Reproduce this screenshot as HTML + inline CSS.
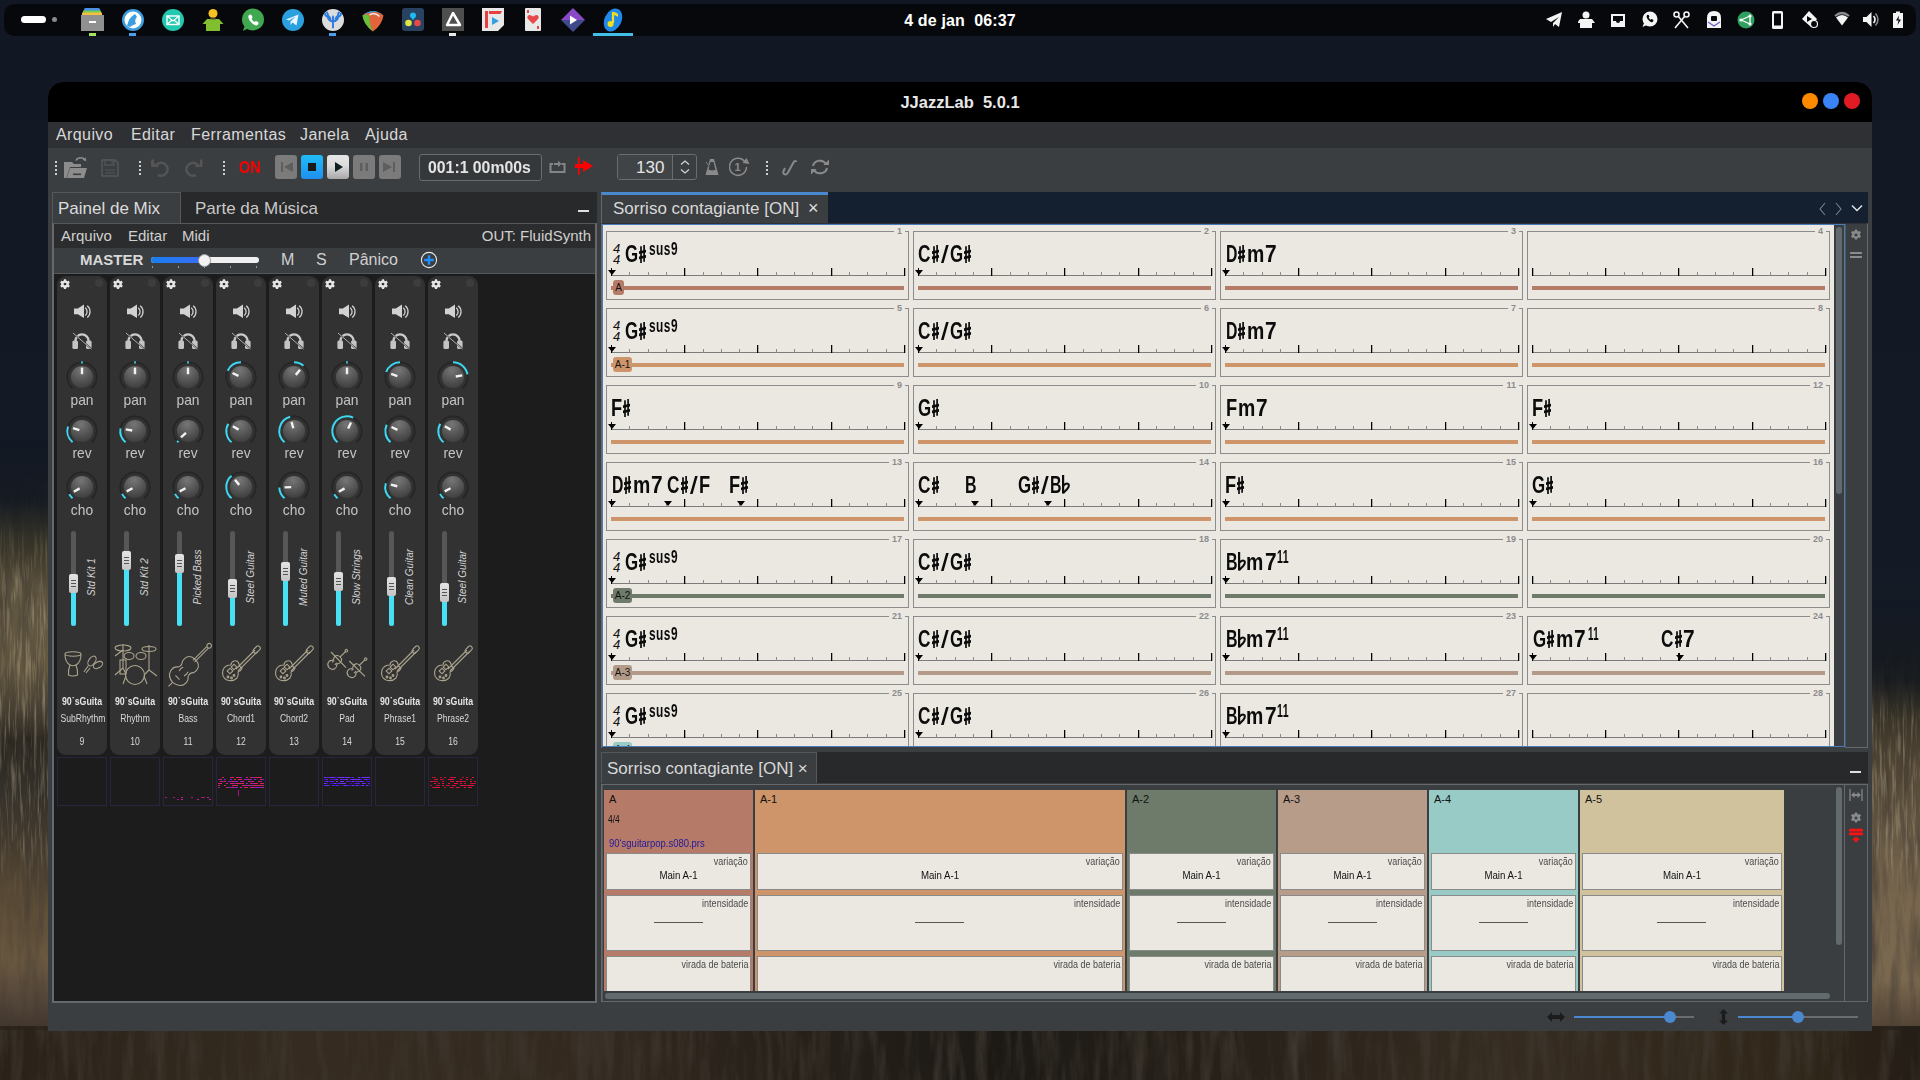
<!DOCTYPE html><html><head><meta charset="utf-8"><style>
*{box-sizing:border-box;margin:0;padding:0}
body{width:1920px;height:1080px;position:relative;overflow:hidden;font-family:"Liberation Sans",sans-serif;background:#131924;}
.a{position:absolute}
.t{white-space:nowrap;line-height:1}
#bg{position:absolute;left:0;top:0;width:1920px;height:1080px;background:linear-gradient(180deg,#121823 0%,#141a25 50%,#171b22 100%);}
#gl{position:absolute;left:0;top:440px;width:60px;height:640px;
background:
 linear-gradient(180deg, rgba(18,24,35,1) 0px, #151a22 60px, #3a3628 110px, #5e5440 150px, #665a42 230px, #4a4234 270px, #2a2620 300px, #34302a 350px, #4a3f30 420px, #5e4e38 470px, #6a5840 520px, #54463a 560px, #3a3028 600px, #2a221c 640px);}
#gr{position:absolute;left:1860px;top:600px;width:60px;height:480px;
background:
 linear-gradient(180deg, rgba(19,25,36,1) 0px, rgba(22,26,30,1) 80px, #3a3428 120px, #564a38 170px, #665844 230px, #78664e 300px, #7a684f 380px, #5a4a3a 420px, #3a3026 450px, #2a231c 480px);}
#gb{position:absolute;left:0;top:1026px;width:1920px;height:54px;
background:
 linear-gradient(90deg, #2a2219 0px, #352b20 300px, #33291f 600px, #262019 800px, #1c1915 1000px, #262019 1200px, #352b20 1500px, #302619 1800px, #241d16 1920px);}

.mn{color:#d4d4d4;font-size:16px}

.cell{border:1px solid #8c8c8c}
.bn{font-size:9px;font-weight:bold;color:#8c8c8c}
.bn span{background:#ebe8e1;padding:0 3px}
.ch{font-size:24px;font-weight:bold;color:#0c0c0c;transform-origin:0 0;letter-spacing:0}
.sh{-webkit-text-stroke:0.7px #0c0c0c}
.sup{font-size:15px;font-weight:bold;color:#0c0c0c;transform-origin:0 0;letter-spacing:0.6px}
.mk{width:0;height:0;border-left:4px solid transparent;border-right:4px solid transparent;border-top:5px solid #000}
.slb{height:15px;border-radius:3px;font-size:10px;color:#111;text-align:center;line-height:15px}
.ts{font-size:13px;font-style:italic;color:#111;line-height:11px}

.klab{font-size:15px;color:#c4c4c4;text-align:center;transform:scaleX(0.92)}
.vt{font-size:10px;font-style:italic;color:#d4d4d4;transform:translate(-50%,-50%) rotate(-90deg);}
.sl1{font-size:10px;font-weight:bold;color:#e4e4e4;text-align:center;transform:scaleX(0.88)}
.sl2{font-size:10px;color:#d8d8d8;text-align:center;transform:scaleX(0.86)}

.pbox{background:#ebe8e1;border:1px solid #8a8a8a}
.plab{font-size:10px;color:#4a4a4a;transform:scaleX(0.9);transform-origin:100% 0}
.pmain{font-size:11px;color:#111;text-align:center;transform:scaleX(0.88)}
</style></head><body><div id="bg"></div><div id="gl"></div><div id="gr"></div><div id="gb"></div>
<svg class="a" style="left:0;top:0" width="1920" height="1080"><defs>
<filter id="nz" x="0" y="0" width="100%" height="100%"><feTurbulence type="fractalNoise" baseFrequency="0.09 0.012" numOctaves="4" seed="7"/><feColorMatrix type="matrix" values="0 0 0 0 0.05  0 0 0 0 0.04  0 0 0 0 0.03  1.9 0 0 0 -0.78"/></filter>
<filter id="nz2" x="0" y="0" width="100%" height="100%"><feTurbulence type="fractalNoise" baseFrequency="0.35 0.025" numOctaves="3" seed="3"/><feColorMatrix type="matrix" values="0 0 0 0 0.78  0 0 0 0 0.68  0 0 0 0 0.45  1.5 0 0 0 -0.72"/></filter>
<linearGradient id="fv" x1="0" y1="0" x2="0" y2="1"><stop offset="0" stop-color="#fff" stop-opacity="0"/><stop offset="0.15" stop-color="#fff" stop-opacity="1"/><stop offset="0.8" stop-color="#fff" stop-opacity="1"/><stop offset="1" stop-color="#fff" stop-opacity="0"/></linearGradient>
<mask id="mv" maskContentUnits="objectBoundingBox"><rect width="1" height="1" fill="url(#fv)"/></mask>
</defs>
<rect x="0" y="470" width="49" height="610" filter="url(#nz)" opacity="0.8" mask="url(#mv)"/><rect x="0" y="520" width="49" height="380" filter="url(#nz2)" opacity="0.6" mask="url(#mv)"/>
<rect x="1872" y="640" width="48" height="440" filter="url(#nz)" opacity="0.8" mask="url(#mv)"/><rect x="1872" y="690" width="48" height="200" filter="url(#nz2)" opacity="0.6" mask="url(#mv)"/>
<rect x="0" y="1030" width="1920" height="50" filter="url(#nz)"/>
</svg>
<div class="a" style="left:4px;top:4px;width:1912px;height:32px;border-radius:10px;background:#07080b"></div>
<div class="a t" style="left:0px;top:13px;width:1920px;text-align:center;color:#fff;font-size:16px;font-weight:bold;letter-spacing:0.15px">4 de jan&nbsp; 06:37</div>
<div class="a" style="left:21px;top:16px;width:25px;height:7px;border-radius:4px;background:#fff"></div>
<div class="a" style="left:52px;top:17px;width:5px;height:5px;border-radius:50%;background:#8a8a8a"></div>
<svg class="a" style="left:81px;top:8px" width="24" height="24" viewBox="0 0 24 24"><rect x="3" y="0" width="16" height="4" rx="1.5" fill="#4a90e8"/><rect x="2" y="2.5" width="18" height="3" fill="#70d050"/><rect x="1" y="4.5" width="20" height="3" fill="#f8c040"/><rect x="0" y="7" width="23" height="16" fill="#909090"/><rect x="8" y="13" width="7" height="2" fill="#fff"/></svg>
<svg class="a" style="left:121px;top:8px" width="24" height="24" viewBox="0 0 24 24"><circle cx="12" cy="12" r="11" fill="#3a9ee0"/><circle cx="12" cy="12" r="8.5" fill="#fff"/><path d="M6 18 Q8 9 14 6 L16 9 Q13 12 15 16 Q11 17 9 19z" fill="#3a9ee0"/></svg>
<svg class="a" style="left:161px;top:8px" width="24" height="24" viewBox="0 0 24 24"><circle cx="12" cy="12" r="11" fill="#22c8b0"/><rect x="6" y="8" width="12" height="8.5" fill="none" stroke="#fff" stroke-width="1.4"/><path d="M6 8l6 5 6-5M6 16.5l4.5-4M18 16.5l-4.5-4" stroke="#fff" stroke-width="1.2" fill="none"/></svg>
<svg class="a" style="left:201px;top:8px" width="24" height="24" viewBox="0 0 24 24"><circle cx="12" cy="5.5" r="4.5" fill="#f8c020"/><path d="M6 11h12l4.5 5h-3.5v7h-14v-7h-3.5z" fill="#80c030"/><rect x="9.5" y="9.5" width="5" height="2" fill="#4a4a2a"/></svg>
<svg class="a" style="left:241px;top:8px" width="24" height="24" viewBox="0 0 24 24"><circle cx="12" cy="11.5" r="11" fill="#40a850"/><path d="M2 23l2-6 4 3z" fill="#40a850"/><path d="M8 7q1.5-1 2.5 0l1 2q0 1-1 1.5q1 2.5 3 3.5q.6-1 1.5-1l2 1q1 1 0 2.5q-2 2-5-0.5q-4-3-4.5-6q-.5-2 .5-3z" fill="#fff"/></svg>
<svg class="a" style="left:281px;top:8px" width="24" height="24" viewBox="0 0 24 24"><circle cx="12" cy="12" r="11" fill="#2aa0e0"/><path d="M5 11.5l12.5-5-2 11-4-3-2 2.5v-3.5l5-5-6.5 4z" fill="#e8f6ff"/></svg>
<svg class="a" style="left:321px;top:8px" width="24" height="24" viewBox="0 0 24 24"><circle cx="12" cy="12" r="11" fill="#dcdcdc"/><path d="M12 19.5v-6 M12 13.5q-4.5-.5-5.5-5 M12 13.5q4.5-.5 5.5-5 M6.5 8.5q-2.5-.5-2.5-3 M6.5 8.5q1-2.5-.5-4 M17.5 8.5q2.5-.5 2.5-3 M17.5 8.5q-1-2.5.5-4 M9.5 11q-.5-2.5-2.5-3.5 M14.5 11q.5-2.5 2.5-3.5 M12 13.5v-5" stroke="#2a7ae0" stroke-width="1.9" fill="none" stroke-linecap="round"/></svg>
<svg class="a" style="left:361px;top:8px" width="24" height="24" viewBox="0 0 24 24"><path d="M1.5 7.5Q12 -1.5 22.5 7.5Q21 17 12 23.5Q3 17 1.5 7.5z" fill="#e2643c"/><path d="M1.5 7.5Q5 6 8.5 8Q8 16 12 23.5Q3 17 1.5 7.5z" fill="#62c03a"/><path d="M1.5 7.5Q12 -1.5 22.5 7.5Q17 3.5 12 4.2Q6 4.5 1.5 7.5z" fill="#2f9be0"/><path d="M8.5 7Q14 3.8 18.5 8.5" stroke="#fff" stroke-width="1.3" fill="none"/></svg>
<svg class="a" style="left:402px;top:8px" width="24" height="24" viewBox="0 0 24 24"><rect x="0" y="0" width="22" height="23" rx="3" fill="#2a4262"/><circle cx="11" cy="7.5" r="3" fill="#20b8f0"/><path d="M11 7.5v4" stroke="#20b8f0" stroke-width="2"/><circle cx="6.5" cy="15" r="3.3" fill="#e0e840"/><circle cx="15.5" cy="15" r="3.3" fill="#e84848"/></svg>
<svg class="a" style="left:442px;top:8px" width="24" height="24" viewBox="0 0 24 24"><rect x="0" y="0" width="22" height="23" fill="#4e4e4e"/><path d="M11 5l7 12h-13z" fill="none" stroke="#fff" stroke-width="2.5" stroke-linejoin="round"/></svg>
<div class="a" style="left:449px;top:33px;width:7px;height:3px;background:#e8e8e8"></div>
<svg class="a" style="left:482px;top:8px" width="24" height="24" viewBox="0 0 24 24"><path d="M0 0h22v17l-6 6h-16z" fill="#e8e8e8"/><rect x="3" y="3" width="3" height="17" fill="#e84040"/><path d="M7 3h13l-1.5 3h-11.5z" fill="#e84040"/><path d="M10 9l7 4-7 4z" fill="#30a0e0"/></svg>
<svg class="a" style="left:525px;top:8px" width="16" height="24" viewBox="0 0 16 24"><rect x="0" y="0" width="16" height="23" rx="1" fill="#e8e8e8"/><path d="M8 16l-5-5q-1.5-2 0-3.5q2-1.5 5 1q3-2.5 5-1q1.5 1.5 0 3.5z" fill="#e84848"/><rect x="2" y="2" width="2" height="3" fill="#e84848"/><rect x="12" y="18" width="2" height="3" fill="#e84848"/></svg>
<svg class="a" style="left:561px;top:8px" width="24" height="24" viewBox="0 0 24 24"><path d="M12 0l12 12h-24z" fill="#8848c8"/><path d="M0 12h24l-12 12z" fill="#3e4a8a"/><path d="M9 7.5l7 4.5-7 4.5z" fill="#fff"/></svg>
<svg class="a" style="left:601px;top:8px" width="24" height="24" viewBox="0 0 24 24"><ellipse cx="12" cy="12" rx="8.5" ry="12" transform="rotate(25 12 12)" fill="#2088e8"/><path d="M12 4v11" stroke="#f0e020" stroke-width="2.2"/><circle cx="9.5" cy="16" r="3" fill="#f0e020"/><path d="M12 4q3 0 5 2v3q-2-2-5-2z" fill="#f0e020"/></svg>
<div class="a" style="left:89px;top:33px;width:7px;height:3px;background:#a8e060"></div>
<div class="a" style="left:129px;top:33px;width:7px;height:3px;background:#4aa0e8"></div>
<div class="a" style="left:329px;top:33px;width:7px;height:3px;background:#4aa0e8"></div>
<div class="a" style="left:593px;top:33px;width:40px;height:3px;background:#40c0e8"></div>
<svg class="a" style="left:1546px;top:11px" width="18" height="18" viewBox="0 0 18 18"><path d="M0 8l16-7-3 15-4-3-2 3v-4l6-6-8 5z" fill="#f4f4f4"/></svg>
<svg class="a" style="left:1578px;top:11px" width="18" height="18" viewBox="0 0 18 18"><circle cx="8" cy="4" r="3.5" fill="#f4f4f4"/><path d="M2 8h12l3 4h-3v5h-12v-5h-3z" fill="#f4f4f4"/></svg>
<svg class="a" style="left:1610px;top:11px" width="16" height="18" viewBox="0 0 16 18"><path d="M1 3h14v13h-14z" fill="#f4f4f4"/><path d="M3 5h10v5h-3q0 2-2 2t-2-2h-3z" fill="#07080b"/></svg>
<svg class="a" style="left:1642px;top:11px" width="16" height="18" viewBox="0 0 16 18"><circle cx="8" cy="8" r="7.5" fill="#f4f4f4"/><path d="M0.5 16l1.5-4 3 2z" fill="#f4f4f4"/><path d="M5 4q1-.7 1.7 0l.7 1.4q0 .7-.7 1q.7 1.7 2 2.4q.4-.7 1-.7l1.4.7q.7 .7 0 1.7q-1.4 1.4-3.4-.3q-2.7-2-3-4q-.3-1.4.3-2z" fill="#07080b"/></svg>
<svg class="a" style="left:1673px;top:11px" width="18" height="18" viewBox="0 0 18 18"><circle cx="3.5" cy="3.5" r="2.5" fill="none" stroke="#f4f4f4" stroke-width="1.6"/><circle cx="13.5" cy="3.5" r="2.5" fill="none" stroke="#f4f4f4" stroke-width="1.6"/><path d="M5 5l10 12M12 5l-10 12" stroke="#f4f4f4" stroke-width="1.6"/></svg>
<svg class="a" style="left:1707px;top:11px" width="14" height="18" viewBox="0 0 14 18"><path d="M0 7q0-7 7-7t7 7v10h-14z" fill="#f4f4f4"/><rect x="4" y="5" width="6" height="5" rx="1" fill="#07080b"/><path d="M1 11l6 4 6-4" stroke="#6a5acd" stroke-width="1.2" fill="none"/></svg>
<svg class="a" style="left:1737px;top:11px" width="18" height="18" viewBox="0 0 18 18"><circle cx="9" cy="9" r="8.5" fill="#30a060"/><path d="M4 9l9-4M4 9l9 4M13 5v8" stroke="#fff" stroke-width="1.3" fill="none"/><circle cx="4" cy="9" r="1.6" fill="#fff"/><circle cx="13" cy="5" r="1.6" fill="#fff"/><circle cx="13" cy="13" r="1.6" fill="#fff"/></svg>
<svg class="a" style="left:1772px;top:11px" width="11" height="18" viewBox="0 0 11 18"><rect x="0" y="0" width="11" height="18" rx="1.5" fill="#f4f4f4"/><rect x="2" y="2.5" width="7" height="12" fill="#07080b"/></svg>
<svg class="a" style="left:1802px;top:11px" width="17" height="18" viewBox="0 0 17 18"><path d="M7 0l8 8-6 8-9-8z" fill="#f4f4f4"/><path d="M5 5l5 3-5 3z" fill="#07080b"/><circle cx="12" cy="13" r="3.5" fill="#07080b" stroke="#f4f4f4" stroke-width="1.2"/></svg>
<svg class="a" style="left:1834px;top:11px" width="16" height="18" viewBox="0 0 16 18"><path d="M1 5q7-6 14 0" stroke="#8a8a8a" stroke-width="2.2" fill="none"/><path d="M2 6.5q6-5 12 0l-6 8z" fill="#f4f4f4"/></svg>
<svg class="a" style="left:1863px;top:11px" width="16" height="18" viewBox="0 0 16 18"><path d="M0 6h3.5l5-5v15l-5-5h-3.5z" fill="#f4f4f4"/><path d="M10.5 5q3 3.5 0 7" stroke="#f4f4f4" stroke-width="1.6" fill="none"/><path d="M12.5 2.5q5 6 0 12" stroke="#8a8a8a" stroke-width="1.5" fill="none"/></svg>
<svg class="a" style="left:1893px;top:11px" width="10" height="18" viewBox="0 0 10 18"><rect x="0" y="2" width="10" height="15" fill="#f4f4f4"/><rect x="3" y="0.5" width="4" height="2" fill="#f4f4f4"/><path d="M6 4.5l-3 5h2.5l-1 4.5 3.5-5.5h-2.5z" fill="#07080b"/></svg>
<div class="a" style="left:48px;top:82px;width:1824px;height:949px;background:#3b3e41;border-radius:15px 15px 0 0"></div>
<div class="a" style="left:48px;top:82px;width:1824px;height:40px;background:#000;border-radius:15px 15px 0 0"></div>
<div class="a t" style="left:48px;top:94px;width:1824px;text-align:center;color:#e8e8e8;font-size:16.5px;font-weight:bold">JJazzLab&nbsp; 5.0.1</div>
<div class="a" style="left:1802px;top:93px;width:16px;height:16px;border-radius:50%;background:#ff8a00"></div>
<div class="a" style="left:1823px;top:93px;width:16px;height:16px;border-radius:50%;background:#3b82f6"></div>
<div class="a" style="left:1844px;top:93px;width:16px;height:16px;border-radius:50%;background:#e01b24"></div>
<div class="a" style="left:48px;top:122px;width:1824px;height:26px;background:#2f3033"></div>
<div class="a t" style="left:56px;top:127px;color:#d8d8d8;font-size:16px;letter-spacing:0.4px">Arquivo</div>
<div class="a t" style="left:131px;top:127px;color:#d8d8d8;font-size:16px;letter-spacing:0.4px">Editar</div>
<div class="a t" style="left:191px;top:127px;color:#d8d8d8;font-size:16px;letter-spacing:0.4px">Ferramentas</div>
<div class="a t" style="left:300px;top:127px;color:#d8d8d8;font-size:16px;letter-spacing:0.4px">Janela</div>
<div class="a t" style="left:365px;top:127px;color:#d8d8d8;font-size:16px;letter-spacing:0.4px">Ajuda</div>
<div class="a" style="left:55px;top:161px;width:2px;height:2px;background:#d0d0d0"></div><div class="a" style="left:55px;top:165px;width:2px;height:2px;background:#d0d0d0"></div><div class="a" style="left:55px;top:169px;width:2px;height:2px;background:#d0d0d0"></div><div class="a" style="left:55px;top:173px;width:2px;height:2px;background:#d0d0d0"></div>
<div class="a" style="left:139px;top:161px;width:2px;height:2px;background:#d0d0d0"></div><div class="a" style="left:139px;top:165px;width:2px;height:2px;background:#d0d0d0"></div><div class="a" style="left:139px;top:169px;width:2px;height:2px;background:#d0d0d0"></div><div class="a" style="left:139px;top:173px;width:2px;height:2px;background:#d0d0d0"></div>
<div class="a" style="left:223px;top:161px;width:2px;height:2px;background:#d0d0d0"></div><div class="a" style="left:223px;top:165px;width:2px;height:2px;background:#d0d0d0"></div><div class="a" style="left:223px;top:169px;width:2px;height:2px;background:#d0d0d0"></div><div class="a" style="left:223px;top:173px;width:2px;height:2px;background:#d0d0d0"></div>
<div class="a" style="left:766px;top:161px;width:2px;height:2px;background:#d0d0d0"></div><div class="a" style="left:766px;top:165px;width:2px;height:2px;background:#d0d0d0"></div><div class="a" style="left:766px;top:169px;width:2px;height:2px;background:#d0d0d0"></div><div class="a" style="left:766px;top:173px;width:2px;height:2px;background:#d0d0d0"></div>
<svg class="a" style="left:64px;top:156px" width="24" height="23" viewBox="0 0 24 23">
      <path d="M0 6h8l2 2h7v3H6l-3.5 11H0z" fill="#8c8c8c"/><path d="M6 12h17l-3 10H3z" fill="#8c8c8c"/><rect x="9" y="17.5" width="8" height="1.6" fill="#3b3e41"/>
      <path d="M12 4.5a5 5 0 0 1 9 0" stroke="#8c8c8c" stroke-width="1.6" fill="none"/><path d="M19 4l3.5 1-1.2-3.8z" fill="#8c8c8c"/></svg>
<svg class="a" style="left:101px;top:159px" width="18" height="18" viewBox="0 0 18 18">
      <path d="M1 1h13l3 3v13H1z" fill="none" stroke="#555" stroke-width="1.6"/><rect x="4" y="1" width="9" height="5" fill="none" stroke="#555" stroke-width="1.4"/>
      <rect x="10.5" y="2" width="1.2" height="2.5" fill="#555"/><path d="M4 11h10M4 14h10" stroke="#555" stroke-width="1.2"/></svg>
<svg class="a" style="left:151px;top:159px" width="18" height="18" viewBox="0 0 18 18">
      <path d="M4 8a6.5 6.5 0 1 1 3 8" stroke="#555" stroke-width="2.4" fill="none"/><path d="M0 1v7h7" fill="#555"/><path d="M0.5 0.5h2.5v5h4.5v2.5H0.5z" fill="#555"/></svg>
<svg class="a" style="left:185px;top:159px" width="18" height="18" viewBox="0 0 18 18">
      <path d="M14 8a6.5 6.5 0 1 0 -3 8" stroke="#555" stroke-width="2.4" fill="none"/><path d="M17.5 0.5h-2.5v5h-4.5v2.5h7z" fill="#555"/></svg>
<div class="a t" style="left:239px;top:159px;font-size:17px;font-weight:bold;color:#ff0000;transform:scaleX(0.85);transform-origin:0 0">ON</div>
<div class="a" style="left:275px;top:155px;width:22px;height:24px;border-radius:3px;background:#7b7b7b"></div>
<svg class="a" style="left:275px;top:155px" width="22" height="24" viewBox="0 0 22 24"><path d="M6 7h2v10H6z M18 7v10l-9-5z" fill="#5e5e5e"/></svg>
<div class="a" style="left:301px;top:155px;width:22px;height:24px;border-radius:3px;background:linear-gradient(#20bdf8,#1f8ff0)"></div>
<svg class="a" style="left:301px;top:155px" width="22" height="24" viewBox="0 0 22 24"><rect x="7" y="8" width="8" height="8" fill="#1a1a1a"/></svg>
<div class="a" style="left:327px;top:155px;width:22px;height:24px;border-radius:3px;background:linear-gradient(#e6e6e6 0%,#dcdcdc 45%,#a8a8a8 100%)"></div>
<svg class="a" style="left:327px;top:155px" width="22" height="24" viewBox="0 0 22 24"><path d="M8 7v10l8-5z" fill="#0f2020"/></svg>
<div class="a" style="left:353px;top:155px;width:22px;height:24px;border-radius:3px;background:#7b7b7b"></div>
<svg class="a" style="left:353px;top:155px" width="22" height="24" viewBox="0 0 22 24"><path d="M7 8h2.5v8H7z M12.5 8H15v8h-2.5z" fill="#5e5e5e"/></svg>
<div class="a" style="left:379px;top:155px;width:22px;height:24px;border-radius:3px;background:#7b7b7b"></div>
<svg class="a" style="left:379px;top:155px" width="22" height="24" viewBox="0 0 22 24"><path d="M4 7v10l9-5z M14 7h2v10h-2z" fill="#5e5e5e"/></svg>
<div class="a" style="left:419px;top:154px;width:123px;height:27px;border:1px solid #6a6d70;border-radius:3px;background:#35383b"></div>
<div class="a t" style="left:428px;top:159px;font-size:17px;font-weight:bold;color:#e4e4e4;transform:scaleX(0.93);transform-origin:0 0">001:1 00m00s</div>
<svg class="a" style="left:549px;top:159px" width="18" height="16" viewBox="0 0 18 16">
      <path d="M4 5h-2.5v8h14v-8h-3" stroke="#858585" stroke-width="2" fill="none"/><path d="M5 5h6" stroke="#858585" stroke-width="2"/><path d="M9 1.5l3.5 3.5-3.5 3z" fill="#858585"/></svg>
<svg class="a" style="left:575px;top:157px" width="20" height="20" viewBox="0 0 20 20">
      <rect x="3" y="0" width="1.6" height="18" fill="#ff0000"/><path d="M0 7h8v-4l10 6-10 6v-4h-8z" fill="#ff0000"/></svg>
<div class="a" style="left:617px;top:154px;width:80px;height:26px;border:1px solid #6a6d70;border-radius:3px;background:#3b3e41"></div>
<div class="a" style="left:618px;top:155px;width:54px;height:24px;background:#414447"></div>
<div class="a" style="left:672px;top:155px;width:1px;height:24px;background:#6a6d70"></div>
<div class="a t" style="left:636px;top:159px;font-size:17px;color:#e4e4e4">130</div>
<svg class="a" style="left:678px;top:159px" width="14" height="16" viewBox="0 0 14 16">
      <path d="M3 5.5l4-3.5 4 3.5 M3 10.5l4 3.5 4-3.5" stroke="#d8d8d8" stroke-width="1.1" fill="none"/></svg>
<svg class="a" style="left:705px;top:158px" width="16" height="18" viewBox="0 0 16 18">
      <path d="M5 1h4l4.5 16h-13z" fill="#8a8a8a"/><path d="M1 4l7 9" stroke="#3b3e41" stroke-width="1.6"/><path d="M1 4l7 9" stroke="#8a8a8a" stroke-width="0.9"/>
      <path d="M5.5 4h3l2 8h-7z" fill="#3b3e41"/></svg>
<svg class="a" style="left:729px;top:157px" width="22" height="20" viewBox="0 0 22 20">
      <path d="M16 5a8.5 8.5 0 1 0 1.5 5" stroke="#8a8a8a" stroke-width="1.5" fill="none"/><path d="M13.5 6l4-5 3 6z" fill="#8a8a8a"/>
      <text x="5.5" y="14" font-size="11" font-weight="bold" fill="#8a8a8a" font-family="Liberation Sans">1</text></svg>
<svg class="a" style="left:781px;top:160px" width="16" height="16" viewBox="0 0 16 16">
      <path d="M13 1.5q2 -1 2.5 .5 M13 1.5l-6 11q-2 3 -4 1.5q-1.5 -1 0 -4l1-2" stroke="#8a8a8a" stroke-width="2" fill="none"/></svg>
<svg class="a" style="left:810px;top:158px" width="20" height="18" viewBox="0 0 20 18">
      <path d="M3 8a7 6.5 0 0 1 13-2 M17 10a7 6.5 0 0 1 -13 2" stroke="#8a8a8a" stroke-width="2" fill="none"/>
      <path d="M13.5 7h5.5v-5.5z M6.5 11h-5.5v5.5z" fill="#8a8a8a"/></svg>
<div class="a" style="left:52px;top:192px;width:545px;height:811px;background:#28292b"></div>
<div class="a" style="left:52px;top:192px;width:129px;height:32px;background:#3b3e41;border:1px solid #55585b;border-bottom:none"></div>
<div class="a t" style="left:58px;top:200px;color:#dcdcdc;font-size:17px">Painel de Mix</div>
<div class="a t" style="left:195px;top:200px;color:#c8c8c8;font-size:17px">Parte da M&uacute;sica</div>
<div class="a" style="left:578px;top:210px;width:11px;height:1.5px;background:#e0e0e0"></div>
<div class="a" style="left:52px;top:223px;width:545px;height:25px;background:#2b2c2e;border-top:1px solid #55585b"></div>
<div class="a t" style="left:61px;top:228px;color:#d0d0d0;font-size:15px">Arquivo</div>
<div class="a t" style="left:128px;top:228px;color:#d0d0d0;font-size:15px">Editar</div>
<div class="a t" style="left:182px;top:228px;color:#d0d0d0;font-size:15px">Midi</div>
<div class="a t" style="left:0px;top:228px;width:591px;text-align:right;color:#d0d0d0;font-size:15px">OUT: FluidSynth</div>
<div class="a" style="left:52px;top:248px;width:545px;height:25px;background:#3b3e41"></div>
<div class="a t" style="left:80px;top:252px;color:#d8d8d8;font-size:15px;font-weight:bold">MASTER</div>
<div class="a t" style="left:281px;top:252px;color:#d0d0d0;font-size:16px">M</div>
<div class="a t" style="left:316px;top:252px;color:#d0d0d0;font-size:16px">S</div>
<div class="a t" style="left:349px;top:252px;color:#d0d0d0;font-size:16px">P&acirc;nico</div>
<div class="a" style="left:52px;top:273px;width:545px;height:730px;background:#1c1c1c;border-top:1px solid #55585b"></div>
<svg width="0" height="0" style="position:absolute"><defs><radialGradient id="kg" cx="0.45" cy="0.2" r="0.9"><stop offset="0" stop-color="#767676"/><stop offset="0.6" stop-color="#505050"/><stop offset="1" stop-color="#383838"/></radialGradient></defs></svg>
<div class="a" style="left:57px;top:276px;width:50px;height:479px;background:#323232;border-radius:9px"></div>
<svg class="a" style="left:58.5px;top:277.5px" width="12" height="12" viewBox="-7 -7 14 14"><path fill="#e6e6e6" d="M-1.2 -5.5h2.4l.4 1.6a4 4 0 0 1 1.2 .7l1.6-.5 1.2 2.1-1.2 1.1a4 4 0 0 1 0 1.4l1.2 1.1-1.2 2.1-1.6-.5a4 4 0 0 1-1.2 .7l-.4 1.6h-2.4l-.4-1.6a4 4 0 0 1-1.2-.7l-1.6 .5-1.2-2.1 1.2-1.1a4 4 0 0 1 0-1.4l-1.2-1.1 1.2-2.1 1.6 .5a4 4 0 0 1 1.2-.7z M0 -1.6a1.6 1.6 0 1 0 .01 0z"/></svg>
<div class="a" style="left:95px;top:279px;width:8px;height:8px;border-radius:50%;background:#3d3d3d"></div>
<svg class="a" style="left:72px;top:302px" width="20" height="20" viewBox="-10 -9 20 20"><path fill="#d2d2d2" d="M-8 -2.6h3.8l6.2-3.8v13.4l-6.2-3.8h-3.8z"/><path d="M3.2 -3.2a5 5 0 0 1 0 7.8 M5.2 -5.2a7.6 7.6 0 0 1 0 11.8" stroke="#d2d2d2" stroke-width="1.3" fill="none"/></svg>
<svg class="a" style="left:72px;top:332px" width="20" height="20" viewBox="-10 -9 20 20"><path d="M-6.6 2v-2a6.6 6.6 0 0 1 13.2 0v2" stroke="#cacaca" stroke-width="2.3" fill="none"/><rect x="-9.6" y="-0.5" width="5.6" height="8.5" rx="1.5" fill="#c4c4c4"/><rect x="4" y="-0.5" width="5.6" height="8.5" rx="1.5" fill="#c4c4c4"/><line x1="-9" y1="-8" x2="9.5" y2="8" stroke="#2c2c2c" stroke-width="1.6"/><line x1="-9" y1="-8" x2="9.5" y2="8" stroke="#d8d8d8" stroke-width="0.8"/></svg>
<svg class="a" style="left:64px;top:359px" width="36" height="36" viewBox="-18 -18 36 36"><path d="M-9.45 11.26 A14.7 14.7 0 1 1 9.45 11.26" fill="none" stroke="#262626" stroke-width="1.8"/><path d="M-0.8 -14.7 L0.8 -14.7" stroke="#3ed8f2" stroke-width="2.2" fill="none"/><circle r="11.1" fill="url(#kg)"/><line x1="0.00" y1="-2.80" x2="0.00" y2="-9.40" stroke="#f2f2f2" stroke-width="2.4"/></svg>
<svg class="a" style="left:64px;top:413px" width="36" height="36" viewBox="-18 -18 36 36"><path d="M-9.45 11.26 A14.7 14.7 0 1 1 9.45 11.26" fill="none" stroke="#262626" stroke-width="1.8"/><path d="M-9.45 11.26 A14.7 14.7 0 0 1 -13.98 -4.54" fill="none" stroke="#3ed8f2" stroke-width="2"/><circle r="11.1" fill="url(#kg)"/><line x1="-2.66" y1="-0.87" x2="-8.94" y2="-2.90" stroke="#f2f2f2" stroke-width="2.4"/></svg>
<svg class="a" style="left:64px;top:469px" width="36" height="36" viewBox="-18 -18 36 36"><path d="M-9.45 11.26 A14.7 14.7 0 1 1 9.45 11.26" fill="none" stroke="#262626" stroke-width="1.8"/><path d="M-9.45 11.26 A14.7 14.7 0 0 1 -12.73 7.35" fill="none" stroke="#3ed8f2" stroke-width="2"/><circle r="11.1" fill="url(#kg)"/><line x1="-2.42" y1="1.40" x2="-8.14" y2="4.70" stroke="#f2f2f2" stroke-width="2.4"/></svg>
<div class="a t klab" style="left:57px;top:392px;width:50px">pan</div>
<div class="a t klab" style="left:57px;top:445px;width:50px">rev</div>
<div class="a t klab" style="left:57px;top:502px;width:50px">cho</div>
<div class="a" style="left:71px;top:531px;width:5px;height:95px;border-radius:2.5px;background:#575757"></div>
<div class="a" style="left:71px;top:582px;width:5px;height:44px;border-radius:0 0 2.5px 2.5px;background:#48e0f5"></div>
<div class="a" style="left:69px;top:574px;width:9px;height:19px;border-radius:2px;background:linear-gradient(#e4e4e4,#c4c4c4)"></div>
<div class="a" style="left:71px;top:580px;width:5px;height:1px;background:#555"></div>
<div class="a" style="left:71px;top:583px;width:5px;height:1px;background:#555"></div>
<div class="a" style="left:71px;top:586px;width:5px;height:1px;background:#555"></div>
<div class="a t vt" style="left:92px;top:577px">Std Kit 1</div>
<svg class="a" style="left:64px;top:651px" width="46" height="44" viewBox="0 0 46 44" overflow="visible"><g fill="none" stroke="#aca48e" stroke-width="1.1">
   <ellipse cx="9" cy="3" rx="8" ry="2.2"/><path d="M1 3.5 Q1 11 6 14 L6 14 Q4 19 4.5 24 Q9 26 13.5 24 Q14 19 12 14 Q17 11 17 3.5"/>
   <path d="M6 14 Q9 15.5 12 14"/>
   <ellipse cx="28" cy="10" rx="3.2" ry="5.5" transform="rotate(35 28 10)"/><ellipse cx="34" cy="14" rx="3" ry="5" transform="rotate(60 34 14)"/>
   <path d="M24 15 L20 21 M26 17 L22 22"/></g></svg>
<div class="a t sl1" style="left:57px;top:697px;width:50px">90&#729;sGuita</div>
<div class="a t sl2" style="left:57px;top:714px;width:50px">SubRhythm</div>
<div class="a t sl2" style="left:57px;top:736.5px;width:50px">9</div>
<div class="a" style="left:57px;top:757px;width:50px;height:49px;border:1px solid #26263e"></div>
<div class="a" style="left:110px;top:276px;width:50px;height:479px;background:#323232;border-radius:9px"></div>
<svg class="a" style="left:111.5px;top:277.5px" width="12" height="12" viewBox="-7 -7 14 14"><path fill="#e6e6e6" d="M-1.2 -5.5h2.4l.4 1.6a4 4 0 0 1 1.2 .7l1.6-.5 1.2 2.1-1.2 1.1a4 4 0 0 1 0 1.4l1.2 1.1-1.2 2.1-1.6-.5a4 4 0 0 1-1.2 .7l-.4 1.6h-2.4l-.4-1.6a4 4 0 0 1-1.2-.7l-1.6 .5-1.2-2.1 1.2-1.1a4 4 0 0 1 0-1.4l-1.2-1.1 1.2-2.1 1.6 .5a4 4 0 0 1 1.2-.7z M0 -1.6a1.6 1.6 0 1 0 .01 0z"/></svg>
<div class="a" style="left:148px;top:279px;width:8px;height:8px;border-radius:50%;background:#3d3d3d"></div>
<svg class="a" style="left:125px;top:302px" width="20" height="20" viewBox="-10 -9 20 20"><path fill="#d2d2d2" d="M-8 -2.6h3.8l6.2-3.8v13.4l-6.2-3.8h-3.8z"/><path d="M3.2 -3.2a5 5 0 0 1 0 7.8 M5.2 -5.2a7.6 7.6 0 0 1 0 11.8" stroke="#d2d2d2" stroke-width="1.3" fill="none"/></svg>
<svg class="a" style="left:125px;top:332px" width="20" height="20" viewBox="-10 -9 20 20"><path d="M-6.6 2v-2a6.6 6.6 0 0 1 13.2 0v2" stroke="#cacaca" stroke-width="2.3" fill="none"/><rect x="-9.6" y="-0.5" width="5.6" height="8.5" rx="1.5" fill="#c4c4c4"/><rect x="4" y="-0.5" width="5.6" height="8.5" rx="1.5" fill="#c4c4c4"/><line x1="-9" y1="-8" x2="9.5" y2="8" stroke="#2c2c2c" stroke-width="1.6"/><line x1="-9" y1="-8" x2="9.5" y2="8" stroke="#d8d8d8" stroke-width="0.8"/></svg>
<svg class="a" style="left:117px;top:359px" width="36" height="36" viewBox="-18 -18 36 36"><path d="M-9.45 11.26 A14.7 14.7 0 1 1 9.45 11.26" fill="none" stroke="#262626" stroke-width="1.8"/><path d="M-0.8 -14.7 L0.8 -14.7" stroke="#3ed8f2" stroke-width="2.2" fill="none"/><circle r="11.1" fill="url(#kg)"/><line x1="0.00" y1="-2.80" x2="0.00" y2="-9.40" stroke="#f2f2f2" stroke-width="2.4"/></svg>
<svg class="a" style="left:117px;top:413px" width="36" height="36" viewBox="-18 -18 36 36"><path d="M-9.45 11.26 A14.7 14.7 0 1 1 9.45 11.26" fill="none" stroke="#262626" stroke-width="1.8"/><path d="M-9.45 11.26 A14.7 14.7 0 0 1 -14.48 -2.55" fill="none" stroke="#3ed8f2" stroke-width="2"/><circle r="11.1" fill="url(#kg)"/><line x1="-2.76" y1="-0.49" x2="-9.26" y2="-1.63" stroke="#f2f2f2" stroke-width="2.4"/></svg>
<svg class="a" style="left:117px;top:469px" width="36" height="36" viewBox="-18 -18 36 36"><path d="M-9.45 11.26 A14.7 14.7 0 1 1 9.45 11.26" fill="none" stroke="#262626" stroke-width="1.8"/><path d="M-9.45 11.26 A14.7 14.7 0 0 1 -12.98 6.90" fill="none" stroke="#3ed8f2" stroke-width="2"/><circle r="11.1" fill="url(#kg)"/><line x1="-2.47" y1="1.31" x2="-8.30" y2="4.41" stroke="#f2f2f2" stroke-width="2.4"/></svg>
<div class="a t klab" style="left:110px;top:392px;width:50px">pan</div>
<div class="a t klab" style="left:110px;top:445px;width:50px">rev</div>
<div class="a t klab" style="left:110px;top:502px;width:50px">cho</div>
<div class="a" style="left:124px;top:531px;width:5px;height:95px;border-radius:2.5px;background:#575757"></div>
<div class="a" style="left:124px;top:559px;width:5px;height:67px;border-radius:0 0 2.5px 2.5px;background:#48e0f5"></div>
<div class="a" style="left:122px;top:551px;width:9px;height:19px;border-radius:2px;background:linear-gradient(#e4e4e4,#c4c4c4)"></div>
<div class="a" style="left:124px;top:557px;width:5px;height:1px;background:#555"></div>
<div class="a" style="left:124px;top:560px;width:5px;height:1px;background:#555"></div>
<div class="a" style="left:124px;top:563px;width:5px;height:1px;background:#555"></div>
<div class="a t vt" style="left:145px;top:577px">Std Kit 2</div>
<svg class="a" style="left:112px;top:643px" width="46" height="44" viewBox="0 0 46 44" overflow="visible"><g fill="none" stroke="#aca48e" stroke-width="1.1">
   <ellipse cx="11" cy="5" rx="8" ry="3"/><ellipse cx="37" cy="6" rx="7" ry="2.5"/>
   <path d="M11 1v24 M37 2v25 M3 13l8-6"/>
   <ellipse cx="17" cy="13" rx="5" ry="3.5"/><ellipse cx="29" cy="13" rx="5" ry="3.5"/>
   <circle cx="23" cy="32" r="9.5"/><rect x="8" y="17" width="6" height="14"/>
   <path d="M11 25 L3 32 M11 25 L14 31 M37 27 L45 33 M37 27 L32 32 M14 33 L11 41 M32 33 L35 41"/></g></svg>
<div class="a t sl1" style="left:110px;top:697px;width:50px">90&#729;sGuita</div>
<div class="a t sl2" style="left:110px;top:714px;width:50px">Rhythm</div>
<div class="a t sl2" style="left:110px;top:736.5px;width:50px">10</div>
<div class="a" style="left:110px;top:757px;width:50px;height:49px;border:1px solid #26263e"></div>
<div class="a" style="left:163px;top:276px;width:50px;height:479px;background:#323232;border-radius:9px"></div>
<svg class="a" style="left:164.5px;top:277.5px" width="12" height="12" viewBox="-7 -7 14 14"><path fill="#e6e6e6" d="M-1.2 -5.5h2.4l.4 1.6a4 4 0 0 1 1.2 .7l1.6-.5 1.2 2.1-1.2 1.1a4 4 0 0 1 0 1.4l1.2 1.1-1.2 2.1-1.6-.5a4 4 0 0 1-1.2 .7l-.4 1.6h-2.4l-.4-1.6a4 4 0 0 1-1.2-.7l-1.6 .5-1.2-2.1 1.2-1.1a4 4 0 0 1 0-1.4l-1.2-1.1 1.2-2.1 1.6 .5a4 4 0 0 1 1.2-.7z M0 -1.6a1.6 1.6 0 1 0 .01 0z"/></svg>
<div class="a" style="left:201px;top:279px;width:8px;height:8px;border-radius:50%;background:#3d3d3d"></div>
<svg class="a" style="left:178px;top:302px" width="20" height="20" viewBox="-10 -9 20 20"><path fill="#d2d2d2" d="M-8 -2.6h3.8l6.2-3.8v13.4l-6.2-3.8h-3.8z"/><path d="M3.2 -3.2a5 5 0 0 1 0 7.8 M5.2 -5.2a7.6 7.6 0 0 1 0 11.8" stroke="#d2d2d2" stroke-width="1.3" fill="none"/></svg>
<svg class="a" style="left:178px;top:332px" width="20" height="20" viewBox="-10 -9 20 20"><path d="M-6.6 2v-2a6.6 6.6 0 0 1 13.2 0v2" stroke="#cacaca" stroke-width="2.3" fill="none"/><rect x="-9.6" y="-0.5" width="5.6" height="8.5" rx="1.5" fill="#c4c4c4"/><rect x="4" y="-0.5" width="5.6" height="8.5" rx="1.5" fill="#c4c4c4"/><line x1="-9" y1="-8" x2="9.5" y2="8" stroke="#2c2c2c" stroke-width="1.6"/><line x1="-9" y1="-8" x2="9.5" y2="8" stroke="#d8d8d8" stroke-width="0.8"/></svg>
<svg class="a" style="left:170px;top:359px" width="36" height="36" viewBox="-18 -18 36 36"><path d="M-9.45 11.26 A14.7 14.7 0 1 1 9.45 11.26" fill="none" stroke="#262626" stroke-width="1.8"/><path d="M-0.8 -14.7 L0.8 -14.7" stroke="#3ed8f2" stroke-width="2.2" fill="none"/><circle r="11.1" fill="url(#kg)"/><line x1="0.00" y1="-2.80" x2="0.00" y2="-9.40" stroke="#f2f2f2" stroke-width="2.4"/></svg>
<svg class="a" style="left:170px;top:413px" width="36" height="36" viewBox="-18 -18 36 36"><path d="M-9.45 11.26 A14.7 14.7 0 1 1 9.45 11.26" fill="none" stroke="#262626" stroke-width="1.8"/><path d="M-9.45 11.26 A14.7 14.7 0 0 1 -10.92 9.84" fill="none" stroke="#3ed8f2" stroke-width="2"/><circle r="11.1" fill="url(#kg)"/><line x1="-2.08" y1="1.87" x2="-6.99" y2="6.29" stroke="#f2f2f2" stroke-width="2.4"/></svg>
<svg class="a" style="left:170px;top:469px" width="36" height="36" viewBox="-18 -18 36 36"><path d="M-9.45 11.26 A14.7 14.7 0 1 1 9.45 11.26" fill="none" stroke="#262626" stroke-width="1.8"/><path d="M-9.45 11.26 A14.7 14.7 0 0 1 -12.98 6.90" fill="none" stroke="#3ed8f2" stroke-width="2"/><circle r="11.1" fill="url(#kg)"/><line x1="-2.47" y1="1.31" x2="-8.30" y2="4.41" stroke="#f2f2f2" stroke-width="2.4"/></svg>
<div class="a t klab" style="left:163px;top:392px;width:50px">pan</div>
<div class="a t klab" style="left:163px;top:445px;width:50px">rev</div>
<div class="a t klab" style="left:163px;top:502px;width:50px">cho</div>
<div class="a" style="left:177px;top:531px;width:5px;height:95px;border-radius:2.5px;background:#575757"></div>
<div class="a" style="left:177px;top:562px;width:5px;height:64px;border-radius:0 0 2.5px 2.5px;background:#48e0f5"></div>
<div class="a" style="left:175px;top:554px;width:9px;height:19px;border-radius:2px;background:linear-gradient(#e4e4e4,#c4c4c4)"></div>
<div class="a" style="left:177px;top:560px;width:5px;height:1px;background:#555"></div>
<div class="a" style="left:177px;top:563px;width:5px;height:1px;background:#555"></div>
<div class="a" style="left:177px;top:566px;width:5px;height:1px;background:#555"></div>
<div class="a t vt" style="left:198px;top:577px">Picked Bass</div>
<svg class="a" style="left:168px;top:645px" width="46" height="44" viewBox="0 0 46 44" overflow="visible"><g fill="none" stroke="#aca48e" stroke-width="1.1"><g transform="translate(16 26) rotate(45) scale(1.15)" stroke-width="0.95">
   <path d="M0 -14 C7 -14 8 -9 7 -5 C5 -3 5 -1 6 1 C10 4 10 13 0 14 C-10 13 -10 4 -6 1 C-5 -1 -5 -3 -7 -5 C-8 -9 -7 -14 0 -14 z"/>
   <path d="M-1 -12 L-1 -29 M1 -12 L1 -29 M0 14 L0 19 M-3 -2 q-1 3 0 5 M3 -2 q1 3 0 5 M-2.5 8 h5"/><circle cx="0" cy="-31" r="2"/></g></g></svg>
<div class="a t sl1" style="left:163px;top:697px;width:50px">90&#729;sGuita</div>
<div class="a t sl2" style="left:163px;top:714px;width:50px">Bass</div>
<div class="a t sl2" style="left:163px;top:736.5px;width:50px">11</div>
<div class="a" style="left:163px;top:757px;width:50px;height:49px;border:1px solid #26263e"></div>
<div class="a" style="left:216px;top:276px;width:50px;height:479px;background:#323232;border-radius:9px"></div>
<svg class="a" style="left:217.5px;top:277.5px" width="12" height="12" viewBox="-7 -7 14 14"><path fill="#e6e6e6" d="M-1.2 -5.5h2.4l.4 1.6a4 4 0 0 1 1.2 .7l1.6-.5 1.2 2.1-1.2 1.1a4 4 0 0 1 0 1.4l1.2 1.1-1.2 2.1-1.6-.5a4 4 0 0 1-1.2 .7l-.4 1.6h-2.4l-.4-1.6a4 4 0 0 1-1.2-.7l-1.6 .5-1.2-2.1 1.2-1.1a4 4 0 0 1 0-1.4l-1.2-1.1 1.2-2.1 1.6 .5a4 4 0 0 1 1.2-.7z M0 -1.6a1.6 1.6 0 1 0 .01 0z"/></svg>
<div class="a" style="left:254px;top:279px;width:8px;height:8px;border-radius:50%;background:#3d3d3d"></div>
<svg class="a" style="left:231px;top:302px" width="20" height="20" viewBox="-10 -9 20 20"><path fill="#d2d2d2" d="M-8 -2.6h3.8l6.2-3.8v13.4l-6.2-3.8h-3.8z"/><path d="M3.2 -3.2a5 5 0 0 1 0 7.8 M5.2 -5.2a7.6 7.6 0 0 1 0 11.8" stroke="#d2d2d2" stroke-width="1.3" fill="none"/></svg>
<svg class="a" style="left:231px;top:332px" width="20" height="20" viewBox="-10 -9 20 20"><path d="M-6.6 2v-2a6.6 6.6 0 0 1 13.2 0v2" stroke="#cacaca" stroke-width="2.3" fill="none"/><rect x="-9.6" y="-0.5" width="5.6" height="8.5" rx="1.5" fill="#c4c4c4"/><rect x="4" y="-0.5" width="5.6" height="8.5" rx="1.5" fill="#c4c4c4"/><line x1="-9" y1="-8" x2="9.5" y2="8" stroke="#2c2c2c" stroke-width="1.6"/><line x1="-9" y1="-8" x2="9.5" y2="8" stroke="#d8d8d8" stroke-width="0.8"/></svg>
<svg class="a" style="left:223px;top:359px" width="36" height="36" viewBox="-18 -18 36 36"><path d="M-9.45 11.26 A14.7 14.7 0 1 1 9.45 11.26" fill="none" stroke="#262626" stroke-width="1.8"/><path d="M-13.32 -6.21 A14.7 14.7 0 0 1 0.00 -14.70" fill="none" stroke="#3ed8f2" stroke-width="2"/><circle r="11.1" fill="url(#kg)"/><line x1="-2.54" y1="-1.18" x2="-8.52" y2="-3.97" stroke="#f2f2f2" stroke-width="2.4"/></svg>
<svg class="a" style="left:223px;top:413px" width="36" height="36" viewBox="-18 -18 36 36"><path d="M-9.45 11.26 A14.7 14.7 0 1 1 9.45 11.26" fill="none" stroke="#262626" stroke-width="1.8"/><path d="M-9.45 11.26 A14.7 14.7 0 0 1 -12.73 -7.35" fill="none" stroke="#3ed8f2" stroke-width="2"/><circle r="11.1" fill="url(#kg)"/><line x1="-2.42" y1="-1.40" x2="-8.14" y2="-4.70" stroke="#f2f2f2" stroke-width="2.4"/></svg>
<svg class="a" style="left:223px;top:469px" width="36" height="36" viewBox="-18 -18 36 36"><path d="M-9.45 11.26 A14.7 14.7 0 1 1 9.45 11.26" fill="none" stroke="#262626" stroke-width="1.8"/><path d="M-9.45 11.26 A14.7 14.7 0 0 1 -9.45 -11.26" fill="none" stroke="#3ed8f2" stroke-width="2"/><circle r="11.1" fill="url(#kg)"/><line x1="-1.80" y1="-2.14" x2="-6.04" y2="-7.20" stroke="#f2f2f2" stroke-width="2.4"/></svg>
<div class="a t klab" style="left:216px;top:392px;width:50px">pan</div>
<div class="a t klab" style="left:216px;top:445px;width:50px">rev</div>
<div class="a t klab" style="left:216px;top:502px;width:50px">cho</div>
<div class="a" style="left:230px;top:531px;width:5px;height:95px;border-radius:2.5px;background:#575757"></div>
<div class="a" style="left:230px;top:587px;width:5px;height:39px;border-radius:0 0 2.5px 2.5px;background:#48e0f5"></div>
<div class="a" style="left:228px;top:579px;width:9px;height:19px;border-radius:2px;background:linear-gradient(#e4e4e4,#c4c4c4)"></div>
<div class="a" style="left:230px;top:585px;width:5px;height:1px;background:#555"></div>
<div class="a" style="left:230px;top:588px;width:5px;height:1px;background:#555"></div>
<div class="a" style="left:230px;top:591px;width:5px;height:1px;background:#555"></div>
<div class="a t vt" style="left:251px;top:577px">Steel Guitar</div>
<svg class="a" style="left:222px;top:646px" width="46" height="44" viewBox="0 0 46 44" overflow="visible"><g fill="none" stroke="#aca48e" stroke-width="1.1">
   <path d="M20 22 Q17 21 17 18 Q16 14 12 15 Q9 16 9 19 Q3 19 1 24 Q-1 31 5 34 Q11 36 15 32 Q17 29 16 26 Q19 25 20 22 z"/>
   <path d="M14 23 L33 4 M16 25 L35 6"/><rect x="32.5" y="-0.5" width="4.5" height="8" rx="2" transform="rotate(45 34.75 3.5)"/>
   <rect x="6" y="23" width="4" height="4" transform="rotate(45 8 25)"/><rect x="10" y="19" width="4" height="4" transform="rotate(45 12 21)"/>
   <circle cx="6" cy="31" r="0.9"/><circle cx="9.5" cy="32" r="0.9"/><circle cx="12" cy="29.5" r="0.9"/></g></svg>
<div class="a t sl1" style="left:216px;top:697px;width:50px">90&#729;sGuita</div>
<div class="a t sl2" style="left:216px;top:714px;width:50px">Chord1</div>
<div class="a t sl2" style="left:216px;top:736.5px;width:50px">12</div>
<div class="a" style="left:216px;top:757px;width:50px;height:49px;border:1px solid #26263e"></div>
<div class="a" style="left:269px;top:276px;width:50px;height:479px;background:#323232;border-radius:9px"></div>
<svg class="a" style="left:270.5px;top:277.5px" width="12" height="12" viewBox="-7 -7 14 14"><path fill="#e6e6e6" d="M-1.2 -5.5h2.4l.4 1.6a4 4 0 0 1 1.2 .7l1.6-.5 1.2 2.1-1.2 1.1a4 4 0 0 1 0 1.4l1.2 1.1-1.2 2.1-1.6-.5a4 4 0 0 1-1.2 .7l-.4 1.6h-2.4l-.4-1.6a4 4 0 0 1-1.2-.7l-1.6 .5-1.2-2.1 1.2-1.1a4 4 0 0 1 0-1.4l-1.2-1.1 1.2-2.1 1.6 .5a4 4 0 0 1 1.2-.7z M0 -1.6a1.6 1.6 0 1 0 .01 0z"/></svg>
<div class="a" style="left:307px;top:279px;width:8px;height:8px;border-radius:50%;background:#3d3d3d"></div>
<svg class="a" style="left:284px;top:302px" width="20" height="20" viewBox="-10 -9 20 20"><path fill="#d2d2d2" d="M-8 -2.6h3.8l6.2-3.8v13.4l-6.2-3.8h-3.8z"/><path d="M3.2 -3.2a5 5 0 0 1 0 7.8 M5.2 -5.2a7.6 7.6 0 0 1 0 11.8" stroke="#d2d2d2" stroke-width="1.3" fill="none"/></svg>
<svg class="a" style="left:284px;top:332px" width="20" height="20" viewBox="-10 -9 20 20"><path d="M-6.6 2v-2a6.6 6.6 0 0 1 13.2 0v2" stroke="#cacaca" stroke-width="2.3" fill="none"/><rect x="-9.6" y="-0.5" width="5.6" height="8.5" rx="1.5" fill="#c4c4c4"/><rect x="4" y="-0.5" width="5.6" height="8.5" rx="1.5" fill="#c4c4c4"/><line x1="-9" y1="-8" x2="9.5" y2="8" stroke="#2c2c2c" stroke-width="1.6"/><line x1="-9" y1="-8" x2="9.5" y2="8" stroke="#d8d8d8" stroke-width="0.8"/></svg>
<svg class="a" style="left:276px;top:359px" width="36" height="36" viewBox="-18 -18 36 36"><path d="M-9.45 11.26 A14.7 14.7 0 1 1 9.45 11.26" fill="none" stroke="#262626" stroke-width="1.8"/><path d="M0.00 -14.70 A14.7 14.7 0 0 1 9.45 -11.26" fill="none" stroke="#3ed8f2" stroke-width="2"/><circle r="11.1" fill="url(#kg)"/><line x1="1.80" y1="-2.14" x2="6.04" y2="-7.20" stroke="#f2f2f2" stroke-width="2.4"/></svg>
<svg class="a" style="left:276px;top:413px" width="36" height="36" viewBox="-18 -18 36 36"><path d="M-9.45 11.26 A14.7 14.7 0 1 1 9.45 11.26" fill="none" stroke="#262626" stroke-width="1.8"/><path d="M-9.45 11.26 A14.7 14.7 0 0 1 -3.80 -14.20" fill="none" stroke="#3ed8f2" stroke-width="2"/><circle r="11.1" fill="url(#kg)"/><line x1="-0.72" y1="-2.70" x2="-2.43" y2="-9.08" stroke="#f2f2f2" stroke-width="2.4"/></svg>
<svg class="a" style="left:276px;top:469px" width="36" height="36" viewBox="-18 -18 36 36"><path d="M-9.45 11.26 A14.7 14.7 0 1 1 9.45 11.26" fill="none" stroke="#262626" stroke-width="1.8"/><path d="M-9.45 11.26 A14.7 14.7 0 0 1 -14.69 0.51" fill="none" stroke="#3ed8f2" stroke-width="2"/><circle r="11.1" fill="url(#kg)"/><line x1="-2.80" y1="0.10" x2="-9.39" y2="0.33" stroke="#f2f2f2" stroke-width="2.4"/></svg>
<div class="a t klab" style="left:269px;top:392px;width:50px">pan</div>
<div class="a t klab" style="left:269px;top:445px;width:50px">rev</div>
<div class="a t klab" style="left:269px;top:502px;width:50px">cho</div>
<div class="a" style="left:283px;top:531px;width:5px;height:95px;border-radius:2.5px;background:#575757"></div>
<div class="a" style="left:283px;top:570px;width:5px;height:56px;border-radius:0 0 2.5px 2.5px;background:#48e0f5"></div>
<div class="a" style="left:281px;top:562px;width:9px;height:19px;border-radius:2px;background:linear-gradient(#e4e4e4,#c4c4c4)"></div>
<div class="a" style="left:283px;top:568px;width:5px;height:1px;background:#555"></div>
<div class="a" style="left:283px;top:571px;width:5px;height:1px;background:#555"></div>
<div class="a" style="left:283px;top:574px;width:5px;height:1px;background:#555"></div>
<div class="a t vt" style="left:304px;top:577px">Muted Guitar</div>
<svg class="a" style="left:275px;top:646px" width="46" height="44" viewBox="0 0 46 44" overflow="visible"><g fill="none" stroke="#aca48e" stroke-width="1.1">
   <path d="M20 22 Q17 21 17 18 Q16 14 12 15 Q9 16 9 19 Q3 19 1 24 Q-1 31 5 34 Q11 36 15 32 Q17 29 16 26 Q19 25 20 22 z"/>
   <path d="M14 23 L33 4 M16 25 L35 6"/><rect x="32.5" y="-0.5" width="4.5" height="8" rx="2" transform="rotate(45 34.75 3.5)"/>
   <rect x="6" y="23" width="4" height="4" transform="rotate(45 8 25)"/><rect x="10" y="19" width="4" height="4" transform="rotate(45 12 21)"/>
   <circle cx="6" cy="31" r="0.9"/><circle cx="9.5" cy="32" r="0.9"/><circle cx="12" cy="29.5" r="0.9"/></g></svg>
<div class="a t sl1" style="left:269px;top:697px;width:50px">90&#729;sGuita</div>
<div class="a t sl2" style="left:269px;top:714px;width:50px">Chord2</div>
<div class="a t sl2" style="left:269px;top:736.5px;width:50px">13</div>
<div class="a" style="left:269px;top:757px;width:50px;height:49px;border:1px solid #26263e"></div>
<div class="a" style="left:322px;top:276px;width:50px;height:479px;background:#323232;border-radius:9px"></div>
<svg class="a" style="left:323.5px;top:277.5px" width="12" height="12" viewBox="-7 -7 14 14"><path fill="#e6e6e6" d="M-1.2 -5.5h2.4l.4 1.6a4 4 0 0 1 1.2 .7l1.6-.5 1.2 2.1-1.2 1.1a4 4 0 0 1 0 1.4l1.2 1.1-1.2 2.1-1.6-.5a4 4 0 0 1-1.2 .7l-.4 1.6h-2.4l-.4-1.6a4 4 0 0 1-1.2-.7l-1.6 .5-1.2-2.1 1.2-1.1a4 4 0 0 1 0-1.4l-1.2-1.1 1.2-2.1 1.6 .5a4 4 0 0 1 1.2-.7z M0 -1.6a1.6 1.6 0 1 0 .01 0z"/></svg>
<div class="a" style="left:360px;top:279px;width:8px;height:8px;border-radius:50%;background:#3d3d3d"></div>
<svg class="a" style="left:337px;top:302px" width="20" height="20" viewBox="-10 -9 20 20"><path fill="#d2d2d2" d="M-8 -2.6h3.8l6.2-3.8v13.4l-6.2-3.8h-3.8z"/><path d="M3.2 -3.2a5 5 0 0 1 0 7.8 M5.2 -5.2a7.6 7.6 0 0 1 0 11.8" stroke="#d2d2d2" stroke-width="1.3" fill="none"/></svg>
<svg class="a" style="left:337px;top:332px" width="20" height="20" viewBox="-10 -9 20 20"><path d="M-6.6 2v-2a6.6 6.6 0 0 1 13.2 0v2" stroke="#cacaca" stroke-width="2.3" fill="none"/><rect x="-9.6" y="-0.5" width="5.6" height="8.5" rx="1.5" fill="#c4c4c4"/><rect x="4" y="-0.5" width="5.6" height="8.5" rx="1.5" fill="#c4c4c4"/><line x1="-9" y1="-8" x2="9.5" y2="8" stroke="#2c2c2c" stroke-width="1.6"/><line x1="-9" y1="-8" x2="9.5" y2="8" stroke="#d8d8d8" stroke-width="0.8"/></svg>
<svg class="a" style="left:329px;top:359px" width="36" height="36" viewBox="-18 -18 36 36"><path d="M-9.45 11.26 A14.7 14.7 0 1 1 9.45 11.26" fill="none" stroke="#262626" stroke-width="1.8"/><path d="M-0.8 -14.7 L0.8 -14.7" stroke="#3ed8f2" stroke-width="2.2" fill="none"/><circle r="11.1" fill="url(#kg)"/><line x1="0.00" y1="-2.80" x2="0.00" y2="-9.40" stroke="#f2f2f2" stroke-width="2.4"/></svg>
<svg class="a" style="left:329px;top:413px" width="36" height="36" viewBox="-18 -18 36 36"><path d="M-9.45 11.26 A14.7 14.7 0 1 1 9.45 11.26" fill="none" stroke="#262626" stroke-width="1.8"/><path d="M-9.45 11.26 A14.7 14.7 0 0 1 6.21 -13.32" fill="none" stroke="#3ed8f2" stroke-width="2"/><circle r="11.1" fill="url(#kg)"/><line x1="1.18" y1="-2.54" x2="3.97" y2="-8.52" stroke="#f2f2f2" stroke-width="2.4"/></svg>
<svg class="a" style="left:329px;top:469px" width="36" height="36" viewBox="-18 -18 36 36"><path d="M-9.45 11.26 A14.7 14.7 0 1 1 9.45 11.26" fill="none" stroke="#262626" stroke-width="1.8"/><path d="M-9.45 11.26 A14.7 14.7 0 0 1 -12.73 7.35" fill="none" stroke="#3ed8f2" stroke-width="2"/><circle r="11.1" fill="url(#kg)"/><line x1="-2.42" y1="1.40" x2="-8.14" y2="4.70" stroke="#f2f2f2" stroke-width="2.4"/></svg>
<div class="a t klab" style="left:322px;top:392px;width:50px">pan</div>
<div class="a t klab" style="left:322px;top:445px;width:50px">rev</div>
<div class="a t klab" style="left:322px;top:502px;width:50px">cho</div>
<div class="a" style="left:336px;top:531px;width:5px;height:95px;border-radius:2.5px;background:#575757"></div>
<div class="a" style="left:336px;top:580px;width:5px;height:46px;border-radius:0 0 2.5px 2.5px;background:#48e0f5"></div>
<div class="a" style="left:334px;top:572px;width:9px;height:19px;border-radius:2px;background:linear-gradient(#e4e4e4,#c4c4c4)"></div>
<div class="a" style="left:336px;top:578px;width:5px;height:1px;background:#555"></div>
<div class="a" style="left:336px;top:581px;width:5px;height:1px;background:#555"></div>
<div class="a" style="left:336px;top:584px;width:5px;height:1px;background:#555"></div>
<div class="a t vt" style="left:357px;top:577px">Slow Strings</div>
<svg class="a" style="left:328px;top:650px" width="46" height="44" viewBox="0 0 46 44" overflow="visible"><g fill="none" stroke="#aca48e">
   <g transform="translate(6.7 12.4) rotate(45) scale(0.55)" stroke-width="2"><path d="M0 -14 C7 -14 8 -9 7 -5 C5 -3 5 -1 6 1 C10 4 10 13 0 14 C-10 13 -10 4 -6 1 C-5 -1 -5 -3 -7 -5 C-8 -9 -7 -14 0 -14 z M0 -14 L0 -28 M-3 -2 q-1 3 0 5 M3 -2 q1 3 0 5"/><circle cx="0" cy="-30" r="2.2"/></g>
   <g transform="translate(26 20.7) rotate(45) scale(0.55)" stroke-width="2"><path d="M0 -14 C7 -14 8 -9 7 -5 C5 -3 5 -1 6 1 C10 4 10 13 0 14 C-10 13 -10 4 -6 1 C-5 -1 -5 -3 -7 -5 C-8 -9 -7 -14 0 -14 z M0 -14 L0 -28 M-3 -2 q-1 3 0 5 M3 -2 q1 3 0 5"/><circle cx="0" cy="-30" r="2.2"/></g>
   <path d="M3 2 L18 17.7 M21.3 11 L37 26.4" stroke-width="1.1"/></g></svg>
<div class="a t sl1" style="left:322px;top:697px;width:50px">90&#729;sGuita</div>
<div class="a t sl2" style="left:322px;top:714px;width:50px">Pad</div>
<div class="a t sl2" style="left:322px;top:736.5px;width:50px">14</div>
<div class="a" style="left:322px;top:757px;width:50px;height:49px;border:1px solid #26263e"></div>
<div class="a" style="left:375px;top:276px;width:50px;height:479px;background:#323232;border-radius:9px"></div>
<svg class="a" style="left:376.5px;top:277.5px" width="12" height="12" viewBox="-7 -7 14 14"><path fill="#e6e6e6" d="M-1.2 -5.5h2.4l.4 1.6a4 4 0 0 1 1.2 .7l1.6-.5 1.2 2.1-1.2 1.1a4 4 0 0 1 0 1.4l1.2 1.1-1.2 2.1-1.6-.5a4 4 0 0 1-1.2 .7l-.4 1.6h-2.4l-.4-1.6a4 4 0 0 1-1.2-.7l-1.6 .5-1.2-2.1 1.2-1.1a4 4 0 0 1 0-1.4l-1.2-1.1 1.2-2.1 1.6 .5a4 4 0 0 1 1.2-.7z M0 -1.6a1.6 1.6 0 1 0 .01 0z"/></svg>
<div class="a" style="left:413px;top:279px;width:8px;height:8px;border-radius:50%;background:#3d3d3d"></div>
<svg class="a" style="left:390px;top:302px" width="20" height="20" viewBox="-10 -9 20 20"><path fill="#d2d2d2" d="M-8 -2.6h3.8l6.2-3.8v13.4l-6.2-3.8h-3.8z"/><path d="M3.2 -3.2a5 5 0 0 1 0 7.8 M5.2 -5.2a7.6 7.6 0 0 1 0 11.8" stroke="#d2d2d2" stroke-width="1.3" fill="none"/></svg>
<svg class="a" style="left:390px;top:332px" width="20" height="20" viewBox="-10 -9 20 20"><path d="M-6.6 2v-2a6.6 6.6 0 0 1 13.2 0v2" stroke="#cacaca" stroke-width="2.3" fill="none"/><rect x="-9.6" y="-0.5" width="5.6" height="8.5" rx="1.5" fill="#c4c4c4"/><rect x="4" y="-0.5" width="5.6" height="8.5" rx="1.5" fill="#c4c4c4"/><line x1="-9" y1="-8" x2="9.5" y2="8" stroke="#2c2c2c" stroke-width="1.6"/><line x1="-9" y1="-8" x2="9.5" y2="8" stroke="#d8d8d8" stroke-width="0.8"/></svg>
<svg class="a" style="left:382px;top:359px" width="36" height="36" viewBox="-18 -18 36 36"><path d="M-9.45 11.26 A14.7 14.7 0 1 1 9.45 11.26" fill="none" stroke="#262626" stroke-width="1.8"/><path d="M-13.81 -5.03 A14.7 14.7 0 0 1 0.00 -14.70" fill="none" stroke="#3ed8f2" stroke-width="2"/><circle r="11.1" fill="url(#kg)"/><line x1="-2.63" y1="-0.96" x2="-8.83" y2="-3.21" stroke="#f2f2f2" stroke-width="2.4"/></svg>
<svg class="a" style="left:382px;top:413px" width="36" height="36" viewBox="-18 -18 36 36"><path d="M-9.45 11.26 A14.7 14.7 0 1 1 9.45 11.26" fill="none" stroke="#262626" stroke-width="1.8"/><path d="M-9.45 11.26 A14.7 14.7 0 0 1 -13.32 -6.21" fill="none" stroke="#3ed8f2" stroke-width="2"/><circle r="11.1" fill="url(#kg)"/><line x1="-2.54" y1="-1.18" x2="-8.52" y2="-3.97" stroke="#f2f2f2" stroke-width="2.4"/></svg>
<svg class="a" style="left:382px;top:469px" width="36" height="36" viewBox="-18 -18 36 36"><path d="M-9.45 11.26 A14.7 14.7 0 1 1 9.45 11.26" fill="none" stroke="#262626" stroke-width="1.8"/><path d="M-9.45 11.26 A14.7 14.7 0 0 1 -14.20 -3.80" fill="none" stroke="#3ed8f2" stroke-width="2"/><circle r="11.1" fill="url(#kg)"/><line x1="-2.70" y1="-0.72" x2="-9.08" y2="-2.43" stroke="#f2f2f2" stroke-width="2.4"/></svg>
<div class="a t klab" style="left:375px;top:392px;width:50px">pan</div>
<div class="a t klab" style="left:375px;top:445px;width:50px">rev</div>
<div class="a t klab" style="left:375px;top:502px;width:50px">cho</div>
<div class="a" style="left:389px;top:531px;width:5px;height:95px;border-radius:2.5px;background:#575757"></div>
<div class="a" style="left:389px;top:585px;width:5px;height:41px;border-radius:0 0 2.5px 2.5px;background:#48e0f5"></div>
<div class="a" style="left:387px;top:577px;width:9px;height:19px;border-radius:2px;background:linear-gradient(#e4e4e4,#c4c4c4)"></div>
<div class="a" style="left:389px;top:583px;width:5px;height:1px;background:#555"></div>
<div class="a" style="left:389px;top:586px;width:5px;height:1px;background:#555"></div>
<div class="a" style="left:389px;top:589px;width:5px;height:1px;background:#555"></div>
<div class="a t vt" style="left:410px;top:577px">Clean Guitar</div>
<svg class="a" style="left:381px;top:646px" width="46" height="44" viewBox="0 0 46 44" overflow="visible"><g fill="none" stroke="#aca48e" stroke-width="1.1">
   <path d="M20 22 Q17 21 17 18 Q16 14 12 15 Q9 16 9 19 Q3 19 1 24 Q-1 31 5 34 Q11 36 15 32 Q17 29 16 26 Q19 25 20 22 z"/>
   <path d="M14 23 L33 4 M16 25 L35 6"/><rect x="32.5" y="-0.5" width="4.5" height="8" rx="2" transform="rotate(45 34.75 3.5)"/>
   <rect x="6" y="23" width="4" height="4" transform="rotate(45 8 25)"/><rect x="10" y="19" width="4" height="4" transform="rotate(45 12 21)"/>
   <circle cx="6" cy="31" r="0.9"/><circle cx="9.5" cy="32" r="0.9"/><circle cx="12" cy="29.5" r="0.9"/></g></svg>
<div class="a t sl1" style="left:375px;top:697px;width:50px">90&#729;sGuita</div>
<div class="a t sl2" style="left:375px;top:714px;width:50px">Phrase1</div>
<div class="a t sl2" style="left:375px;top:736.5px;width:50px">15</div>
<div class="a" style="left:375px;top:757px;width:50px;height:49px;border:1px solid #26263e"></div>
<div class="a" style="left:428px;top:276px;width:50px;height:479px;background:#323232;border-radius:9px"></div>
<svg class="a" style="left:429.5px;top:277.5px" width="12" height="12" viewBox="-7 -7 14 14"><path fill="#e6e6e6" d="M-1.2 -5.5h2.4l.4 1.6a4 4 0 0 1 1.2 .7l1.6-.5 1.2 2.1-1.2 1.1a4 4 0 0 1 0 1.4l1.2 1.1-1.2 2.1-1.6-.5a4 4 0 0 1-1.2 .7l-.4 1.6h-2.4l-.4-1.6a4 4 0 0 1-1.2-.7l-1.6 .5-1.2-2.1 1.2-1.1a4 4 0 0 1 0-1.4l-1.2-1.1 1.2-2.1 1.6 .5a4 4 0 0 1 1.2-.7z M0 -1.6a1.6 1.6 0 1 0 .01 0z"/></svg>
<div class="a" style="left:466px;top:279px;width:8px;height:8px;border-radius:50%;background:#3d3d3d"></div>
<svg class="a" style="left:443px;top:302px" width="20" height="20" viewBox="-10 -9 20 20"><path fill="#d2d2d2" d="M-8 -2.6h3.8l6.2-3.8v13.4l-6.2-3.8h-3.8z"/><path d="M3.2 -3.2a5 5 0 0 1 0 7.8 M5.2 -5.2a7.6 7.6 0 0 1 0 11.8" stroke="#d2d2d2" stroke-width="1.3" fill="none"/></svg>
<svg class="a" style="left:443px;top:332px" width="20" height="20" viewBox="-10 -9 20 20"><path d="M-6.6 2v-2a6.6 6.6 0 0 1 13.2 0v2" stroke="#cacaca" stroke-width="2.3" fill="none"/><rect x="-9.6" y="-0.5" width="5.6" height="8.5" rx="1.5" fill="#c4c4c4"/><rect x="4" y="-0.5" width="5.6" height="8.5" rx="1.5" fill="#c4c4c4"/><line x1="-9" y1="-8" x2="9.5" y2="8" stroke="#2c2c2c" stroke-width="1.6"/><line x1="-9" y1="-8" x2="9.5" y2="8" stroke="#d8d8d8" stroke-width="0.8"/></svg>
<svg class="a" style="left:435px;top:359px" width="36" height="36" viewBox="-18 -18 36 36"><path d="M-9.45 11.26 A14.7 14.7 0 1 1 9.45 11.26" fill="none" stroke="#262626" stroke-width="1.8"/><path d="M0.00 -14.70 A14.7 14.7 0 0 1 14.48 -2.55" fill="none" stroke="#3ed8f2" stroke-width="2"/><circle r="11.1" fill="url(#kg)"/><line x1="2.76" y1="-0.49" x2="9.26" y2="-1.63" stroke="#f2f2f2" stroke-width="2.4"/></svg>
<svg class="a" style="left:435px;top:413px" width="36" height="36" viewBox="-18 -18 36 36"><path d="M-9.45 11.26 A14.7 14.7 0 1 1 9.45 11.26" fill="none" stroke="#262626" stroke-width="1.8"/><path d="M-9.45 11.26 A14.7 14.7 0 0 1 -12.73 -7.35" fill="none" stroke="#3ed8f2" stroke-width="2"/><circle r="11.1" fill="url(#kg)"/><line x1="-2.42" y1="-1.40" x2="-8.14" y2="-4.70" stroke="#f2f2f2" stroke-width="2.4"/></svg>
<svg class="a" style="left:435px;top:469px" width="36" height="36" viewBox="-18 -18 36 36"><path d="M-9.45 11.26 A14.7 14.7 0 1 1 9.45 11.26" fill="none" stroke="#262626" stroke-width="1.8"/><path d="M-9.45 11.26 A14.7 14.7 0 0 1 -12.98 6.90" fill="none" stroke="#3ed8f2" stroke-width="2"/><circle r="11.1" fill="url(#kg)"/><line x1="-2.47" y1="1.31" x2="-8.30" y2="4.41" stroke="#f2f2f2" stroke-width="2.4"/></svg>
<div class="a t klab" style="left:428px;top:392px;width:50px">pan</div>
<div class="a t klab" style="left:428px;top:445px;width:50px">rev</div>
<div class="a t klab" style="left:428px;top:502px;width:50px">cho</div>
<div class="a" style="left:442px;top:531px;width:5px;height:95px;border-radius:2.5px;background:#575757"></div>
<div class="a" style="left:442px;top:591px;width:5px;height:35px;border-radius:0 0 2.5px 2.5px;background:#48e0f5"></div>
<div class="a" style="left:440px;top:583px;width:9px;height:19px;border-radius:2px;background:linear-gradient(#e4e4e4,#c4c4c4)"></div>
<div class="a" style="left:442px;top:589px;width:5px;height:1px;background:#555"></div>
<div class="a" style="left:442px;top:592px;width:5px;height:1px;background:#555"></div>
<div class="a" style="left:442px;top:595px;width:5px;height:1px;background:#555"></div>
<div class="a t vt" style="left:463px;top:577px">Steel Guitar</div>
<svg class="a" style="left:434px;top:646px" width="46" height="44" viewBox="0 0 46 44" overflow="visible"><g fill="none" stroke="#aca48e" stroke-width="1.1">
   <path d="M20 22 Q17 21 17 18 Q16 14 12 15 Q9 16 9 19 Q3 19 1 24 Q-1 31 5 34 Q11 36 15 32 Q17 29 16 26 Q19 25 20 22 z"/>
   <path d="M14 23 L33 4 M16 25 L35 6"/><rect x="32.5" y="-0.5" width="4.5" height="8" rx="2" transform="rotate(45 34.75 3.5)"/>
   <rect x="6" y="23" width="4" height="4" transform="rotate(45 8 25)"/><rect x="10" y="19" width="4" height="4" transform="rotate(45 12 21)"/>
   <circle cx="6" cy="31" r="0.9"/><circle cx="9.5" cy="32" r="0.9"/><circle cx="12" cy="29.5" r="0.9"/></g></svg>
<div class="a t sl1" style="left:428px;top:697px;width:50px">90&#729;sGuita</div>
<div class="a t sl2" style="left:428px;top:714px;width:50px">Phrase2</div>
<div class="a t sl2" style="left:428px;top:736.5px;width:50px">16</div>
<div class="a" style="left:428px;top:757px;width:50px;height:49px;border:1px solid #26263e"></div>
<div class="a" style="left:52px;top:223px;width:545px;height:780px;border:2px solid #66696c;border-top:1px solid #55585b"></div>
<div class="a" style="left:601px;top:192px;width:1267px;height:32px;background:#142030"></div>
<div class="a" style="left:601px;top:192px;width:227px;height:32px;background:#3b3e41;border-top:3px solid #4a88d0;border-left:1px solid #66696c"></div>
<div class="a t" style="left:613px;top:200px;color:#d8d8d8;font-size:17px">Sorriso contagiante [ON]</div>
<div class="a t" style="left:808px;top:199px;color:#e0e0e0;font-size:18px">&times;</div>
<div class="a" style="left:601px;top:223px;width:1267px;height:525px;background:#3b3e41;border-top:1px solid #2e3033;border-left:1px solid #66696c;border-right:1px solid #66696c"></div>
<div class="a" style="left:602px;top:224px;width:1243px;height:523px;background:#ebe8e1;border:1px solid #4a7ab8"></div>
<div class="a" style="left:603px;top:225px;width:1231px;height:521px;overflow:hidden"><div class="a" style="left:-603px;top:-225px;width:1920px;height:1080px"><div class="a cell" style="left:606px;top:231px;width:303px;height:69px"></div>
<div class="a t bn" style="left:809px;top:227px;width:96px;text-align:right"><span>1</span></div>
<div class="a" style="left:611px;top:275px;width:294px;height:1px;background:#7c7c7c"></div>
<div class="a" style="left:629px;top:272px;width:1px;height:4px;background:#8a8a8a"></div>
<div class="a" style="left:648px;top:272px;width:1px;height:4px;background:#8a8a8a"></div>
<div class="a" style="left:666px;top:272px;width:1px;height:4px;background:#8a8a8a"></div>
<div class="a" style="left:684px;top:268px;width:1px;height:8px;background:#000;box-shadow:0.6px 0 0 rgba(0,0,0,0.45)"></div>
<div class="a" style="left:703px;top:272px;width:1px;height:4px;background:#8a8a8a"></div>
<div class="a" style="left:721px;top:272px;width:1px;height:4px;background:#8a8a8a"></div>
<div class="a" style="left:739px;top:272px;width:1px;height:4px;background:#8a8a8a"></div>
<div class="a" style="left:757px;top:268px;width:1px;height:8px;background:#000;box-shadow:0.6px 0 0 rgba(0,0,0,0.45)"></div>
<div class="a" style="left:776px;top:272px;width:1px;height:4px;background:#8a8a8a"></div>
<div class="a" style="left:794px;top:272px;width:1px;height:4px;background:#8a8a8a"></div>
<div class="a" style="left:812px;top:272px;width:1px;height:4px;background:#8a8a8a"></div>
<div class="a" style="left:831px;top:268px;width:1px;height:8px;background:#000;box-shadow:0.6px 0 0 rgba(0,0,0,0.45)"></div>
<div class="a" style="left:849px;top:272px;width:1px;height:4px;background:#8a8a8a"></div>
<div class="a" style="left:867px;top:272px;width:1px;height:4px;background:#8a8a8a"></div>
<div class="a" style="left:886px;top:272px;width:1px;height:4px;background:#8a8a8a"></div>
<div class="a" style="left:904px;top:268px;width:1px;height:8px;background:#000;box-shadow:0.6px 0 0 rgba(0,0,0,0.45)"></div>
<div class="a mk" style="left:607.5px;top:270px"></div>
<div class="a" style="left:611px;top:268px;width:1px;height:8px;background:#000"></div>
<div class="a" style="left:611px;top:286px;width:293px;height:4px;background:#b57b68"></div>
<div class="a t slb" style="left:613px;top:280px;width:11px;background:#b57b68">A</div>
<div class="a t ts" style="left:613px;top:243px">4<br>4</div>
<div class="a t ch" style="left:625.30px;top:242.25px;transform:scaleX(0.702)">G</div>
<svg class="a" style="left:639.00px;top:245px" width="7" height="18" viewBox="0 0 7 18"><path d="M2 1.2v16.8 M5.1 0v16.8" stroke="#0c0c0c" stroke-width="1.7"/><path d="M0 6.2l7-1.5v2.7l-7 1.5z M0 11.6l7-1.5v2.7l-7 1.5z" fill="#0c0c0c"/></svg>
<div class="a t sup" style="left:649px;top:240.3px;transform:scale(0.793,1.17)">sus9</div>
<div class="a cell" style="left:913px;top:231px;width:303px;height:69px"></div>
<div class="a t bn" style="left:1116px;top:227px;width:96px;text-align:right"><span>2</span></div>
<div class="a" style="left:918px;top:275px;width:294px;height:1px;background:#7c7c7c"></div>
<div class="a" style="left:936px;top:272px;width:1px;height:4px;background:#8a8a8a"></div>
<div class="a" style="left:955px;top:272px;width:1px;height:4px;background:#8a8a8a"></div>
<div class="a" style="left:973px;top:272px;width:1px;height:4px;background:#8a8a8a"></div>
<div class="a" style="left:991px;top:268px;width:1px;height:8px;background:#000;box-shadow:0.6px 0 0 rgba(0,0,0,0.45)"></div>
<div class="a" style="left:1010px;top:272px;width:1px;height:4px;background:#8a8a8a"></div>
<div class="a" style="left:1028px;top:272px;width:1px;height:4px;background:#8a8a8a"></div>
<div class="a" style="left:1046px;top:272px;width:1px;height:4px;background:#8a8a8a"></div>
<div class="a" style="left:1064px;top:268px;width:1px;height:8px;background:#000;box-shadow:0.6px 0 0 rgba(0,0,0,0.45)"></div>
<div class="a" style="left:1083px;top:272px;width:1px;height:4px;background:#8a8a8a"></div>
<div class="a" style="left:1101px;top:272px;width:1px;height:4px;background:#8a8a8a"></div>
<div class="a" style="left:1119px;top:272px;width:1px;height:4px;background:#8a8a8a"></div>
<div class="a" style="left:1138px;top:268px;width:1px;height:8px;background:#000;box-shadow:0.6px 0 0 rgba(0,0,0,0.45)"></div>
<div class="a" style="left:1156px;top:272px;width:1px;height:4px;background:#8a8a8a"></div>
<div class="a" style="left:1174px;top:272px;width:1px;height:4px;background:#8a8a8a"></div>
<div class="a" style="left:1193px;top:272px;width:1px;height:4px;background:#8a8a8a"></div>
<div class="a" style="left:1211px;top:268px;width:1px;height:8px;background:#000;box-shadow:0.6px 0 0 rgba(0,0,0,0.45)"></div>
<div class="a mk" style="left:914.5px;top:270px"></div>
<div class="a" style="left:918px;top:268px;width:1px;height:8px;background:#000"></div>
<div class="a" style="left:918px;top:286px;width:293px;height:4px;background:#b57b68"></div>
<div class="a t ch" style="left:918.28px;top:242.25px;transform:scaleX(0.717)">C</div>
<svg class="a" style="left:931.90px;top:245px" width="7" height="18" viewBox="0 0 7 18"><path d="M2 1.2v16.8 M5.1 0v16.8" stroke="#0c0c0c" stroke-width="1.7"/><path d="M0 6.2l7-1.5v2.7l-7 1.5z M0 11.6l7-1.5v2.7l-7 1.5z" fill="#0c0c0c"/></svg>
<svg class="a" style="left:941.00px;top:245px" width="8" height="18" viewBox="0 0 8 18"><polygon points="0,18 2.6,18 7.7,0 5.1,0" fill="#0c0c0c"/></svg>
<div class="a t ch" style="left:950.10px;top:242.25px;transform:scaleX(0.702)">G</div>
<svg class="a" style="left:963.80px;top:245px" width="7" height="18" viewBox="0 0 7 18"><path d="M2 1.2v16.8 M5.1 0v16.8" stroke="#0c0c0c" stroke-width="1.7"/><path d="M0 6.2l7-1.5v2.7l-7 1.5z M0 11.6l7-1.5v2.7l-7 1.5z" fill="#0c0c0c"/></svg>
<div class="a cell" style="left:1220px;top:231px;width:303px;height:69px"></div>
<div class="a t bn" style="left:1423px;top:227px;width:96px;text-align:right"><span>3</span></div>
<div class="a" style="left:1225px;top:275px;width:294px;height:1px;background:#7c7c7c"></div>
<div class="a" style="left:1243px;top:272px;width:1px;height:4px;background:#8a8a8a"></div>
<div class="a" style="left:1262px;top:272px;width:1px;height:4px;background:#8a8a8a"></div>
<div class="a" style="left:1280px;top:272px;width:1px;height:4px;background:#8a8a8a"></div>
<div class="a" style="left:1298px;top:268px;width:1px;height:8px;background:#000;box-shadow:0.6px 0 0 rgba(0,0,0,0.45)"></div>
<div class="a" style="left:1317px;top:272px;width:1px;height:4px;background:#8a8a8a"></div>
<div class="a" style="left:1335px;top:272px;width:1px;height:4px;background:#8a8a8a"></div>
<div class="a" style="left:1353px;top:272px;width:1px;height:4px;background:#8a8a8a"></div>
<div class="a" style="left:1371px;top:268px;width:1px;height:8px;background:#000;box-shadow:0.6px 0 0 rgba(0,0,0,0.45)"></div>
<div class="a" style="left:1390px;top:272px;width:1px;height:4px;background:#8a8a8a"></div>
<div class="a" style="left:1408px;top:272px;width:1px;height:4px;background:#8a8a8a"></div>
<div class="a" style="left:1426px;top:272px;width:1px;height:4px;background:#8a8a8a"></div>
<div class="a" style="left:1445px;top:268px;width:1px;height:8px;background:#000;box-shadow:0.6px 0 0 rgba(0,0,0,0.45)"></div>
<div class="a" style="left:1463px;top:272px;width:1px;height:4px;background:#8a8a8a"></div>
<div class="a" style="left:1481px;top:272px;width:1px;height:4px;background:#8a8a8a"></div>
<div class="a" style="left:1500px;top:272px;width:1px;height:4px;background:#8a8a8a"></div>
<div class="a" style="left:1518px;top:268px;width:1px;height:8px;background:#000;box-shadow:0.6px 0 0 rgba(0,0,0,0.45)"></div>
<div class="a mk" style="left:1221.5px;top:270px"></div>
<div class="a" style="left:1225px;top:268px;width:1px;height:8px;background:#000"></div>
<div class="a" style="left:1225px;top:286px;width:293px;height:4px;background:#b57b68"></div>
<div class="a t ch" style="left:1226.01px;top:242.25px;transform:scaleX(0.658)">D</div>
<svg class="a" style="left:1238.30px;top:245px" width="7" height="18" viewBox="0 0 7 18"><path d="M2 1.2v16.8 M5.1 0v16.8" stroke="#0c0c0c" stroke-width="1.7"/><path d="M0 6.2l7-1.5v2.7l-7 1.5z M0 11.6l7-1.5v2.7l-7 1.5z" fill="#0c0c0c"/></svg>
<div class="a t ch" style="left:1247.28px;top:242.25px;transform:scaleX(0.811)">m</div>
<div class="a t ch" style="left:1265.33px;top:242.25px;transform:scaleX(0.871)">7</div>
<div class="a cell" style="left:1527px;top:231px;width:303px;height:69px"></div>
<div class="a t bn" style="left:1730px;top:227px;width:96px;text-align:right"><span>4</span></div>
<div class="a" style="left:1532px;top:275px;width:294px;height:1px;background:#7c7c7c"></div>
<div class="a" style="left:1532px;top:268px;width:1px;height:8px;background:#000;box-shadow:0.6px 0 0 rgba(0,0,0,0.45)"></div>
<div class="a" style="left:1550px;top:272px;width:1px;height:4px;background:#8a8a8a"></div>
<div class="a" style="left:1569px;top:272px;width:1px;height:4px;background:#8a8a8a"></div>
<div class="a" style="left:1587px;top:272px;width:1px;height:4px;background:#8a8a8a"></div>
<div class="a" style="left:1605px;top:268px;width:1px;height:8px;background:#000;box-shadow:0.6px 0 0 rgba(0,0,0,0.45)"></div>
<div class="a" style="left:1624px;top:272px;width:1px;height:4px;background:#8a8a8a"></div>
<div class="a" style="left:1642px;top:272px;width:1px;height:4px;background:#8a8a8a"></div>
<div class="a" style="left:1660px;top:272px;width:1px;height:4px;background:#8a8a8a"></div>
<div class="a" style="left:1678px;top:268px;width:1px;height:8px;background:#000;box-shadow:0.6px 0 0 rgba(0,0,0,0.45)"></div>
<div class="a" style="left:1697px;top:272px;width:1px;height:4px;background:#8a8a8a"></div>
<div class="a" style="left:1715px;top:272px;width:1px;height:4px;background:#8a8a8a"></div>
<div class="a" style="left:1733px;top:272px;width:1px;height:4px;background:#8a8a8a"></div>
<div class="a" style="left:1752px;top:268px;width:1px;height:8px;background:#000;box-shadow:0.6px 0 0 rgba(0,0,0,0.45)"></div>
<div class="a" style="left:1770px;top:272px;width:1px;height:4px;background:#8a8a8a"></div>
<div class="a" style="left:1788px;top:272px;width:1px;height:4px;background:#8a8a8a"></div>
<div class="a" style="left:1807px;top:272px;width:1px;height:4px;background:#8a8a8a"></div>
<div class="a" style="left:1825px;top:268px;width:1px;height:8px;background:#000;box-shadow:0.6px 0 0 rgba(0,0,0,0.45)"></div>
<div class="a" style="left:1532px;top:286px;width:293px;height:4px;background:#b57b68"></div>
<div class="a cell" style="left:606px;top:308px;width:303px;height:69px"></div>
<div class="a t bn" style="left:809px;top:304px;width:96px;text-align:right"><span>5</span></div>
<div class="a" style="left:611px;top:352px;width:294px;height:1px;background:#7c7c7c"></div>
<div class="a" style="left:629px;top:349px;width:1px;height:4px;background:#8a8a8a"></div>
<div class="a" style="left:648px;top:349px;width:1px;height:4px;background:#8a8a8a"></div>
<div class="a" style="left:666px;top:349px;width:1px;height:4px;background:#8a8a8a"></div>
<div class="a" style="left:684px;top:345px;width:1px;height:8px;background:#000;box-shadow:0.6px 0 0 rgba(0,0,0,0.45)"></div>
<div class="a" style="left:703px;top:349px;width:1px;height:4px;background:#8a8a8a"></div>
<div class="a" style="left:721px;top:349px;width:1px;height:4px;background:#8a8a8a"></div>
<div class="a" style="left:739px;top:349px;width:1px;height:4px;background:#8a8a8a"></div>
<div class="a" style="left:757px;top:345px;width:1px;height:8px;background:#000;box-shadow:0.6px 0 0 rgba(0,0,0,0.45)"></div>
<div class="a" style="left:776px;top:349px;width:1px;height:4px;background:#8a8a8a"></div>
<div class="a" style="left:794px;top:349px;width:1px;height:4px;background:#8a8a8a"></div>
<div class="a" style="left:812px;top:349px;width:1px;height:4px;background:#8a8a8a"></div>
<div class="a" style="left:831px;top:345px;width:1px;height:8px;background:#000;box-shadow:0.6px 0 0 rgba(0,0,0,0.45)"></div>
<div class="a" style="left:849px;top:349px;width:1px;height:4px;background:#8a8a8a"></div>
<div class="a" style="left:867px;top:349px;width:1px;height:4px;background:#8a8a8a"></div>
<div class="a" style="left:886px;top:349px;width:1px;height:4px;background:#8a8a8a"></div>
<div class="a" style="left:904px;top:345px;width:1px;height:8px;background:#000;box-shadow:0.6px 0 0 rgba(0,0,0,0.45)"></div>
<div class="a mk" style="left:607.5px;top:347px"></div>
<div class="a" style="left:611px;top:345px;width:1px;height:8px;background:#000"></div>
<div class="a" style="left:611px;top:363px;width:293px;height:4px;background:#cd9569"></div>
<div class="a t slb" style="left:613px;top:357px;width:19px;background:#cd9569">A-1</div>
<div class="a t ts" style="left:613px;top:320px">4<br>4</div>
<div class="a t ch" style="left:625.30px;top:319.25px;transform:scaleX(0.702)">G</div>
<svg class="a" style="left:639.00px;top:322px" width="7" height="18" viewBox="0 0 7 18"><path d="M2 1.2v16.8 M5.1 0v16.8" stroke="#0c0c0c" stroke-width="1.7"/><path d="M0 6.2l7-1.5v2.7l-7 1.5z M0 11.6l7-1.5v2.7l-7 1.5z" fill="#0c0c0c"/></svg>
<div class="a t sup" style="left:649px;top:317.3px;transform:scale(0.793,1.17)">sus9</div>
<div class="a cell" style="left:913px;top:308px;width:303px;height:69px"></div>
<div class="a t bn" style="left:1116px;top:304px;width:96px;text-align:right"><span>6</span></div>
<div class="a" style="left:918px;top:352px;width:294px;height:1px;background:#7c7c7c"></div>
<div class="a" style="left:936px;top:349px;width:1px;height:4px;background:#8a8a8a"></div>
<div class="a" style="left:955px;top:349px;width:1px;height:4px;background:#8a8a8a"></div>
<div class="a" style="left:973px;top:349px;width:1px;height:4px;background:#8a8a8a"></div>
<div class="a" style="left:991px;top:345px;width:1px;height:8px;background:#000;box-shadow:0.6px 0 0 rgba(0,0,0,0.45)"></div>
<div class="a" style="left:1010px;top:349px;width:1px;height:4px;background:#8a8a8a"></div>
<div class="a" style="left:1028px;top:349px;width:1px;height:4px;background:#8a8a8a"></div>
<div class="a" style="left:1046px;top:349px;width:1px;height:4px;background:#8a8a8a"></div>
<div class="a" style="left:1064px;top:345px;width:1px;height:8px;background:#000;box-shadow:0.6px 0 0 rgba(0,0,0,0.45)"></div>
<div class="a" style="left:1083px;top:349px;width:1px;height:4px;background:#8a8a8a"></div>
<div class="a" style="left:1101px;top:349px;width:1px;height:4px;background:#8a8a8a"></div>
<div class="a" style="left:1119px;top:349px;width:1px;height:4px;background:#8a8a8a"></div>
<div class="a" style="left:1138px;top:345px;width:1px;height:8px;background:#000;box-shadow:0.6px 0 0 rgba(0,0,0,0.45)"></div>
<div class="a" style="left:1156px;top:349px;width:1px;height:4px;background:#8a8a8a"></div>
<div class="a" style="left:1174px;top:349px;width:1px;height:4px;background:#8a8a8a"></div>
<div class="a" style="left:1193px;top:349px;width:1px;height:4px;background:#8a8a8a"></div>
<div class="a" style="left:1211px;top:345px;width:1px;height:8px;background:#000;box-shadow:0.6px 0 0 rgba(0,0,0,0.45)"></div>
<div class="a mk" style="left:914.5px;top:347px"></div>
<div class="a" style="left:918px;top:345px;width:1px;height:8px;background:#000"></div>
<div class="a" style="left:918px;top:363px;width:293px;height:4px;background:#cd9569"></div>
<div class="a t ch" style="left:918.28px;top:319.25px;transform:scaleX(0.717)">C</div>
<svg class="a" style="left:931.90px;top:322px" width="7" height="18" viewBox="0 0 7 18"><path d="M2 1.2v16.8 M5.1 0v16.8" stroke="#0c0c0c" stroke-width="1.7"/><path d="M0 6.2l7-1.5v2.7l-7 1.5z M0 11.6l7-1.5v2.7l-7 1.5z" fill="#0c0c0c"/></svg>
<svg class="a" style="left:941.00px;top:322px" width="8" height="18" viewBox="0 0 8 18"><polygon points="0,18 2.6,18 7.7,0 5.1,0" fill="#0c0c0c"/></svg>
<div class="a t ch" style="left:950.10px;top:319.25px;transform:scaleX(0.702)">G</div>
<svg class="a" style="left:963.80px;top:322px" width="7" height="18" viewBox="0 0 7 18"><path d="M2 1.2v16.8 M5.1 0v16.8" stroke="#0c0c0c" stroke-width="1.7"/><path d="M0 6.2l7-1.5v2.7l-7 1.5z M0 11.6l7-1.5v2.7l-7 1.5z" fill="#0c0c0c"/></svg>
<div class="a cell" style="left:1220px;top:308px;width:303px;height:69px"></div>
<div class="a t bn" style="left:1423px;top:304px;width:96px;text-align:right"><span>7</span></div>
<div class="a" style="left:1225px;top:352px;width:294px;height:1px;background:#7c7c7c"></div>
<div class="a" style="left:1243px;top:349px;width:1px;height:4px;background:#8a8a8a"></div>
<div class="a" style="left:1262px;top:349px;width:1px;height:4px;background:#8a8a8a"></div>
<div class="a" style="left:1280px;top:349px;width:1px;height:4px;background:#8a8a8a"></div>
<div class="a" style="left:1298px;top:345px;width:1px;height:8px;background:#000;box-shadow:0.6px 0 0 rgba(0,0,0,0.45)"></div>
<div class="a" style="left:1317px;top:349px;width:1px;height:4px;background:#8a8a8a"></div>
<div class="a" style="left:1335px;top:349px;width:1px;height:4px;background:#8a8a8a"></div>
<div class="a" style="left:1353px;top:349px;width:1px;height:4px;background:#8a8a8a"></div>
<div class="a" style="left:1371px;top:345px;width:1px;height:8px;background:#000;box-shadow:0.6px 0 0 rgba(0,0,0,0.45)"></div>
<div class="a" style="left:1390px;top:349px;width:1px;height:4px;background:#8a8a8a"></div>
<div class="a" style="left:1408px;top:349px;width:1px;height:4px;background:#8a8a8a"></div>
<div class="a" style="left:1426px;top:349px;width:1px;height:4px;background:#8a8a8a"></div>
<div class="a" style="left:1445px;top:345px;width:1px;height:8px;background:#000;box-shadow:0.6px 0 0 rgba(0,0,0,0.45)"></div>
<div class="a" style="left:1463px;top:349px;width:1px;height:4px;background:#8a8a8a"></div>
<div class="a" style="left:1481px;top:349px;width:1px;height:4px;background:#8a8a8a"></div>
<div class="a" style="left:1500px;top:349px;width:1px;height:4px;background:#8a8a8a"></div>
<div class="a" style="left:1518px;top:345px;width:1px;height:8px;background:#000;box-shadow:0.6px 0 0 rgba(0,0,0,0.45)"></div>
<div class="a mk" style="left:1221.5px;top:347px"></div>
<div class="a" style="left:1225px;top:345px;width:1px;height:8px;background:#000"></div>
<div class="a" style="left:1225px;top:363px;width:293px;height:4px;background:#cd9569"></div>
<div class="a t ch" style="left:1226.01px;top:319.25px;transform:scaleX(0.658)">D</div>
<svg class="a" style="left:1238.30px;top:322px" width="7" height="18" viewBox="0 0 7 18"><path d="M2 1.2v16.8 M5.1 0v16.8" stroke="#0c0c0c" stroke-width="1.7"/><path d="M0 6.2l7-1.5v2.7l-7 1.5z M0 11.6l7-1.5v2.7l-7 1.5z" fill="#0c0c0c"/></svg>
<div class="a t ch" style="left:1247.28px;top:319.25px;transform:scaleX(0.811)">m</div>
<div class="a t ch" style="left:1265.33px;top:319.25px;transform:scaleX(0.871)">7</div>
<div class="a cell" style="left:1527px;top:308px;width:303px;height:69px"></div>
<div class="a t bn" style="left:1730px;top:304px;width:96px;text-align:right"><span>8</span></div>
<div class="a" style="left:1532px;top:352px;width:294px;height:1px;background:#7c7c7c"></div>
<div class="a" style="left:1532px;top:345px;width:1px;height:8px;background:#000;box-shadow:0.6px 0 0 rgba(0,0,0,0.45)"></div>
<div class="a" style="left:1550px;top:349px;width:1px;height:4px;background:#8a8a8a"></div>
<div class="a" style="left:1569px;top:349px;width:1px;height:4px;background:#8a8a8a"></div>
<div class="a" style="left:1587px;top:349px;width:1px;height:4px;background:#8a8a8a"></div>
<div class="a" style="left:1605px;top:345px;width:1px;height:8px;background:#000;box-shadow:0.6px 0 0 rgba(0,0,0,0.45)"></div>
<div class="a" style="left:1624px;top:349px;width:1px;height:4px;background:#8a8a8a"></div>
<div class="a" style="left:1642px;top:349px;width:1px;height:4px;background:#8a8a8a"></div>
<div class="a" style="left:1660px;top:349px;width:1px;height:4px;background:#8a8a8a"></div>
<div class="a" style="left:1678px;top:345px;width:1px;height:8px;background:#000;box-shadow:0.6px 0 0 rgba(0,0,0,0.45)"></div>
<div class="a" style="left:1697px;top:349px;width:1px;height:4px;background:#8a8a8a"></div>
<div class="a" style="left:1715px;top:349px;width:1px;height:4px;background:#8a8a8a"></div>
<div class="a" style="left:1733px;top:349px;width:1px;height:4px;background:#8a8a8a"></div>
<div class="a" style="left:1752px;top:345px;width:1px;height:8px;background:#000;box-shadow:0.6px 0 0 rgba(0,0,0,0.45)"></div>
<div class="a" style="left:1770px;top:349px;width:1px;height:4px;background:#8a8a8a"></div>
<div class="a" style="left:1788px;top:349px;width:1px;height:4px;background:#8a8a8a"></div>
<div class="a" style="left:1807px;top:349px;width:1px;height:4px;background:#8a8a8a"></div>
<div class="a" style="left:1825px;top:345px;width:1px;height:8px;background:#000;box-shadow:0.6px 0 0 rgba(0,0,0,0.45)"></div>
<div class="a" style="left:1532px;top:363px;width:293px;height:4px;background:#cd9569"></div>
<div class="a cell" style="left:606px;top:385px;width:303px;height:69px"></div>
<div class="a t bn" style="left:809px;top:381px;width:96px;text-align:right"><span>9</span></div>
<div class="a" style="left:611px;top:429px;width:294px;height:1px;background:#7c7c7c"></div>
<div class="a" style="left:629px;top:426px;width:1px;height:4px;background:#8a8a8a"></div>
<div class="a" style="left:648px;top:426px;width:1px;height:4px;background:#8a8a8a"></div>
<div class="a" style="left:666px;top:426px;width:1px;height:4px;background:#8a8a8a"></div>
<div class="a" style="left:684px;top:422px;width:1px;height:8px;background:#000;box-shadow:0.6px 0 0 rgba(0,0,0,0.45)"></div>
<div class="a" style="left:703px;top:426px;width:1px;height:4px;background:#8a8a8a"></div>
<div class="a" style="left:721px;top:426px;width:1px;height:4px;background:#8a8a8a"></div>
<div class="a" style="left:739px;top:426px;width:1px;height:4px;background:#8a8a8a"></div>
<div class="a" style="left:757px;top:422px;width:1px;height:8px;background:#000;box-shadow:0.6px 0 0 rgba(0,0,0,0.45)"></div>
<div class="a" style="left:776px;top:426px;width:1px;height:4px;background:#8a8a8a"></div>
<div class="a" style="left:794px;top:426px;width:1px;height:4px;background:#8a8a8a"></div>
<div class="a" style="left:812px;top:426px;width:1px;height:4px;background:#8a8a8a"></div>
<div class="a" style="left:831px;top:422px;width:1px;height:8px;background:#000;box-shadow:0.6px 0 0 rgba(0,0,0,0.45)"></div>
<div class="a" style="left:849px;top:426px;width:1px;height:4px;background:#8a8a8a"></div>
<div class="a" style="left:867px;top:426px;width:1px;height:4px;background:#8a8a8a"></div>
<div class="a" style="left:886px;top:426px;width:1px;height:4px;background:#8a8a8a"></div>
<div class="a" style="left:904px;top:422px;width:1px;height:8px;background:#000;box-shadow:0.6px 0 0 rgba(0,0,0,0.45)"></div>
<div class="a mk" style="left:607.5px;top:424px"></div>
<div class="a" style="left:611px;top:422px;width:1px;height:8px;background:#000"></div>
<div class="a" style="left:611px;top:440px;width:293px;height:4px;background:#cd9569"></div>
<div class="a t ch" style="left:610.86px;top:396.25px;transform:scaleX(0.759)">F</div>
<svg class="a" style="left:622.90px;top:399px" width="7" height="18" viewBox="0 0 7 18"><path d="M2 1.2v16.8 M5.1 0v16.8" stroke="#0c0c0c" stroke-width="1.7"/><path d="M0 6.2l7-1.5v2.7l-7 1.5z M0 11.6l7-1.5v2.7l-7 1.5z" fill="#0c0c0c"/></svg>
<div class="a cell" style="left:913px;top:385px;width:303px;height:69px"></div>
<div class="a t bn" style="left:1116px;top:381px;width:96px;text-align:right"><span>10</span></div>
<div class="a" style="left:918px;top:429px;width:294px;height:1px;background:#7c7c7c"></div>
<div class="a" style="left:936px;top:426px;width:1px;height:4px;background:#8a8a8a"></div>
<div class="a" style="left:955px;top:426px;width:1px;height:4px;background:#8a8a8a"></div>
<div class="a" style="left:973px;top:426px;width:1px;height:4px;background:#8a8a8a"></div>
<div class="a" style="left:991px;top:422px;width:1px;height:8px;background:#000;box-shadow:0.6px 0 0 rgba(0,0,0,0.45)"></div>
<div class="a" style="left:1010px;top:426px;width:1px;height:4px;background:#8a8a8a"></div>
<div class="a" style="left:1028px;top:426px;width:1px;height:4px;background:#8a8a8a"></div>
<div class="a" style="left:1046px;top:426px;width:1px;height:4px;background:#8a8a8a"></div>
<div class="a" style="left:1064px;top:422px;width:1px;height:8px;background:#000;box-shadow:0.6px 0 0 rgba(0,0,0,0.45)"></div>
<div class="a" style="left:1083px;top:426px;width:1px;height:4px;background:#8a8a8a"></div>
<div class="a" style="left:1101px;top:426px;width:1px;height:4px;background:#8a8a8a"></div>
<div class="a" style="left:1119px;top:426px;width:1px;height:4px;background:#8a8a8a"></div>
<div class="a" style="left:1138px;top:422px;width:1px;height:8px;background:#000;box-shadow:0.6px 0 0 rgba(0,0,0,0.45)"></div>
<div class="a" style="left:1156px;top:426px;width:1px;height:4px;background:#8a8a8a"></div>
<div class="a" style="left:1174px;top:426px;width:1px;height:4px;background:#8a8a8a"></div>
<div class="a" style="left:1193px;top:426px;width:1px;height:4px;background:#8a8a8a"></div>
<div class="a" style="left:1211px;top:422px;width:1px;height:8px;background:#000;box-shadow:0.6px 0 0 rgba(0,0,0,0.45)"></div>
<div class="a mk" style="left:914.5px;top:424px"></div>
<div class="a" style="left:918px;top:422px;width:1px;height:8px;background:#000"></div>
<div class="a" style="left:918px;top:440px;width:293px;height:4px;background:#cd9569"></div>
<div class="a t ch" style="left:918.30px;top:396.25px;transform:scaleX(0.702)">G</div>
<svg class="a" style="left:932.00px;top:399px" width="7" height="18" viewBox="0 0 7 18"><path d="M2 1.2v16.8 M5.1 0v16.8" stroke="#0c0c0c" stroke-width="1.7"/><path d="M0 6.2l7-1.5v2.7l-7 1.5z M0 11.6l7-1.5v2.7l-7 1.5z" fill="#0c0c0c"/></svg>
<div class="a cell" style="left:1220px;top:385px;width:303px;height:69px"></div>
<div class="a t bn" style="left:1423px;top:381px;width:96px;text-align:right"><span>11</span></div>
<div class="a" style="left:1225px;top:429px;width:294px;height:1px;background:#7c7c7c"></div>
<div class="a" style="left:1243px;top:426px;width:1px;height:4px;background:#8a8a8a"></div>
<div class="a" style="left:1262px;top:426px;width:1px;height:4px;background:#8a8a8a"></div>
<div class="a" style="left:1280px;top:426px;width:1px;height:4px;background:#8a8a8a"></div>
<div class="a" style="left:1298px;top:422px;width:1px;height:8px;background:#000;box-shadow:0.6px 0 0 rgba(0,0,0,0.45)"></div>
<div class="a" style="left:1317px;top:426px;width:1px;height:4px;background:#8a8a8a"></div>
<div class="a" style="left:1335px;top:426px;width:1px;height:4px;background:#8a8a8a"></div>
<div class="a" style="left:1353px;top:426px;width:1px;height:4px;background:#8a8a8a"></div>
<div class="a" style="left:1371px;top:422px;width:1px;height:8px;background:#000;box-shadow:0.6px 0 0 rgba(0,0,0,0.45)"></div>
<div class="a" style="left:1390px;top:426px;width:1px;height:4px;background:#8a8a8a"></div>
<div class="a" style="left:1408px;top:426px;width:1px;height:4px;background:#8a8a8a"></div>
<div class="a" style="left:1426px;top:426px;width:1px;height:4px;background:#8a8a8a"></div>
<div class="a" style="left:1445px;top:422px;width:1px;height:8px;background:#000;box-shadow:0.6px 0 0 rgba(0,0,0,0.45)"></div>
<div class="a" style="left:1463px;top:426px;width:1px;height:4px;background:#8a8a8a"></div>
<div class="a" style="left:1481px;top:426px;width:1px;height:4px;background:#8a8a8a"></div>
<div class="a" style="left:1500px;top:426px;width:1px;height:4px;background:#8a8a8a"></div>
<div class="a" style="left:1518px;top:422px;width:1px;height:8px;background:#000;box-shadow:0.6px 0 0 rgba(0,0,0,0.45)"></div>
<div class="a mk" style="left:1221.5px;top:424px"></div>
<div class="a" style="left:1225px;top:422px;width:1px;height:8px;background:#000"></div>
<div class="a" style="left:1225px;top:440px;width:293px;height:4px;background:#cd9569"></div>
<div class="a t ch" style="left:1225.86px;top:396.25px;transform:scaleX(0.759)">F</div>
<div class="a t ch" style="left:1237.58px;top:396.25px;transform:scaleX(0.811)">m</div>
<div class="a t ch" style="left:1255.63px;top:396.25px;transform:scaleX(0.871)">7</div>
<div class="a cell" style="left:1527px;top:385px;width:303px;height:69px"></div>
<div class="a t bn" style="left:1730px;top:381px;width:96px;text-align:right"><span>12</span></div>
<div class="a" style="left:1532px;top:429px;width:294px;height:1px;background:#7c7c7c"></div>
<div class="a" style="left:1550px;top:426px;width:1px;height:4px;background:#8a8a8a"></div>
<div class="a" style="left:1569px;top:426px;width:1px;height:4px;background:#8a8a8a"></div>
<div class="a" style="left:1587px;top:426px;width:1px;height:4px;background:#8a8a8a"></div>
<div class="a" style="left:1605px;top:422px;width:1px;height:8px;background:#000;box-shadow:0.6px 0 0 rgba(0,0,0,0.45)"></div>
<div class="a" style="left:1624px;top:426px;width:1px;height:4px;background:#8a8a8a"></div>
<div class="a" style="left:1642px;top:426px;width:1px;height:4px;background:#8a8a8a"></div>
<div class="a" style="left:1660px;top:426px;width:1px;height:4px;background:#8a8a8a"></div>
<div class="a" style="left:1678px;top:422px;width:1px;height:8px;background:#000;box-shadow:0.6px 0 0 rgba(0,0,0,0.45)"></div>
<div class="a" style="left:1697px;top:426px;width:1px;height:4px;background:#8a8a8a"></div>
<div class="a" style="left:1715px;top:426px;width:1px;height:4px;background:#8a8a8a"></div>
<div class="a" style="left:1733px;top:426px;width:1px;height:4px;background:#8a8a8a"></div>
<div class="a" style="left:1752px;top:422px;width:1px;height:8px;background:#000;box-shadow:0.6px 0 0 rgba(0,0,0,0.45)"></div>
<div class="a" style="left:1770px;top:426px;width:1px;height:4px;background:#8a8a8a"></div>
<div class="a" style="left:1788px;top:426px;width:1px;height:4px;background:#8a8a8a"></div>
<div class="a" style="left:1807px;top:426px;width:1px;height:4px;background:#8a8a8a"></div>
<div class="a" style="left:1825px;top:422px;width:1px;height:8px;background:#000;box-shadow:0.6px 0 0 rgba(0,0,0,0.45)"></div>
<div class="a mk" style="left:1528.5px;top:424px"></div>
<div class="a" style="left:1532px;top:422px;width:1px;height:8px;background:#000"></div>
<div class="a" style="left:1532px;top:440px;width:293px;height:4px;background:#cd9569"></div>
<div class="a t ch" style="left:1531.86px;top:396.25px;transform:scaleX(0.759)">F</div>
<svg class="a" style="left:1543.90px;top:399px" width="7" height="18" viewBox="0 0 7 18"><path d="M2 1.2v16.8 M5.1 0v16.8" stroke="#0c0c0c" stroke-width="1.7"/><path d="M0 6.2l7-1.5v2.7l-7 1.5z M0 11.6l7-1.5v2.7l-7 1.5z" fill="#0c0c0c"/></svg>
<div class="a cell" style="left:606px;top:462px;width:303px;height:69px"></div>
<div class="a t bn" style="left:809px;top:458px;width:96px;text-align:right"><span>13</span></div>
<div class="a" style="left:611px;top:506px;width:294px;height:1px;background:#7c7c7c"></div>
<div class="a" style="left:629px;top:503px;width:1px;height:4px;background:#8a8a8a"></div>
<div class="a" style="left:648px;top:503px;width:1px;height:4px;background:#8a8a8a"></div>
<div class="a" style="left:666px;top:503px;width:1px;height:4px;background:#8a8a8a"></div>
<div class="a" style="left:684px;top:499px;width:1px;height:8px;background:#000;box-shadow:0.6px 0 0 rgba(0,0,0,0.45)"></div>
<div class="a" style="left:703px;top:503px;width:1px;height:4px;background:#8a8a8a"></div>
<div class="a" style="left:721px;top:503px;width:1px;height:4px;background:#8a8a8a"></div>
<div class="a" style="left:739px;top:503px;width:1px;height:4px;background:#8a8a8a"></div>
<div class="a" style="left:757px;top:499px;width:1px;height:8px;background:#000;box-shadow:0.6px 0 0 rgba(0,0,0,0.45)"></div>
<div class="a" style="left:776px;top:503px;width:1px;height:4px;background:#8a8a8a"></div>
<div class="a" style="left:794px;top:503px;width:1px;height:4px;background:#8a8a8a"></div>
<div class="a" style="left:812px;top:503px;width:1px;height:4px;background:#8a8a8a"></div>
<div class="a" style="left:831px;top:499px;width:1px;height:8px;background:#000;box-shadow:0.6px 0 0 rgba(0,0,0,0.45)"></div>
<div class="a" style="left:849px;top:503px;width:1px;height:4px;background:#8a8a8a"></div>
<div class="a" style="left:867px;top:503px;width:1px;height:4px;background:#8a8a8a"></div>
<div class="a" style="left:886px;top:503px;width:1px;height:4px;background:#8a8a8a"></div>
<div class="a" style="left:904px;top:499px;width:1px;height:8px;background:#000;box-shadow:0.6px 0 0 rgba(0,0,0,0.45)"></div>
<div class="a mk" style="left:607.5px;top:501px"></div>
<div class="a" style="left:611px;top:499px;width:1px;height:8px;background:#000"></div>
<div class="a mk" style="left:663.5px;top:501px"></div>
<div class="a mk" style="left:736.5px;top:501px"></div>
<div class="a" style="left:611px;top:517px;width:293px;height:4px;background:#cd9569"></div>
<div class="a t ch" style="left:612.01px;top:473.25px;transform:scaleX(0.658)">D</div>
<svg class="a" style="left:624.30px;top:476px" width="7" height="18" viewBox="0 0 7 18"><path d="M2 1.2v16.8 M5.1 0v16.8" stroke="#0c0c0c" stroke-width="1.7"/><path d="M0 6.2l7-1.5v2.7l-7 1.5z M0 11.6l7-1.5v2.7l-7 1.5z" fill="#0c0c0c"/></svg>
<div class="a t ch" style="left:633.28px;top:473.25px;transform:scaleX(0.811)">m</div>
<div class="a t ch" style="left:651.33px;top:473.25px;transform:scaleX(0.871)">7</div>
<div class="a t ch" style="left:667.28px;top:473.25px;transform:scaleX(0.717)">C</div>
<svg class="a" style="left:680.90px;top:476px" width="7" height="18" viewBox="0 0 7 18"><path d="M2 1.2v16.8 M5.1 0v16.8" stroke="#0c0c0c" stroke-width="1.7"/><path d="M0 6.2l7-1.5v2.7l-7 1.5z M0 11.6l7-1.5v2.7l-7 1.5z" fill="#0c0c0c"/></svg>
<svg class="a" style="left:690.00px;top:476px" width="8" height="18" viewBox="0 0 8 18"><polygon points="0,18 2.6,18 7.7,0 5.1,0" fill="#0c0c0c"/></svg>
<div class="a t ch" style="left:698.66px;top:473.25px;transform:scaleX(0.759)">F</div>
<div class="a t ch" style="left:728.86px;top:473.25px;transform:scaleX(0.759)">F</div>
<svg class="a" style="left:740.90px;top:476px" width="7" height="18" viewBox="0 0 7 18"><path d="M2 1.2v16.8 M5.1 0v16.8" stroke="#0c0c0c" stroke-width="1.7"/><path d="M0 6.2l7-1.5v2.7l-7 1.5z M0 11.6l7-1.5v2.7l-7 1.5z" fill="#0c0c0c"/></svg>
<div class="a cell" style="left:913px;top:462px;width:303px;height:69px"></div>
<div class="a t bn" style="left:1116px;top:458px;width:96px;text-align:right"><span>14</span></div>
<div class="a" style="left:918px;top:506px;width:294px;height:1px;background:#7c7c7c"></div>
<div class="a" style="left:936px;top:503px;width:1px;height:4px;background:#8a8a8a"></div>
<div class="a" style="left:955px;top:503px;width:1px;height:4px;background:#8a8a8a"></div>
<div class="a" style="left:973px;top:503px;width:1px;height:4px;background:#8a8a8a"></div>
<div class="a" style="left:991px;top:499px;width:1px;height:8px;background:#000;box-shadow:0.6px 0 0 rgba(0,0,0,0.45)"></div>
<div class="a" style="left:1010px;top:503px;width:1px;height:4px;background:#8a8a8a"></div>
<div class="a" style="left:1028px;top:503px;width:1px;height:4px;background:#8a8a8a"></div>
<div class="a" style="left:1046px;top:503px;width:1px;height:4px;background:#8a8a8a"></div>
<div class="a" style="left:1064px;top:499px;width:1px;height:8px;background:#000;box-shadow:0.6px 0 0 rgba(0,0,0,0.45)"></div>
<div class="a" style="left:1083px;top:503px;width:1px;height:4px;background:#8a8a8a"></div>
<div class="a" style="left:1101px;top:503px;width:1px;height:4px;background:#8a8a8a"></div>
<div class="a" style="left:1119px;top:503px;width:1px;height:4px;background:#8a8a8a"></div>
<div class="a" style="left:1138px;top:499px;width:1px;height:8px;background:#000;box-shadow:0.6px 0 0 rgba(0,0,0,0.45)"></div>
<div class="a" style="left:1156px;top:503px;width:1px;height:4px;background:#8a8a8a"></div>
<div class="a" style="left:1174px;top:503px;width:1px;height:4px;background:#8a8a8a"></div>
<div class="a" style="left:1193px;top:503px;width:1px;height:4px;background:#8a8a8a"></div>
<div class="a" style="left:1211px;top:499px;width:1px;height:8px;background:#000;box-shadow:0.6px 0 0 rgba(0,0,0,0.45)"></div>
<div class="a mk" style="left:914.5px;top:501px"></div>
<div class="a" style="left:918px;top:499px;width:1px;height:8px;background:#000"></div>
<div class="a mk" style="left:970.5px;top:501px"></div>
<div class="a mk" style="left:1043.5px;top:501px"></div>
<div class="a" style="left:918px;top:517px;width:293px;height:4px;background:#cd9569"></div>
<div class="a t ch" style="left:918.28px;top:473.25px;transform:scaleX(0.717)">C</div>
<svg class="a" style="left:931.90px;top:476px" width="7" height="18" viewBox="0 0 7 18"><path d="M2 1.2v16.8 M5.1 0v16.8" stroke="#0c0c0c" stroke-width="1.7"/><path d="M0 6.2l7-1.5v2.7l-7 1.5z M0 11.6l7-1.5v2.7l-7 1.5z" fill="#0c0c0c"/></svg>
<div class="a t ch" style="left:965.00px;top:473.25px;transform:scaleX(0.664)">B</div>
<div class="a t ch" style="left:1018.30px;top:473.25px;transform:scaleX(0.702)">G</div>
<svg class="a" style="left:1032.00px;top:476px" width="7" height="18" viewBox="0 0 7 18"><path d="M2 1.2v16.8 M5.1 0v16.8" stroke="#0c0c0c" stroke-width="1.7"/><path d="M0 6.2l7-1.5v2.7l-7 1.5z M0 11.6l7-1.5v2.7l-7 1.5z" fill="#0c0c0c"/></svg>
<svg class="a" style="left:1041.10px;top:476px" width="8" height="18" viewBox="0 0 8 18"><polygon points="0,18 2.6,18 7.7,0 5.1,0" fill="#0c0c0c"/></svg>
<div class="a t ch" style="left:1049.90px;top:473.25px;transform:scaleX(0.664)">B</div>
<svg class="a" style="left:1062.20px;top:475px" width="8" height="19" viewBox="0 0 8 19"><path d="M1.1 0v18.5" stroke="#0c0c0c" stroke-width="2.2"/><path d="M1.5 10.5Q4.5 7.5 6.3 9Q7.8 10.8 5.2 14L1.2 18" stroke="#0c0c0c" stroke-width="2" fill="none"/></svg>
<div class="a cell" style="left:1220px;top:462px;width:303px;height:69px"></div>
<div class="a t bn" style="left:1423px;top:458px;width:96px;text-align:right"><span>15</span></div>
<div class="a" style="left:1225px;top:506px;width:294px;height:1px;background:#7c7c7c"></div>
<div class="a" style="left:1243px;top:503px;width:1px;height:4px;background:#8a8a8a"></div>
<div class="a" style="left:1262px;top:503px;width:1px;height:4px;background:#8a8a8a"></div>
<div class="a" style="left:1280px;top:503px;width:1px;height:4px;background:#8a8a8a"></div>
<div class="a" style="left:1298px;top:499px;width:1px;height:8px;background:#000;box-shadow:0.6px 0 0 rgba(0,0,0,0.45)"></div>
<div class="a" style="left:1317px;top:503px;width:1px;height:4px;background:#8a8a8a"></div>
<div class="a" style="left:1335px;top:503px;width:1px;height:4px;background:#8a8a8a"></div>
<div class="a" style="left:1353px;top:503px;width:1px;height:4px;background:#8a8a8a"></div>
<div class="a" style="left:1371px;top:499px;width:1px;height:8px;background:#000;box-shadow:0.6px 0 0 rgba(0,0,0,0.45)"></div>
<div class="a" style="left:1390px;top:503px;width:1px;height:4px;background:#8a8a8a"></div>
<div class="a" style="left:1408px;top:503px;width:1px;height:4px;background:#8a8a8a"></div>
<div class="a" style="left:1426px;top:503px;width:1px;height:4px;background:#8a8a8a"></div>
<div class="a" style="left:1445px;top:499px;width:1px;height:8px;background:#000;box-shadow:0.6px 0 0 rgba(0,0,0,0.45)"></div>
<div class="a" style="left:1463px;top:503px;width:1px;height:4px;background:#8a8a8a"></div>
<div class="a" style="left:1481px;top:503px;width:1px;height:4px;background:#8a8a8a"></div>
<div class="a" style="left:1500px;top:503px;width:1px;height:4px;background:#8a8a8a"></div>
<div class="a" style="left:1518px;top:499px;width:1px;height:8px;background:#000;box-shadow:0.6px 0 0 rgba(0,0,0,0.45)"></div>
<div class="a mk" style="left:1221.5px;top:501px"></div>
<div class="a" style="left:1225px;top:499px;width:1px;height:8px;background:#000"></div>
<div class="a" style="left:1225px;top:517px;width:293px;height:4px;background:#cd9569"></div>
<div class="a t ch" style="left:1224.86px;top:473.25px;transform:scaleX(0.759)">F</div>
<svg class="a" style="left:1236.90px;top:476px" width="7" height="18" viewBox="0 0 7 18"><path d="M2 1.2v16.8 M5.1 0v16.8" stroke="#0c0c0c" stroke-width="1.7"/><path d="M0 6.2l7-1.5v2.7l-7 1.5z M0 11.6l7-1.5v2.7l-7 1.5z" fill="#0c0c0c"/></svg>
<div class="a cell" style="left:1527px;top:462px;width:303px;height:69px"></div>
<div class="a t bn" style="left:1730px;top:458px;width:96px;text-align:right"><span>16</span></div>
<div class="a" style="left:1532px;top:506px;width:294px;height:1px;background:#7c7c7c"></div>
<div class="a" style="left:1550px;top:503px;width:1px;height:4px;background:#8a8a8a"></div>
<div class="a" style="left:1569px;top:503px;width:1px;height:4px;background:#8a8a8a"></div>
<div class="a" style="left:1587px;top:503px;width:1px;height:4px;background:#8a8a8a"></div>
<div class="a" style="left:1605px;top:499px;width:1px;height:8px;background:#000;box-shadow:0.6px 0 0 rgba(0,0,0,0.45)"></div>
<div class="a" style="left:1624px;top:503px;width:1px;height:4px;background:#8a8a8a"></div>
<div class="a" style="left:1642px;top:503px;width:1px;height:4px;background:#8a8a8a"></div>
<div class="a" style="left:1660px;top:503px;width:1px;height:4px;background:#8a8a8a"></div>
<div class="a" style="left:1678px;top:499px;width:1px;height:8px;background:#000;box-shadow:0.6px 0 0 rgba(0,0,0,0.45)"></div>
<div class="a" style="left:1697px;top:503px;width:1px;height:4px;background:#8a8a8a"></div>
<div class="a" style="left:1715px;top:503px;width:1px;height:4px;background:#8a8a8a"></div>
<div class="a" style="left:1733px;top:503px;width:1px;height:4px;background:#8a8a8a"></div>
<div class="a" style="left:1752px;top:499px;width:1px;height:8px;background:#000;box-shadow:0.6px 0 0 rgba(0,0,0,0.45)"></div>
<div class="a" style="left:1770px;top:503px;width:1px;height:4px;background:#8a8a8a"></div>
<div class="a" style="left:1788px;top:503px;width:1px;height:4px;background:#8a8a8a"></div>
<div class="a" style="left:1807px;top:503px;width:1px;height:4px;background:#8a8a8a"></div>
<div class="a" style="left:1825px;top:499px;width:1px;height:8px;background:#000;box-shadow:0.6px 0 0 rgba(0,0,0,0.45)"></div>
<div class="a mk" style="left:1528.5px;top:501px"></div>
<div class="a" style="left:1532px;top:499px;width:1px;height:8px;background:#000"></div>
<div class="a" style="left:1532px;top:517px;width:293px;height:4px;background:#cd9569"></div>
<div class="a t ch" style="left:1532.30px;top:473.25px;transform:scaleX(0.702)">G</div>
<svg class="a" style="left:1546.00px;top:476px" width="7" height="18" viewBox="0 0 7 18"><path d="M2 1.2v16.8 M5.1 0v16.8" stroke="#0c0c0c" stroke-width="1.7"/><path d="M0 6.2l7-1.5v2.7l-7 1.5z M0 11.6l7-1.5v2.7l-7 1.5z" fill="#0c0c0c"/></svg>
<div class="a cell" style="left:606px;top:539px;width:303px;height:69px"></div>
<div class="a t bn" style="left:809px;top:535px;width:96px;text-align:right"><span>17</span></div>
<div class="a" style="left:611px;top:583px;width:294px;height:1px;background:#7c7c7c"></div>
<div class="a" style="left:629px;top:580px;width:1px;height:4px;background:#8a8a8a"></div>
<div class="a" style="left:648px;top:580px;width:1px;height:4px;background:#8a8a8a"></div>
<div class="a" style="left:666px;top:580px;width:1px;height:4px;background:#8a8a8a"></div>
<div class="a" style="left:684px;top:576px;width:1px;height:8px;background:#000;box-shadow:0.6px 0 0 rgba(0,0,0,0.45)"></div>
<div class="a" style="left:703px;top:580px;width:1px;height:4px;background:#8a8a8a"></div>
<div class="a" style="left:721px;top:580px;width:1px;height:4px;background:#8a8a8a"></div>
<div class="a" style="left:739px;top:580px;width:1px;height:4px;background:#8a8a8a"></div>
<div class="a" style="left:757px;top:576px;width:1px;height:8px;background:#000;box-shadow:0.6px 0 0 rgba(0,0,0,0.45)"></div>
<div class="a" style="left:776px;top:580px;width:1px;height:4px;background:#8a8a8a"></div>
<div class="a" style="left:794px;top:580px;width:1px;height:4px;background:#8a8a8a"></div>
<div class="a" style="left:812px;top:580px;width:1px;height:4px;background:#8a8a8a"></div>
<div class="a" style="left:831px;top:576px;width:1px;height:8px;background:#000;box-shadow:0.6px 0 0 rgba(0,0,0,0.45)"></div>
<div class="a" style="left:849px;top:580px;width:1px;height:4px;background:#8a8a8a"></div>
<div class="a" style="left:867px;top:580px;width:1px;height:4px;background:#8a8a8a"></div>
<div class="a" style="left:886px;top:580px;width:1px;height:4px;background:#8a8a8a"></div>
<div class="a" style="left:904px;top:576px;width:1px;height:8px;background:#000;box-shadow:0.6px 0 0 rgba(0,0,0,0.45)"></div>
<div class="a mk" style="left:607.5px;top:578px"></div>
<div class="a" style="left:611px;top:576px;width:1px;height:8px;background:#000"></div>
<div class="a" style="left:611px;top:594px;width:293px;height:4px;background:#6e7b6a"></div>
<div class="a t slb" style="left:613px;top:588px;width:19px;background:#6e7b6a">A-2</div>
<div class="a t ts" style="left:613px;top:551px">4<br>4</div>
<div class="a t ch" style="left:625.30px;top:550.25px;transform:scaleX(0.702)">G</div>
<svg class="a" style="left:639.00px;top:553px" width="7" height="18" viewBox="0 0 7 18"><path d="M2 1.2v16.8 M5.1 0v16.8" stroke="#0c0c0c" stroke-width="1.7"/><path d="M0 6.2l7-1.5v2.7l-7 1.5z M0 11.6l7-1.5v2.7l-7 1.5z" fill="#0c0c0c"/></svg>
<div class="a t sup" style="left:649px;top:548.3px;transform:scale(0.793,1.17)">sus9</div>
<div class="a cell" style="left:913px;top:539px;width:303px;height:69px"></div>
<div class="a t bn" style="left:1116px;top:535px;width:96px;text-align:right"><span>18</span></div>
<div class="a" style="left:918px;top:583px;width:294px;height:1px;background:#7c7c7c"></div>
<div class="a" style="left:936px;top:580px;width:1px;height:4px;background:#8a8a8a"></div>
<div class="a" style="left:955px;top:580px;width:1px;height:4px;background:#8a8a8a"></div>
<div class="a" style="left:973px;top:580px;width:1px;height:4px;background:#8a8a8a"></div>
<div class="a" style="left:991px;top:576px;width:1px;height:8px;background:#000;box-shadow:0.6px 0 0 rgba(0,0,0,0.45)"></div>
<div class="a" style="left:1010px;top:580px;width:1px;height:4px;background:#8a8a8a"></div>
<div class="a" style="left:1028px;top:580px;width:1px;height:4px;background:#8a8a8a"></div>
<div class="a" style="left:1046px;top:580px;width:1px;height:4px;background:#8a8a8a"></div>
<div class="a" style="left:1064px;top:576px;width:1px;height:8px;background:#000;box-shadow:0.6px 0 0 rgba(0,0,0,0.45)"></div>
<div class="a" style="left:1083px;top:580px;width:1px;height:4px;background:#8a8a8a"></div>
<div class="a" style="left:1101px;top:580px;width:1px;height:4px;background:#8a8a8a"></div>
<div class="a" style="left:1119px;top:580px;width:1px;height:4px;background:#8a8a8a"></div>
<div class="a" style="left:1138px;top:576px;width:1px;height:8px;background:#000;box-shadow:0.6px 0 0 rgba(0,0,0,0.45)"></div>
<div class="a" style="left:1156px;top:580px;width:1px;height:4px;background:#8a8a8a"></div>
<div class="a" style="left:1174px;top:580px;width:1px;height:4px;background:#8a8a8a"></div>
<div class="a" style="left:1193px;top:580px;width:1px;height:4px;background:#8a8a8a"></div>
<div class="a" style="left:1211px;top:576px;width:1px;height:8px;background:#000;box-shadow:0.6px 0 0 rgba(0,0,0,0.45)"></div>
<div class="a mk" style="left:914.5px;top:578px"></div>
<div class="a" style="left:918px;top:576px;width:1px;height:8px;background:#000"></div>
<div class="a" style="left:918px;top:594px;width:293px;height:4px;background:#6e7b6a"></div>
<div class="a t ch" style="left:918.28px;top:550.25px;transform:scaleX(0.717)">C</div>
<svg class="a" style="left:931.90px;top:553px" width="7" height="18" viewBox="0 0 7 18"><path d="M2 1.2v16.8 M5.1 0v16.8" stroke="#0c0c0c" stroke-width="1.7"/><path d="M0 6.2l7-1.5v2.7l-7 1.5z M0 11.6l7-1.5v2.7l-7 1.5z" fill="#0c0c0c"/></svg>
<svg class="a" style="left:941.00px;top:553px" width="8" height="18" viewBox="0 0 8 18"><polygon points="0,18 2.6,18 7.7,0 5.1,0" fill="#0c0c0c"/></svg>
<div class="a t ch" style="left:950.10px;top:550.25px;transform:scaleX(0.702)">G</div>
<svg class="a" style="left:963.80px;top:553px" width="7" height="18" viewBox="0 0 7 18"><path d="M2 1.2v16.8 M5.1 0v16.8" stroke="#0c0c0c" stroke-width="1.7"/><path d="M0 6.2l7-1.5v2.7l-7 1.5z M0 11.6l7-1.5v2.7l-7 1.5z" fill="#0c0c0c"/></svg>
<div class="a cell" style="left:1220px;top:539px;width:303px;height:69px"></div>
<div class="a t bn" style="left:1423px;top:535px;width:96px;text-align:right"><span>19</span></div>
<div class="a" style="left:1225px;top:583px;width:294px;height:1px;background:#7c7c7c"></div>
<div class="a" style="left:1243px;top:580px;width:1px;height:4px;background:#8a8a8a"></div>
<div class="a" style="left:1262px;top:580px;width:1px;height:4px;background:#8a8a8a"></div>
<div class="a" style="left:1280px;top:580px;width:1px;height:4px;background:#8a8a8a"></div>
<div class="a" style="left:1298px;top:576px;width:1px;height:8px;background:#000;box-shadow:0.6px 0 0 rgba(0,0,0,0.45)"></div>
<div class="a" style="left:1317px;top:580px;width:1px;height:4px;background:#8a8a8a"></div>
<div class="a" style="left:1335px;top:580px;width:1px;height:4px;background:#8a8a8a"></div>
<div class="a" style="left:1353px;top:580px;width:1px;height:4px;background:#8a8a8a"></div>
<div class="a" style="left:1371px;top:576px;width:1px;height:8px;background:#000;box-shadow:0.6px 0 0 rgba(0,0,0,0.45)"></div>
<div class="a" style="left:1390px;top:580px;width:1px;height:4px;background:#8a8a8a"></div>
<div class="a" style="left:1408px;top:580px;width:1px;height:4px;background:#8a8a8a"></div>
<div class="a" style="left:1426px;top:580px;width:1px;height:4px;background:#8a8a8a"></div>
<div class="a" style="left:1445px;top:576px;width:1px;height:8px;background:#000;box-shadow:0.6px 0 0 rgba(0,0,0,0.45)"></div>
<div class="a" style="left:1463px;top:580px;width:1px;height:4px;background:#8a8a8a"></div>
<div class="a" style="left:1481px;top:580px;width:1px;height:4px;background:#8a8a8a"></div>
<div class="a" style="left:1500px;top:580px;width:1px;height:4px;background:#8a8a8a"></div>
<div class="a" style="left:1518px;top:576px;width:1px;height:8px;background:#000;box-shadow:0.6px 0 0 rgba(0,0,0,0.45)"></div>
<div class="a mk" style="left:1221.5px;top:578px"></div>
<div class="a" style="left:1225px;top:576px;width:1px;height:8px;background:#000"></div>
<div class="a" style="left:1225px;top:594px;width:293px;height:4px;background:#6e7b6a"></div>
<div class="a t ch" style="left:1226.00px;top:550.25px;transform:scaleX(0.664)">B</div>
<svg class="a" style="left:1238.30px;top:552px" width="8" height="19" viewBox="0 0 8 19"><path d="M1.1 0v18.5" stroke="#0c0c0c" stroke-width="2.2"/><path d="M1.5 10.5Q4.5 7.5 6.3 9Q7.8 10.8 5.2 14L1.2 18" stroke="#0c0c0c" stroke-width="2" fill="none"/></svg>
<div class="a t ch" style="left:1246.48px;top:550.25px;transform:scaleX(0.811)">m</div>
<div class="a t ch" style="left:1264.53px;top:550.25px;transform:scaleX(0.871)">7</div>
<div class="a t sup" style="left:1277px;top:548.3px;transform:scale(0.704,1.17)">11</div>
<div class="a cell" style="left:1527px;top:539px;width:303px;height:69px"></div>
<div class="a t bn" style="left:1730px;top:535px;width:96px;text-align:right"><span>20</span></div>
<div class="a" style="left:1532px;top:583px;width:294px;height:1px;background:#7c7c7c"></div>
<div class="a" style="left:1532px;top:576px;width:1px;height:8px;background:#000;box-shadow:0.6px 0 0 rgba(0,0,0,0.45)"></div>
<div class="a" style="left:1550px;top:580px;width:1px;height:4px;background:#8a8a8a"></div>
<div class="a" style="left:1569px;top:580px;width:1px;height:4px;background:#8a8a8a"></div>
<div class="a" style="left:1587px;top:580px;width:1px;height:4px;background:#8a8a8a"></div>
<div class="a" style="left:1605px;top:576px;width:1px;height:8px;background:#000;box-shadow:0.6px 0 0 rgba(0,0,0,0.45)"></div>
<div class="a" style="left:1624px;top:580px;width:1px;height:4px;background:#8a8a8a"></div>
<div class="a" style="left:1642px;top:580px;width:1px;height:4px;background:#8a8a8a"></div>
<div class="a" style="left:1660px;top:580px;width:1px;height:4px;background:#8a8a8a"></div>
<div class="a" style="left:1678px;top:576px;width:1px;height:8px;background:#000;box-shadow:0.6px 0 0 rgba(0,0,0,0.45)"></div>
<div class="a" style="left:1697px;top:580px;width:1px;height:4px;background:#8a8a8a"></div>
<div class="a" style="left:1715px;top:580px;width:1px;height:4px;background:#8a8a8a"></div>
<div class="a" style="left:1733px;top:580px;width:1px;height:4px;background:#8a8a8a"></div>
<div class="a" style="left:1752px;top:576px;width:1px;height:8px;background:#000;box-shadow:0.6px 0 0 rgba(0,0,0,0.45)"></div>
<div class="a" style="left:1770px;top:580px;width:1px;height:4px;background:#8a8a8a"></div>
<div class="a" style="left:1788px;top:580px;width:1px;height:4px;background:#8a8a8a"></div>
<div class="a" style="left:1807px;top:580px;width:1px;height:4px;background:#8a8a8a"></div>
<div class="a" style="left:1825px;top:576px;width:1px;height:8px;background:#000;box-shadow:0.6px 0 0 rgba(0,0,0,0.45)"></div>
<div class="a" style="left:1532px;top:594px;width:293px;height:4px;background:#6e7b6a"></div>
<div class="a cell" style="left:606px;top:616px;width:303px;height:69px"></div>
<div class="a t bn" style="left:809px;top:612px;width:96px;text-align:right"><span>21</span></div>
<div class="a" style="left:611px;top:660px;width:294px;height:1px;background:#7c7c7c"></div>
<div class="a" style="left:629px;top:657px;width:1px;height:4px;background:#8a8a8a"></div>
<div class="a" style="left:648px;top:657px;width:1px;height:4px;background:#8a8a8a"></div>
<div class="a" style="left:666px;top:657px;width:1px;height:4px;background:#8a8a8a"></div>
<div class="a" style="left:684px;top:653px;width:1px;height:8px;background:#000;box-shadow:0.6px 0 0 rgba(0,0,0,0.45)"></div>
<div class="a" style="left:703px;top:657px;width:1px;height:4px;background:#8a8a8a"></div>
<div class="a" style="left:721px;top:657px;width:1px;height:4px;background:#8a8a8a"></div>
<div class="a" style="left:739px;top:657px;width:1px;height:4px;background:#8a8a8a"></div>
<div class="a" style="left:757px;top:653px;width:1px;height:8px;background:#000;box-shadow:0.6px 0 0 rgba(0,0,0,0.45)"></div>
<div class="a" style="left:776px;top:657px;width:1px;height:4px;background:#8a8a8a"></div>
<div class="a" style="left:794px;top:657px;width:1px;height:4px;background:#8a8a8a"></div>
<div class="a" style="left:812px;top:657px;width:1px;height:4px;background:#8a8a8a"></div>
<div class="a" style="left:831px;top:653px;width:1px;height:8px;background:#000;box-shadow:0.6px 0 0 rgba(0,0,0,0.45)"></div>
<div class="a" style="left:849px;top:657px;width:1px;height:4px;background:#8a8a8a"></div>
<div class="a" style="left:867px;top:657px;width:1px;height:4px;background:#8a8a8a"></div>
<div class="a" style="left:886px;top:657px;width:1px;height:4px;background:#8a8a8a"></div>
<div class="a" style="left:904px;top:653px;width:1px;height:8px;background:#000;box-shadow:0.6px 0 0 rgba(0,0,0,0.45)"></div>
<div class="a mk" style="left:607.5px;top:655px"></div>
<div class="a" style="left:611px;top:653px;width:1px;height:8px;background:#000"></div>
<div class="a" style="left:611px;top:671px;width:293px;height:4px;background:#b39a88"></div>
<div class="a t slb" style="left:613px;top:665px;width:19px;background:#b39a88">A-3</div>
<div class="a t ts" style="left:613px;top:628px">4<br>4</div>
<div class="a t ch" style="left:625.30px;top:627.25px;transform:scaleX(0.702)">G</div>
<svg class="a" style="left:639.00px;top:630px" width="7" height="18" viewBox="0 0 7 18"><path d="M2 1.2v16.8 M5.1 0v16.8" stroke="#0c0c0c" stroke-width="1.7"/><path d="M0 6.2l7-1.5v2.7l-7 1.5z M0 11.6l7-1.5v2.7l-7 1.5z" fill="#0c0c0c"/></svg>
<div class="a t sup" style="left:649px;top:625.3px;transform:scale(0.793,1.17)">sus9</div>
<div class="a cell" style="left:913px;top:616px;width:303px;height:69px"></div>
<div class="a t bn" style="left:1116px;top:612px;width:96px;text-align:right"><span>22</span></div>
<div class="a" style="left:918px;top:660px;width:294px;height:1px;background:#7c7c7c"></div>
<div class="a" style="left:936px;top:657px;width:1px;height:4px;background:#8a8a8a"></div>
<div class="a" style="left:955px;top:657px;width:1px;height:4px;background:#8a8a8a"></div>
<div class="a" style="left:973px;top:657px;width:1px;height:4px;background:#8a8a8a"></div>
<div class="a" style="left:991px;top:653px;width:1px;height:8px;background:#000;box-shadow:0.6px 0 0 rgba(0,0,0,0.45)"></div>
<div class="a" style="left:1010px;top:657px;width:1px;height:4px;background:#8a8a8a"></div>
<div class="a" style="left:1028px;top:657px;width:1px;height:4px;background:#8a8a8a"></div>
<div class="a" style="left:1046px;top:657px;width:1px;height:4px;background:#8a8a8a"></div>
<div class="a" style="left:1064px;top:653px;width:1px;height:8px;background:#000;box-shadow:0.6px 0 0 rgba(0,0,0,0.45)"></div>
<div class="a" style="left:1083px;top:657px;width:1px;height:4px;background:#8a8a8a"></div>
<div class="a" style="left:1101px;top:657px;width:1px;height:4px;background:#8a8a8a"></div>
<div class="a" style="left:1119px;top:657px;width:1px;height:4px;background:#8a8a8a"></div>
<div class="a" style="left:1138px;top:653px;width:1px;height:8px;background:#000;box-shadow:0.6px 0 0 rgba(0,0,0,0.45)"></div>
<div class="a" style="left:1156px;top:657px;width:1px;height:4px;background:#8a8a8a"></div>
<div class="a" style="left:1174px;top:657px;width:1px;height:4px;background:#8a8a8a"></div>
<div class="a" style="left:1193px;top:657px;width:1px;height:4px;background:#8a8a8a"></div>
<div class="a" style="left:1211px;top:653px;width:1px;height:8px;background:#000;box-shadow:0.6px 0 0 rgba(0,0,0,0.45)"></div>
<div class="a mk" style="left:914.5px;top:655px"></div>
<div class="a" style="left:918px;top:653px;width:1px;height:8px;background:#000"></div>
<div class="a" style="left:918px;top:671px;width:293px;height:4px;background:#b39a88"></div>
<div class="a t ch" style="left:918.28px;top:627.25px;transform:scaleX(0.717)">C</div>
<svg class="a" style="left:931.90px;top:630px" width="7" height="18" viewBox="0 0 7 18"><path d="M2 1.2v16.8 M5.1 0v16.8" stroke="#0c0c0c" stroke-width="1.7"/><path d="M0 6.2l7-1.5v2.7l-7 1.5z M0 11.6l7-1.5v2.7l-7 1.5z" fill="#0c0c0c"/></svg>
<svg class="a" style="left:941.00px;top:630px" width="8" height="18" viewBox="0 0 8 18"><polygon points="0,18 2.6,18 7.7,0 5.1,0" fill="#0c0c0c"/></svg>
<div class="a t ch" style="left:950.10px;top:627.25px;transform:scaleX(0.702)">G</div>
<svg class="a" style="left:963.80px;top:630px" width="7" height="18" viewBox="0 0 7 18"><path d="M2 1.2v16.8 M5.1 0v16.8" stroke="#0c0c0c" stroke-width="1.7"/><path d="M0 6.2l7-1.5v2.7l-7 1.5z M0 11.6l7-1.5v2.7l-7 1.5z" fill="#0c0c0c"/></svg>
<div class="a cell" style="left:1220px;top:616px;width:303px;height:69px"></div>
<div class="a t bn" style="left:1423px;top:612px;width:96px;text-align:right"><span>23</span></div>
<div class="a" style="left:1225px;top:660px;width:294px;height:1px;background:#7c7c7c"></div>
<div class="a" style="left:1243px;top:657px;width:1px;height:4px;background:#8a8a8a"></div>
<div class="a" style="left:1262px;top:657px;width:1px;height:4px;background:#8a8a8a"></div>
<div class="a" style="left:1280px;top:657px;width:1px;height:4px;background:#8a8a8a"></div>
<div class="a" style="left:1298px;top:653px;width:1px;height:8px;background:#000;box-shadow:0.6px 0 0 rgba(0,0,0,0.45)"></div>
<div class="a" style="left:1317px;top:657px;width:1px;height:4px;background:#8a8a8a"></div>
<div class="a" style="left:1335px;top:657px;width:1px;height:4px;background:#8a8a8a"></div>
<div class="a" style="left:1353px;top:657px;width:1px;height:4px;background:#8a8a8a"></div>
<div class="a" style="left:1371px;top:653px;width:1px;height:8px;background:#000;box-shadow:0.6px 0 0 rgba(0,0,0,0.45)"></div>
<div class="a" style="left:1390px;top:657px;width:1px;height:4px;background:#8a8a8a"></div>
<div class="a" style="left:1408px;top:657px;width:1px;height:4px;background:#8a8a8a"></div>
<div class="a" style="left:1426px;top:657px;width:1px;height:4px;background:#8a8a8a"></div>
<div class="a" style="left:1445px;top:653px;width:1px;height:8px;background:#000;box-shadow:0.6px 0 0 rgba(0,0,0,0.45)"></div>
<div class="a" style="left:1463px;top:657px;width:1px;height:4px;background:#8a8a8a"></div>
<div class="a" style="left:1481px;top:657px;width:1px;height:4px;background:#8a8a8a"></div>
<div class="a" style="left:1500px;top:657px;width:1px;height:4px;background:#8a8a8a"></div>
<div class="a" style="left:1518px;top:653px;width:1px;height:8px;background:#000;box-shadow:0.6px 0 0 rgba(0,0,0,0.45)"></div>
<div class="a mk" style="left:1221.5px;top:655px"></div>
<div class="a" style="left:1225px;top:653px;width:1px;height:8px;background:#000"></div>
<div class="a" style="left:1225px;top:671px;width:293px;height:4px;background:#b39a88"></div>
<div class="a t ch" style="left:1226.00px;top:627.25px;transform:scaleX(0.664)">B</div>
<svg class="a" style="left:1238.30px;top:629px" width="8" height="19" viewBox="0 0 8 19"><path d="M1.1 0v18.5" stroke="#0c0c0c" stroke-width="2.2"/><path d="M1.5 10.5Q4.5 7.5 6.3 9Q7.8 10.8 5.2 14L1.2 18" stroke="#0c0c0c" stroke-width="2" fill="none"/></svg>
<div class="a t ch" style="left:1246.48px;top:627.25px;transform:scaleX(0.811)">m</div>
<div class="a t ch" style="left:1264.53px;top:627.25px;transform:scaleX(0.871)">7</div>
<div class="a t sup" style="left:1277px;top:625.3px;transform:scale(0.704,1.17)">11</div>
<div class="a cell" style="left:1527px;top:616px;width:303px;height:69px"></div>
<div class="a t bn" style="left:1730px;top:612px;width:96px;text-align:right"><span>24</span></div>
<div class="a" style="left:1532px;top:660px;width:294px;height:1px;background:#7c7c7c"></div>
<div class="a" style="left:1550px;top:657px;width:1px;height:4px;background:#8a8a8a"></div>
<div class="a" style="left:1569px;top:657px;width:1px;height:4px;background:#8a8a8a"></div>
<div class="a" style="left:1587px;top:657px;width:1px;height:4px;background:#8a8a8a"></div>
<div class="a" style="left:1605px;top:653px;width:1px;height:8px;background:#000;box-shadow:0.6px 0 0 rgba(0,0,0,0.45)"></div>
<div class="a" style="left:1624px;top:657px;width:1px;height:4px;background:#8a8a8a"></div>
<div class="a" style="left:1642px;top:657px;width:1px;height:4px;background:#8a8a8a"></div>
<div class="a" style="left:1660px;top:657px;width:1px;height:4px;background:#8a8a8a"></div>
<div class="a" style="left:1678px;top:653px;width:1px;height:8px;background:#000;box-shadow:0.6px 0 0 rgba(0,0,0,0.45)"></div>
<div class="a" style="left:1697px;top:657px;width:1px;height:4px;background:#8a8a8a"></div>
<div class="a" style="left:1715px;top:657px;width:1px;height:4px;background:#8a8a8a"></div>
<div class="a" style="left:1733px;top:657px;width:1px;height:4px;background:#8a8a8a"></div>
<div class="a" style="left:1752px;top:653px;width:1px;height:8px;background:#000;box-shadow:0.6px 0 0 rgba(0,0,0,0.45)"></div>
<div class="a" style="left:1770px;top:657px;width:1px;height:4px;background:#8a8a8a"></div>
<div class="a" style="left:1788px;top:657px;width:1px;height:4px;background:#8a8a8a"></div>
<div class="a" style="left:1807px;top:657px;width:1px;height:4px;background:#8a8a8a"></div>
<div class="a" style="left:1825px;top:653px;width:1px;height:8px;background:#000;box-shadow:0.6px 0 0 rgba(0,0,0,0.45)"></div>
<div class="a mk" style="left:1528.5px;top:655px"></div>
<div class="a" style="left:1532px;top:653px;width:1px;height:8px;background:#000"></div>
<div class="a mk" style="left:1675.5px;top:655px"></div>
<div class="a" style="left:1679px;top:653px;width:1px;height:8px;background:#000"></div>
<div class="a" style="left:1532px;top:671px;width:293px;height:4px;background:#b39a88"></div>
<div class="a t ch" style="left:1533.30px;top:627.25px;transform:scaleX(0.702)">G</div>
<svg class="a" style="left:1547.00px;top:630px" width="7" height="18" viewBox="0 0 7 18"><path d="M2 1.2v16.8 M5.1 0v16.8" stroke="#0c0c0c" stroke-width="1.7"/><path d="M0 6.2l7-1.5v2.7l-7 1.5z M0 11.6l7-1.5v2.7l-7 1.5z" fill="#0c0c0c"/></svg>
<div class="a t ch" style="left:1555.98px;top:627.25px;transform:scaleX(0.811)">m</div>
<div class="a t ch" style="left:1574.03px;top:627.25px;transform:scaleX(0.871)">7</div>
<div class="a t sup" style="left:1588px;top:625.3px;transform:scale(0.645,1.17)">11</div>
<div class="a t ch" style="left:1661.28px;top:627.25px;transform:scaleX(0.717)">C</div>
<svg class="a" style="left:1674.90px;top:630px" width="7" height="18" viewBox="0 0 7 18"><path d="M2 1.2v16.8 M5.1 0v16.8" stroke="#0c0c0c" stroke-width="1.7"/><path d="M0 6.2l7-1.5v2.7l-7 1.5z M0 11.6l7-1.5v2.7l-7 1.5z" fill="#0c0c0c"/></svg>
<div class="a t ch" style="left:1682.83px;top:627.25px;transform:scaleX(0.871)">7</div>
<div class="a cell" style="left:606px;top:693px;width:303px;height:69px"></div>
<div class="a t bn" style="left:809px;top:689px;width:96px;text-align:right"><span>25</span></div>
<div class="a" style="left:611px;top:737px;width:294px;height:1px;background:#7c7c7c"></div>
<div class="a" style="left:629px;top:734px;width:1px;height:4px;background:#8a8a8a"></div>
<div class="a" style="left:648px;top:734px;width:1px;height:4px;background:#8a8a8a"></div>
<div class="a" style="left:666px;top:734px;width:1px;height:4px;background:#8a8a8a"></div>
<div class="a" style="left:684px;top:730px;width:1px;height:8px;background:#000;box-shadow:0.6px 0 0 rgba(0,0,0,0.45)"></div>
<div class="a" style="left:703px;top:734px;width:1px;height:4px;background:#8a8a8a"></div>
<div class="a" style="left:721px;top:734px;width:1px;height:4px;background:#8a8a8a"></div>
<div class="a" style="left:739px;top:734px;width:1px;height:4px;background:#8a8a8a"></div>
<div class="a" style="left:757px;top:730px;width:1px;height:8px;background:#000;box-shadow:0.6px 0 0 rgba(0,0,0,0.45)"></div>
<div class="a" style="left:776px;top:734px;width:1px;height:4px;background:#8a8a8a"></div>
<div class="a" style="left:794px;top:734px;width:1px;height:4px;background:#8a8a8a"></div>
<div class="a" style="left:812px;top:734px;width:1px;height:4px;background:#8a8a8a"></div>
<div class="a" style="left:831px;top:730px;width:1px;height:8px;background:#000;box-shadow:0.6px 0 0 rgba(0,0,0,0.45)"></div>
<div class="a" style="left:849px;top:734px;width:1px;height:4px;background:#8a8a8a"></div>
<div class="a" style="left:867px;top:734px;width:1px;height:4px;background:#8a8a8a"></div>
<div class="a" style="left:886px;top:734px;width:1px;height:4px;background:#8a8a8a"></div>
<div class="a" style="left:904px;top:730px;width:1px;height:8px;background:#000;box-shadow:0.6px 0 0 rgba(0,0,0,0.45)"></div>
<div class="a mk" style="left:607.5px;top:732px"></div>
<div class="a" style="left:611px;top:730px;width:1px;height:8px;background:#000"></div>
<div class="a" style="left:611px;top:748px;width:293px;height:4px;background:#98cbc5"></div>
<div class="a t slb" style="left:613px;top:742px;width:19px;background:#98cbc5">A-4</div>
<div class="a t ts" style="left:613px;top:705px">4<br>4</div>
<div class="a t ch" style="left:625.30px;top:704.25px;transform:scaleX(0.702)">G</div>
<svg class="a" style="left:639.00px;top:707px" width="7" height="18" viewBox="0 0 7 18"><path d="M2 1.2v16.8 M5.1 0v16.8" stroke="#0c0c0c" stroke-width="1.7"/><path d="M0 6.2l7-1.5v2.7l-7 1.5z M0 11.6l7-1.5v2.7l-7 1.5z" fill="#0c0c0c"/></svg>
<div class="a t sup" style="left:649px;top:702.3px;transform:scale(0.793,1.17)">sus9</div>
<div class="a cell" style="left:913px;top:693px;width:303px;height:69px"></div>
<div class="a t bn" style="left:1116px;top:689px;width:96px;text-align:right"><span>26</span></div>
<div class="a" style="left:918px;top:737px;width:294px;height:1px;background:#7c7c7c"></div>
<div class="a" style="left:936px;top:734px;width:1px;height:4px;background:#8a8a8a"></div>
<div class="a" style="left:955px;top:734px;width:1px;height:4px;background:#8a8a8a"></div>
<div class="a" style="left:973px;top:734px;width:1px;height:4px;background:#8a8a8a"></div>
<div class="a" style="left:991px;top:730px;width:1px;height:8px;background:#000;box-shadow:0.6px 0 0 rgba(0,0,0,0.45)"></div>
<div class="a" style="left:1010px;top:734px;width:1px;height:4px;background:#8a8a8a"></div>
<div class="a" style="left:1028px;top:734px;width:1px;height:4px;background:#8a8a8a"></div>
<div class="a" style="left:1046px;top:734px;width:1px;height:4px;background:#8a8a8a"></div>
<div class="a" style="left:1064px;top:730px;width:1px;height:8px;background:#000;box-shadow:0.6px 0 0 rgba(0,0,0,0.45)"></div>
<div class="a" style="left:1083px;top:734px;width:1px;height:4px;background:#8a8a8a"></div>
<div class="a" style="left:1101px;top:734px;width:1px;height:4px;background:#8a8a8a"></div>
<div class="a" style="left:1119px;top:734px;width:1px;height:4px;background:#8a8a8a"></div>
<div class="a" style="left:1138px;top:730px;width:1px;height:8px;background:#000;box-shadow:0.6px 0 0 rgba(0,0,0,0.45)"></div>
<div class="a" style="left:1156px;top:734px;width:1px;height:4px;background:#8a8a8a"></div>
<div class="a" style="left:1174px;top:734px;width:1px;height:4px;background:#8a8a8a"></div>
<div class="a" style="left:1193px;top:734px;width:1px;height:4px;background:#8a8a8a"></div>
<div class="a" style="left:1211px;top:730px;width:1px;height:8px;background:#000;box-shadow:0.6px 0 0 rgba(0,0,0,0.45)"></div>
<div class="a mk" style="left:914.5px;top:732px"></div>
<div class="a" style="left:918px;top:730px;width:1px;height:8px;background:#000"></div>
<div class="a" style="left:918px;top:748px;width:293px;height:4px;background:#98cbc5"></div>
<div class="a t ch" style="left:918.28px;top:704.25px;transform:scaleX(0.717)">C</div>
<svg class="a" style="left:931.90px;top:707px" width="7" height="18" viewBox="0 0 7 18"><path d="M2 1.2v16.8 M5.1 0v16.8" stroke="#0c0c0c" stroke-width="1.7"/><path d="M0 6.2l7-1.5v2.7l-7 1.5z M0 11.6l7-1.5v2.7l-7 1.5z" fill="#0c0c0c"/></svg>
<svg class="a" style="left:941.00px;top:707px" width="8" height="18" viewBox="0 0 8 18"><polygon points="0,18 2.6,18 7.7,0 5.1,0" fill="#0c0c0c"/></svg>
<div class="a t ch" style="left:950.10px;top:704.25px;transform:scaleX(0.702)">G</div>
<svg class="a" style="left:963.80px;top:707px" width="7" height="18" viewBox="0 0 7 18"><path d="M2 1.2v16.8 M5.1 0v16.8" stroke="#0c0c0c" stroke-width="1.7"/><path d="M0 6.2l7-1.5v2.7l-7 1.5z M0 11.6l7-1.5v2.7l-7 1.5z" fill="#0c0c0c"/></svg>
<div class="a cell" style="left:1220px;top:693px;width:303px;height:69px"></div>
<div class="a t bn" style="left:1423px;top:689px;width:96px;text-align:right"><span>27</span></div>
<div class="a" style="left:1225px;top:737px;width:294px;height:1px;background:#7c7c7c"></div>
<div class="a" style="left:1243px;top:734px;width:1px;height:4px;background:#8a8a8a"></div>
<div class="a" style="left:1262px;top:734px;width:1px;height:4px;background:#8a8a8a"></div>
<div class="a" style="left:1280px;top:734px;width:1px;height:4px;background:#8a8a8a"></div>
<div class="a" style="left:1298px;top:730px;width:1px;height:8px;background:#000;box-shadow:0.6px 0 0 rgba(0,0,0,0.45)"></div>
<div class="a" style="left:1317px;top:734px;width:1px;height:4px;background:#8a8a8a"></div>
<div class="a" style="left:1335px;top:734px;width:1px;height:4px;background:#8a8a8a"></div>
<div class="a" style="left:1353px;top:734px;width:1px;height:4px;background:#8a8a8a"></div>
<div class="a" style="left:1371px;top:730px;width:1px;height:8px;background:#000;box-shadow:0.6px 0 0 rgba(0,0,0,0.45)"></div>
<div class="a" style="left:1390px;top:734px;width:1px;height:4px;background:#8a8a8a"></div>
<div class="a" style="left:1408px;top:734px;width:1px;height:4px;background:#8a8a8a"></div>
<div class="a" style="left:1426px;top:734px;width:1px;height:4px;background:#8a8a8a"></div>
<div class="a" style="left:1445px;top:730px;width:1px;height:8px;background:#000;box-shadow:0.6px 0 0 rgba(0,0,0,0.45)"></div>
<div class="a" style="left:1463px;top:734px;width:1px;height:4px;background:#8a8a8a"></div>
<div class="a" style="left:1481px;top:734px;width:1px;height:4px;background:#8a8a8a"></div>
<div class="a" style="left:1500px;top:734px;width:1px;height:4px;background:#8a8a8a"></div>
<div class="a" style="left:1518px;top:730px;width:1px;height:8px;background:#000;box-shadow:0.6px 0 0 rgba(0,0,0,0.45)"></div>
<div class="a mk" style="left:1221.5px;top:732px"></div>
<div class="a" style="left:1225px;top:730px;width:1px;height:8px;background:#000"></div>
<div class="a" style="left:1225px;top:748px;width:293px;height:4px;background:#98cbc5"></div>
<div class="a t ch" style="left:1226.00px;top:704.25px;transform:scaleX(0.664)">B</div>
<svg class="a" style="left:1238.30px;top:706px" width="8" height="19" viewBox="0 0 8 19"><path d="M1.1 0v18.5" stroke="#0c0c0c" stroke-width="2.2"/><path d="M1.5 10.5Q4.5 7.5 6.3 9Q7.8 10.8 5.2 14L1.2 18" stroke="#0c0c0c" stroke-width="2" fill="none"/></svg>
<div class="a t ch" style="left:1246.48px;top:704.25px;transform:scaleX(0.811)">m</div>
<div class="a t ch" style="left:1264.53px;top:704.25px;transform:scaleX(0.871)">7</div>
<div class="a t sup" style="left:1277px;top:702.3px;transform:scale(0.704,1.17)">11</div>
<div class="a cell" style="left:1527px;top:693px;width:303px;height:69px"></div>
<div class="a t bn" style="left:1730px;top:689px;width:96px;text-align:right"><span>28</span></div>
<div class="a" style="left:1532px;top:737px;width:294px;height:1px;background:#7c7c7c"></div>
<div class="a" style="left:1532px;top:730px;width:1px;height:8px;background:#000;box-shadow:0.6px 0 0 rgba(0,0,0,0.45)"></div>
<div class="a" style="left:1550px;top:734px;width:1px;height:4px;background:#8a8a8a"></div>
<div class="a" style="left:1569px;top:734px;width:1px;height:4px;background:#8a8a8a"></div>
<div class="a" style="left:1587px;top:734px;width:1px;height:4px;background:#8a8a8a"></div>
<div class="a" style="left:1605px;top:730px;width:1px;height:8px;background:#000;box-shadow:0.6px 0 0 rgba(0,0,0,0.45)"></div>
<div class="a" style="left:1624px;top:734px;width:1px;height:4px;background:#8a8a8a"></div>
<div class="a" style="left:1642px;top:734px;width:1px;height:4px;background:#8a8a8a"></div>
<div class="a" style="left:1660px;top:734px;width:1px;height:4px;background:#8a8a8a"></div>
<div class="a" style="left:1678px;top:730px;width:1px;height:8px;background:#000;box-shadow:0.6px 0 0 rgba(0,0,0,0.45)"></div>
<div class="a" style="left:1697px;top:734px;width:1px;height:4px;background:#8a8a8a"></div>
<div class="a" style="left:1715px;top:734px;width:1px;height:4px;background:#8a8a8a"></div>
<div class="a" style="left:1733px;top:734px;width:1px;height:4px;background:#8a8a8a"></div>
<div class="a" style="left:1752px;top:730px;width:1px;height:8px;background:#000;box-shadow:0.6px 0 0 rgba(0,0,0,0.45)"></div>
<div class="a" style="left:1770px;top:734px;width:1px;height:4px;background:#8a8a8a"></div>
<div class="a" style="left:1788px;top:734px;width:1px;height:4px;background:#8a8a8a"></div>
<div class="a" style="left:1807px;top:734px;width:1px;height:4px;background:#8a8a8a"></div>
<div class="a" style="left:1825px;top:730px;width:1px;height:8px;background:#000;box-shadow:0.6px 0 0 rgba(0,0,0,0.45)"></div>
<div class="a" style="left:1532px;top:748px;width:293px;height:4px;background:#98cbc5"></div></div></div>
<div class="a" style="left:1834px;top:225px;width:10px;height:521px;background:#3b3e41"></div>
<div class="a" style="left:1836px;top:227px;width:6px;height:267px;background:#626a6e;border-radius:3px"></div>
<div class="a" style="left:1845px;top:224px;width:23px;height:524px;background:#3b3e41;border-left:1px solid #55585b;border-right:1px solid #66696c;border-bottom:1px solid #66696c"></div>
<div class="a" style="left:601px;top:752px;width:1267px;height:31px;background:#28292b"></div>
<div class="a" style="left:601px;top:752px;width:216px;height:31px;background:#3b3e41;border:1px solid #55585b;border-bottom:none"></div>
<div class="a t" style="left:607px;top:760px;color:#d8d8d8;font-size:17px">Sorriso contagiante [ON] &times;</div>
<div class="a" style="left:1850px;top:771px;width:11px;height:2px;background:#e0e0e0"></div>
<div class="a" style="left:601px;top:784px;width:1267px;height:218px;background:#3b3e41;border-top:1px solid #66696c;border-left:1px solid #66696c;border-bottom:1px solid #66696c;border-right:1px solid #66696c"></div>
<div class="a" style="left:602px;top:785px;width:1px;height:216px;background:#55585b"></div>
<div class="a" style="left:603px;top:784px;width:1231px;height:207px;overflow:hidden">
<div class="a" style="left:-603px;top:-784px;width:1920px;height:1080px">
<div class="a" style="left:604px;top:790px;width:149px;height:210px;background:#b57b68"></div>
<div class="a t" style="left:609px;top:794px;font-size:11px;color:#111">A</div>
<div class="a pbox" style="left:606px;top:853px;width:145px;height:37px"><div class="a t plab" style="right:2px;top:3px">varia&ccedil;&atilde;o</div><div class="a t pmain" style="left:0;width:100%;top:16px">Main A-1</div></div>
<div class="a pbox" style="left:606px;top:895px;width:145px;height:56px"><div class="a t plab" style="right:2px;top:3px">intensidade</div><div class="a" style="left:50%;margin-left:-25px;top:26px;width:49px;height:1px;background:#555"></div></div>
<div class="a pbox" style="left:606px;top:956px;width:145px;height:60px"><div class="a t plab" style="right:2px;top:3px">virada de bateria</div></div>
<div class="a" style="left:755px;top:790px;width:370px;height:210px;background:#cd9569"></div>
<div class="a t" style="left:760px;top:794px;font-size:11px;color:#111">A-1</div>
<div class="a pbox" style="left:757px;top:853px;width:366px;height:37px"><div class="a t plab" style="right:2px;top:3px">varia&ccedil;&atilde;o</div><div class="a t pmain" style="left:0;width:100%;top:16px">Main A-1</div></div>
<div class="a pbox" style="left:757px;top:895px;width:366px;height:56px"><div class="a t plab" style="right:2px;top:3px">intensidade</div><div class="a" style="left:50%;margin-left:-25px;top:26px;width:49px;height:1px;background:#555"></div></div>
<div class="a pbox" style="left:757px;top:956px;width:366px;height:60px"><div class="a t plab" style="right:2px;top:3px">virada de bateria</div></div>
<div class="a" style="left:1127px;top:790px;width:149px;height:210px;background:#6e7b6a"></div>
<div class="a t" style="left:1132px;top:794px;font-size:11px;color:#111">A-2</div>
<div class="a pbox" style="left:1129px;top:853px;width:145px;height:37px"><div class="a t plab" style="right:2px;top:3px">varia&ccedil;&atilde;o</div><div class="a t pmain" style="left:0;width:100%;top:16px">Main A-1</div></div>
<div class="a pbox" style="left:1129px;top:895px;width:145px;height:56px"><div class="a t plab" style="right:2px;top:3px">intensidade</div><div class="a" style="left:50%;margin-left:-25px;top:26px;width:49px;height:1px;background:#555"></div></div>
<div class="a pbox" style="left:1129px;top:956px;width:145px;height:60px"><div class="a t plab" style="right:2px;top:3px">virada de bateria</div></div>
<div class="a" style="left:1278px;top:790px;width:149px;height:210px;background:#b79c8a"></div>
<div class="a t" style="left:1283px;top:794px;font-size:11px;color:#111">A-3</div>
<div class="a pbox" style="left:1280px;top:853px;width:145px;height:37px"><div class="a t plab" style="right:2px;top:3px">varia&ccedil;&atilde;o</div><div class="a t pmain" style="left:0;width:100%;top:16px">Main A-1</div></div>
<div class="a pbox" style="left:1280px;top:895px;width:145px;height:56px"><div class="a t plab" style="right:2px;top:3px">intensidade</div><div class="a" style="left:50%;margin-left:-25px;top:26px;width:49px;height:1px;background:#555"></div></div>
<div class="a pbox" style="left:1280px;top:956px;width:145px;height:60px"><div class="a t plab" style="right:2px;top:3px">virada de bateria</div></div>
<div class="a" style="left:1429px;top:790px;width:149px;height:210px;background:#98cbc5"></div>
<div class="a t" style="left:1434px;top:794px;font-size:11px;color:#111">A-4</div>
<div class="a pbox" style="left:1431px;top:853px;width:145px;height:37px"><div class="a t plab" style="right:2px;top:3px">varia&ccedil;&atilde;o</div><div class="a t pmain" style="left:0;width:100%;top:16px">Main A-1</div></div>
<div class="a pbox" style="left:1431px;top:895px;width:145px;height:56px"><div class="a t plab" style="right:2px;top:3px">intensidade</div><div class="a" style="left:50%;margin-left:-25px;top:26px;width:49px;height:1px;background:#555"></div></div>
<div class="a pbox" style="left:1431px;top:956px;width:145px;height:60px"><div class="a t plab" style="right:2px;top:3px">virada de bateria</div></div>
<div class="a" style="left:1580px;top:790px;width:204px;height:210px;background:#d1c29e"></div>
<div class="a t" style="left:1585px;top:794px;font-size:11px;color:#111">A-5</div>
<div class="a pbox" style="left:1582px;top:853px;width:200px;height:37px"><div class="a t plab" style="right:2px;top:3px">varia&ccedil;&atilde;o</div><div class="a t pmain" style="left:0;width:100%;top:16px">Main A-1</div></div>
<div class="a pbox" style="left:1582px;top:895px;width:200px;height:56px"><div class="a t plab" style="right:2px;top:3px">intensidade</div><div class="a" style="left:50%;margin-left:-25px;top:26px;width:49px;height:1px;background:#555"></div></div>
<div class="a pbox" style="left:1582px;top:956px;width:200px;height:60px"><div class="a t plab" style="right:2px;top:3px">virada de bateria</div></div>
<div class="a t" style="left:608px;top:815px;font-size:10px;color:#111;transform:scaleX(0.85);transform-origin:0 0">4/4</div>
<div class="a t" style="left:609px;top:838px;font-size:11px;color:#22189a;transform:scaleX(0.86);transform-origin:0 0">90&#699;sguitarpop.s080.prs</div>
</div></div>
<div class="a" style="left:605px;top:993px;width:1225px;height:6px;background:#626a6e;border-radius:3px"></div>
<div class="a" style="left:1836px;top:787px;width:6px;height:158px;background:#626a6e;border-radius:3px"></div>
<div class="a" style="left:1844px;top:784px;width:24px;height:218px;background:#3b3e41;border:1px solid #66696c"></div>
<div class="a" style="left:1574px;top:1016px;width:120px;height:2px;background:#6a6d70"></div>
<div class="a" style="left:1574px;top:1016px;width:96px;height:2px;background:#4a88d0"></div>
<div class="a" style="left:1664px;top:1011px;width:12px;height:12px;background:#4a88d0;border-radius:50%"></div>
<div class="a" style="left:1738px;top:1016px;width:120px;height:2px;background:#6a6d70"></div>
<div class="a" style="left:1738px;top:1016px;width:60px;height:2px;background:#4a88d0"></div>
<div class="a" style="left:1792px;top:1011px;width:12px;height:12px;background:#4a88d0;border-radius:50%"></div>
<div class="a" style="left:151px;top:257px;width:108px;height:6px;border-radius:3px;background:#f0f0f0"></div>
<div class="a" style="left:151px;top:257px;width:54px;height:6px;border-radius:3px 0 0 3px;background:linear-gradient(90deg,#1a7ff0,#3a6cf6)"></div>
<div class="a" style="left:198px;top:254px;width:13px;height:13px;border-radius:50%;background:#f2f2f2;border:1.5px solid #9a9a9a"></div>
<div class="a" style="left:152px;top:266px;width:1px;height:2px;background:#9a9a9a"></div>
<div class="a" style="left:178px;top:266px;width:1px;height:2px;background:#9a9a9a"></div>
<div class="a" style="left:204px;top:266px;width:1px;height:2px;background:#9a9a9a"></div>
<div class="a" style="left:230px;top:266px;width:1px;height:2px;background:#9a9a9a"></div>
<div class="a" style="left:256px;top:266px;width:1px;height:2px;background:#9a9a9a"></div>
<svg class="a" style="left:420px;top:251px" width="18" height="18" viewBox="0 0 18 18">
      <circle cx="9" cy="9" r="7.6" fill="none" stroke="#e8e8e8" stroke-width="1.1"/><path d="M9 4.2v9.6M4.2 9h9.6" stroke="#1e90ff" stroke-width="2.4"/></svg>
<svg class="a" style="left:1815px;top:202px" width="50" height="14" viewBox="0 0 50 14">
      <path d="M10 1l-5 6 5 6" stroke="#7a7f86" stroke-width="1.1" fill="none"/><path d="M21 1l5 6-5 6" stroke="#7a7f86" stroke-width="1.1" fill="none"/>
      <path d="M37 3.5l5 5 5-5" stroke="#e8e8e8" stroke-width="1.4" fill="none"/></svg>
<svg class="a" style="left:1850px;top:229px" width="12" height="12" viewBox="-6 -6 12 12">
      <path fill="#8a8a8a" d="M-1 -5.5h2l.4 1.5a4 4 0 0 1 1.1 .6l1.5-.5 1 1.7-1.1 1a4 4 0 0 1 0 1.4l1.1 1-1 1.7-1.5-.5a4 4 0 0 1-1.1 .6l-.4 1.5h-2l-.4-1.5a4 4 0 0 1-1.1-.6l-1.5 .5-1-1.7 1.1-1a4 4 0 0 1 0-1.4l-1.1-1 1-1.7 1.5 .5a4 4 0 0 1 1.1-.6z M0 -1.5a1.5 1.5 0 1 0 .01 0z"/></svg>
<div class="a" style="left:1850px;top:252px;width:12px;height:2px;background:#8a8a8a"></div>
<div class="a" style="left:1850px;top:256px;width:12px;height:2px;background:#8a8a8a"></div>
<svg class="a" style="left:1849px;top:788px" width="14" height="14" viewBox="0 0 14 14">
      <path d="M1 1v12M13 1v12" stroke="#8a8a8a" stroke-width="1.2"/><path d="M2 7l3.5-3v2h3v-2l3.5 3-3.5 3v-2h-3v2z" fill="#8a8a8a"/></svg>
<svg class="a" style="left:1850px;top:812px" width="12" height="12" viewBox="-6 -6 12 12">
      <path fill="#8a8a8a" d="M-1 -5.5h2l.4 1.5a4 4 0 0 1 1.1 .6l1.5-.5 1 1.7-1.1 1a4 4 0 0 1 0 1.4l1.1 1-1 1.7-1.5-.5a4 4 0 0 1-1.1 .6l-.4 1.5h-2l-.4-1.5a4 4 0 0 1-1.1-.6l-1.5 .5-1-1.7 1.1-1a4 4 0 0 1 0-1.4l-1.1-1 1-1.7 1.5 .5a4 4 0 0 1 1.1-.6z M0 -1.5a1.5 1.5 0 1 0 .01 0z"/></svg>
<svg class="a" style="left:1849px;top:828px" width="14" height="14" viewBox="0 0 14 14">
      <rect x="0" y="0.8" width="14" height="2.6" rx="1" fill="#ff1010"/><rect x="0" y="4.6" width="14" height="2.6" rx="1" fill="#ff1010"/><path d="M7 8.5l-4 3.5h2.5v2h3v-2h2.5z" fill="#ff1010"/></svg>
<svg class="a" style="left:1547px;top:1010px" width="18" height="14" viewBox="0 0 18 14">
      <path d="M0 7l5-5v3h8v-3l5 5-5 5v-3h-8v3z" fill="#1c1c1c"/></svg>
<svg class="a" style="left:1718px;top:1009px" width="11" height="16" viewBox="0 0 11 16">
      <path d="M5.5 0l4.5 4.5h-2.8v7h2.8l-4.5 4.5-4.5-4.5h2.8v-7h-2.8z" fill="#1c1c1c"/></svg>
<div class="a" style="left:165px;top:797px;width:2px;height:1px;background:#a01880"></div><div class="a" style="left:173px;top:797px;width:2px;height:1px;background:#a01880"></div><div class="a" style="left:181px;top:797px;width:2px;height:1px;background:#c02090"></div><div class="a" style="left:191px;top:797px;width:2px;height:1px;background:#a01880"></div><div class="a" style="left:201px;top:797px;width:2px;height:1px;background:#a01880"></div><div class="a" style="left:203px;top:797px;width:2px;height:1px;background:#a01880"></div><div class="a" style="left:207px;top:797px;width:2px;height:1px;background:#c02090"></div><div class="a" style="left:177px;top:799px;width:2px;height:1px;background:#a01880"></div><div class="a" style="left:181px;top:799px;width:2px;height:1px;background:#c02090"></div><div class="a" style="left:197px;top:799px;width:2px;height:1px;background:#c02090"></div><div class="a" style="left:209px;top:799px;width:2px;height:1px;background:#c02090"></div>
<div class="a" style="left:222px;top:777px;width:2px;height:1px;background:#e02050"></div><div class="a" style="left:230px;top:777px;width:2px;height:1px;background:#d0206a"></div><div class="a" style="left:232px;top:777px;width:2px;height:1px;background:#e02050"></div><div class="a" style="left:236px;top:777px;width:2px;height:1px;background:#d0206a"></div><div class="a" style="left:238px;top:777px;width:2px;height:1px;background:#d0206a"></div><div class="a" style="left:240px;top:777px;width:2px;height:1px;background:#8020c0"></div><div class="a" style="left:246px;top:777px;width:2px;height:1px;background:#e02050"></div><div class="a" style="left:250px;top:777px;width:2px;height:1px;background:#e02050"></div><div class="a" style="left:252px;top:777px;width:2px;height:1px;background:#8020c0"></div><div class="a" style="left:254px;top:777px;width:2px;height:1px;background:#d0206a"></div><div class="a" style="left:256px;top:777px;width:2px;height:1px;background:#d0206a"></div><div class="a" style="left:258px;top:777px;width:2px;height:1px;background:#e02050"></div><div class="a" style="left:260px;top:777px;width:2px;height:1px;background:#d0206a"></div><div class="a" style="left:218px;top:779px;width:2px;height:1px;background:#8020c0"></div><div class="a" style="left:220px;top:779px;width:2px;height:1px;background:#d0206a"></div><div class="a" style="left:224px;top:779px;width:2px;height:1px;background:#8020c0"></div><div class="a" style="left:230px;top:779px;width:2px;height:1px;background:#8020c0"></div><div class="a" style="left:234px;top:779px;width:2px;height:1px;background:#e02050"></div><div class="a" style="left:238px;top:779px;width:2px;height:1px;background:#e02050"></div><div class="a" style="left:240px;top:779px;width:2px;height:1px;background:#e02050"></div><div class="a" style="left:244px;top:779px;width:2px;height:1px;background:#8020c0"></div><div class="a" style="left:246px;top:779px;width:2px;height:1px;background:#8020c0"></div><div class="a" style="left:248px;top:779px;width:2px;height:1px;background:#e02050"></div><div class="a" style="left:250px;top:779px;width:2px;height:1px;background:#8020c0"></div><div class="a" style="left:254px;top:779px;width:2px;height:1px;background:#8020c0"></div><div class="a" style="left:260px;top:779px;width:2px;height:1px;background:#e02050"></div><div class="a" style="left:262px;top:779px;width:2px;height:1px;background:#8020c0"></div><div class="a" style="left:220px;top:781px;width:2px;height:1px;background:#e02050"></div><div class="a" style="left:222px;top:781px;width:2px;height:1px;background:#8020c0"></div><div class="a" style="left:224px;top:781px;width:2px;height:1px;background:#d0206a"></div><div class="a" style="left:228px;top:781px;width:2px;height:1px;background:#8020c0"></div><div class="a" style="left:230px;top:781px;width:2px;height:1px;background:#8020c0"></div><div class="a" style="left:232px;top:781px;width:2px;height:1px;background:#e02050"></div><div class="a" style="left:234px;top:781px;width:2px;height:1px;background:#8020c0"></div><div class="a" style="left:236px;top:781px;width:2px;height:1px;background:#8020c0"></div><div class="a" style="left:240px;top:781px;width:2px;height:1px;background:#8020c0"></div><div class="a" style="left:242px;top:781px;width:2px;height:1px;background:#d0206a"></div><div class="a" style="left:248px;top:781px;width:2px;height:1px;background:#e02050"></div><div class="a" style="left:250px;top:781px;width:2px;height:1px;background:#8020c0"></div><div class="a" style="left:252px;top:781px;width:2px;height:1px;background:#d0206a"></div><div class="a" style="left:258px;top:781px;width:2px;height:1px;background:#e02050"></div><div class="a" style="left:260px;top:781px;width:2px;height:1px;background:#8020c0"></div><div class="a" style="left:218px;top:783px;width:2px;height:1px;background:#d0206a"></div><div class="a" style="left:220px;top:783px;width:2px;height:1px;background:#e02050"></div><div class="a" style="left:226px;top:783px;width:2px;height:1px;background:#d0206a"></div><div class="a" style="left:230px;top:783px;width:2px;height:1px;background:#d0206a"></div><div class="a" style="left:232px;top:783px;width:2px;height:1px;background:#e02050"></div><div class="a" style="left:234px;top:783px;width:2px;height:1px;background:#8020c0"></div><div class="a" style="left:236px;top:783px;width:2px;height:1px;background:#e02050"></div><div class="a" style="left:238px;top:783px;width:2px;height:1px;background:#e02050"></div><div class="a" style="left:240px;top:783px;width:2px;height:1px;background:#d0206a"></div><div class="a" style="left:242px;top:783px;width:2px;height:1px;background:#e02050"></div><div class="a" style="left:246px;top:783px;width:2px;height:1px;background:#8020c0"></div><div class="a" style="left:250px;top:783px;width:2px;height:1px;background:#e02050"></div><div class="a" style="left:252px;top:783px;width:2px;height:1px;background:#8020c0"></div><div class="a" style="left:254px;top:783px;width:2px;height:1px;background:#d0206a"></div><div class="a" style="left:256px;top:783px;width:2px;height:1px;background:#e02050"></div><div class="a" style="left:260px;top:783px;width:2px;height:1px;background:#e02050"></div><div class="a" style="left:262px;top:783px;width:2px;height:1px;background:#e02050"></div><div class="a" style="left:218px;top:785px;width:2px;height:1px;background:#e02050"></div><div class="a" style="left:224px;top:785px;width:2px;height:1px;background:#d0206a"></div><div class="a" style="left:232px;top:785px;width:2px;height:1px;background:#d0206a"></div><div class="a" style="left:234px;top:785px;width:2px;height:1px;background:#e02050"></div><div class="a" style="left:236px;top:785px;width:2px;height:1px;background:#d0206a"></div><div class="a" style="left:242px;top:785px;width:2px;height:1px;background:#d0206a"></div><div class="a" style="left:244px;top:785px;width:2px;height:1px;background:#d0206a"></div><div class="a" style="left:246px;top:785px;width:2px;height:1px;background:#8020c0"></div><div class="a" style="left:248px;top:785px;width:2px;height:1px;background:#d0206a"></div><div class="a" style="left:250px;top:785px;width:2px;height:1px;background:#8020c0"></div><div class="a" style="left:252px;top:785px;width:2px;height:1px;background:#e02050"></div><div class="a" style="left:254px;top:785px;width:2px;height:1px;background:#d0206a"></div><div class="a" style="left:256px;top:785px;width:2px;height:1px;background:#e02050"></div><div class="a" style="left:258px;top:785px;width:2px;height:1px;background:#d0206a"></div><div class="a" style="left:260px;top:785px;width:2px;height:1px;background:#d0206a"></div><div class="a" style="left:262px;top:785px;width:2px;height:1px;background:#d0206a"></div><div class="a" style="left:218px;top:787px;width:2px;height:1px;background:#8020c0"></div><div class="a" style="left:226px;top:787px;width:2px;height:1px;background:#e02050"></div><div class="a" style="left:228px;top:787px;width:2px;height:1px;background:#8020c0"></div><div class="a" style="left:230px;top:787px;width:2px;height:1px;background:#8020c0"></div><div class="a" style="left:232px;top:787px;width:2px;height:1px;background:#e02050"></div><div class="a" style="left:234px;top:787px;width:2px;height:1px;background:#8020c0"></div><div class="a" style="left:236px;top:787px;width:2px;height:1px;background:#8020c0"></div><div class="a" style="left:240px;top:787px;width:2px;height:1px;background:#d0206a"></div><div class="a" style="left:244px;top:787px;width:2px;height:1px;background:#d0206a"></div><div class="a" style="left:246px;top:787px;width:2px;height:1px;background:#d0206a"></div><div class="a" style="left:250px;top:787px;width:2px;height:1px;background:#e02050"></div><div class="a" style="left:252px;top:787px;width:2px;height:1px;background:#d0206a"></div><div class="a" style="left:254px;top:787px;width:2px;height:1px;background:#8020c0"></div><div class="a" style="left:256px;top:787px;width:2px;height:1px;background:#8020c0"></div><div class="a" style="left:258px;top:787px;width:2px;height:1px;background:#8020c0"></div><div class="a" style="left:260px;top:787px;width:2px;height:1px;background:#8020c0"></div><div class="a" style="left:262px;top:787px;width:2px;height:1px;background:#d0206a"></div>
<div class="a" style="left:238px;top:790px;width:1px;height:6px;background:#a01880"></div>
<div class="a" style="left:324px;top:777px;width:2px;height:1px;background:#7030f0"></div><div class="a" style="left:326px;top:777px;width:2px;height:1px;background:#5a20e0"></div><div class="a" style="left:328px;top:777px;width:2px;height:1px;background:#5a20e0"></div><div class="a" style="left:330px;top:777px;width:2px;height:1px;background:#7030f0"></div><div class="a" style="left:332px;top:777px;width:2px;height:1px;background:#7030f0"></div><div class="a" style="left:334px;top:777px;width:2px;height:1px;background:#5a20e0"></div><div class="a" style="left:336px;top:777px;width:2px;height:1px;background:#4010c0"></div><div class="a" style="left:338px;top:777px;width:2px;height:1px;background:#7030f0"></div><div class="a" style="left:340px;top:777px;width:2px;height:1px;background:#7030f0"></div><div class="a" style="left:342px;top:777px;width:2px;height:1px;background:#7030f0"></div><div class="a" style="left:344px;top:777px;width:2px;height:1px;background:#5a20e0"></div><div class="a" style="left:346px;top:777px;width:2px;height:1px;background:#7030f0"></div><div class="a" style="left:348px;top:777px;width:2px;height:1px;background:#7030f0"></div><div class="a" style="left:350px;top:777px;width:2px;height:1px;background:#4010c0"></div><div class="a" style="left:352px;top:777px;width:2px;height:1px;background:#5a20e0"></div><div class="a" style="left:358px;top:777px;width:2px;height:1px;background:#7030f0"></div><div class="a" style="left:360px;top:777px;width:2px;height:1px;background:#4010c0"></div><div class="a" style="left:362px;top:777px;width:2px;height:1px;background:#7030f0"></div><div class="a" style="left:364px;top:777px;width:2px;height:1px;background:#7030f0"></div><div class="a" style="left:366px;top:777px;width:2px;height:1px;background:#7030f0"></div><div class="a" style="left:368px;top:777px;width:2px;height:1px;background:#7030f0"></div><div class="a" style="left:324px;top:779px;width:2px;height:1px;background:#4010c0"></div><div class="a" style="left:326px;top:779px;width:2px;height:1px;background:#5a20e0"></div><div class="a" style="left:330px;top:779px;width:2px;height:1px;background:#4010c0"></div><div class="a" style="left:332px;top:779px;width:2px;height:1px;background:#4010c0"></div><div class="a" style="left:334px;top:779px;width:2px;height:1px;background:#5a20e0"></div><div class="a" style="left:336px;top:779px;width:2px;height:1px;background:#7030f0"></div><div class="a" style="left:340px;top:779px;width:2px;height:1px;background:#5a20e0"></div><div class="a" style="left:342px;top:779px;width:2px;height:1px;background:#5a20e0"></div><div class="a" style="left:344px;top:779px;width:2px;height:1px;background:#5a20e0"></div><div class="a" style="left:346px;top:779px;width:2px;height:1px;background:#7030f0"></div><div class="a" style="left:350px;top:779px;width:2px;height:1px;background:#5a20e0"></div><div class="a" style="left:352px;top:779px;width:2px;height:1px;background:#7030f0"></div><div class="a" style="left:354px;top:779px;width:2px;height:1px;background:#7030f0"></div><div class="a" style="left:356px;top:779px;width:2px;height:1px;background:#7030f0"></div><div class="a" style="left:358px;top:779px;width:2px;height:1px;background:#7030f0"></div><div class="a" style="left:360px;top:779px;width:2px;height:1px;background:#4010c0"></div><div class="a" style="left:364px;top:779px;width:2px;height:1px;background:#5a20e0"></div><div class="a" style="left:366px;top:779px;width:2px;height:1px;background:#5a20e0"></div><div class="a" style="left:368px;top:779px;width:2px;height:1px;background:#4010c0"></div><div class="a" style="left:324px;top:781px;width:2px;height:1px;background:#4010c0"></div><div class="a" style="left:326px;top:781px;width:2px;height:1px;background:#7030f0"></div><div class="a" style="left:328px;top:781px;width:2px;height:1px;background:#4010c0"></div><div class="a" style="left:330px;top:781px;width:2px;height:1px;background:#5a20e0"></div><div class="a" style="left:332px;top:781px;width:2px;height:1px;background:#5a20e0"></div><div class="a" style="left:336px;top:781px;width:2px;height:1px;background:#7030f0"></div><div class="a" style="left:340px;top:781px;width:2px;height:1px;background:#7030f0"></div><div class="a" style="left:342px;top:781px;width:2px;height:1px;background:#7030f0"></div><div class="a" style="left:346px;top:781px;width:2px;height:1px;background:#5a20e0"></div><div class="a" style="left:348px;top:781px;width:2px;height:1px;background:#5a20e0"></div><div class="a" style="left:350px;top:781px;width:2px;height:1px;background:#4010c0"></div><div class="a" style="left:352px;top:781px;width:2px;height:1px;background:#7030f0"></div><div class="a" style="left:354px;top:781px;width:2px;height:1px;background:#4010c0"></div><div class="a" style="left:356px;top:781px;width:2px;height:1px;background:#5a20e0"></div><div class="a" style="left:358px;top:781px;width:2px;height:1px;background:#5a20e0"></div><div class="a" style="left:360px;top:781px;width:2px;height:1px;background:#7030f0"></div><div class="a" style="left:362px;top:781px;width:2px;height:1px;background:#5a20e0"></div><div class="a" style="left:366px;top:781px;width:2px;height:1px;background:#4010c0"></div><div class="a" style="left:368px;top:781px;width:2px;height:1px;background:#4010c0"></div><div class="a" style="left:324px;top:783px;width:2px;height:1px;background:#7030f0"></div><div class="a" style="left:326px;top:783px;width:2px;height:1px;background:#4010c0"></div><div class="a" style="left:330px;top:783px;width:2px;height:1px;background:#4010c0"></div><div class="a" style="left:332px;top:783px;width:2px;height:1px;background:#4010c0"></div><div class="a" style="left:334px;top:783px;width:2px;height:1px;background:#7030f0"></div><div class="a" style="left:336px;top:783px;width:2px;height:1px;background:#4010c0"></div><div class="a" style="left:338px;top:783px;width:2px;height:1px;background:#5a20e0"></div><div class="a" style="left:340px;top:783px;width:2px;height:1px;background:#7030f0"></div><div class="a" style="left:342px;top:783px;width:2px;height:1px;background:#7030f0"></div><div class="a" style="left:344px;top:783px;width:2px;height:1px;background:#7030f0"></div><div class="a" style="left:350px;top:783px;width:2px;height:1px;background:#4010c0"></div><div class="a" style="left:354px;top:783px;width:2px;height:1px;background:#4010c0"></div><div class="a" style="left:356px;top:783px;width:2px;height:1px;background:#5a20e0"></div><div class="a" style="left:358px;top:783px;width:2px;height:1px;background:#5a20e0"></div><div class="a" style="left:362px;top:783px;width:2px;height:1px;background:#7030f0"></div><div class="a" style="left:364px;top:783px;width:2px;height:1px;background:#5a20e0"></div><div class="a" style="left:368px;top:783px;width:2px;height:1px;background:#5a20e0"></div><div class="a" style="left:324px;top:785px;width:2px;height:1px;background:#5a20e0"></div><div class="a" style="left:326px;top:785px;width:2px;height:1px;background:#7030f0"></div><div class="a" style="left:328px;top:785px;width:2px;height:1px;background:#5a20e0"></div><div class="a" style="left:332px;top:785px;width:2px;height:1px;background:#5a20e0"></div><div class="a" style="left:334px;top:785px;width:2px;height:1px;background:#4010c0"></div><div class="a" style="left:336px;top:785px;width:2px;height:1px;background:#5a20e0"></div><div class="a" style="left:338px;top:785px;width:2px;height:1px;background:#4010c0"></div><div class="a" style="left:342px;top:785px;width:2px;height:1px;background:#4010c0"></div><div class="a" style="left:344px;top:785px;width:2px;height:1px;background:#7030f0"></div><div class="a" style="left:346px;top:785px;width:2px;height:1px;background:#5a20e0"></div><div class="a" style="left:348px;top:785px;width:2px;height:1px;background:#4010c0"></div><div class="a" style="left:350px;top:785px;width:2px;height:1px;background:#4010c0"></div><div class="a" style="left:352px;top:785px;width:2px;height:1px;background:#7030f0"></div><div class="a" style="left:354px;top:785px;width:2px;height:1px;background:#4010c0"></div><div class="a" style="left:356px;top:785px;width:2px;height:1px;background:#7030f0"></div><div class="a" style="left:358px;top:785px;width:2px;height:1px;background:#4010c0"></div><div class="a" style="left:360px;top:785px;width:2px;height:1px;background:#4010c0"></div><div class="a" style="left:362px;top:785px;width:2px;height:1px;background:#7030f0"></div><div class="a" style="left:366px;top:785px;width:2px;height:1px;background:#7030f0"></div><div class="a" style="left:368px;top:785px;width:2px;height:1px;background:#4010c0"></div>
<div class="a" style="left:432px;top:777px;width:2px;height:1px;background:#c01030"></div><div class="a" style="left:434px;top:777px;width:2px;height:1px;background:#c01030"></div><div class="a" style="left:440px;top:777px;width:2px;height:1px;background:#c01030"></div><div class="a" style="left:444px;top:777px;width:2px;height:1px;background:#c01030"></div><div class="a" style="left:450px;top:777px;width:2px;height:1px;background:#e01040"></div><div class="a" style="left:452px;top:777px;width:2px;height:1px;background:#c01030"></div><div class="a" style="left:454px;top:777px;width:2px;height:1px;background:#e01040"></div><div class="a" style="left:462px;top:777px;width:2px;height:1px;background:#c01030"></div><div class="a" style="left:466px;top:777px;width:2px;height:1px;background:#c01030"></div><div class="a" style="left:472px;top:777px;width:2px;height:1px;background:#e01040"></div><div class="a" style="left:434px;top:779px;width:2px;height:1px;background:#c01030"></div><div class="a" style="left:436px;top:779px;width:2px;height:1px;background:#e01040"></div><div class="a" style="left:440px;top:779px;width:2px;height:1px;background:#c01030"></div><div class="a" style="left:442px;top:779px;width:2px;height:1px;background:#c01030"></div><div class="a" style="left:448px;top:779px;width:2px;height:1px;background:#e01040"></div><div class="a" style="left:450px;top:779px;width:2px;height:1px;background:#e01040"></div><div class="a" style="left:452px;top:779px;width:2px;height:1px;background:#e01040"></div><div class="a" style="left:460px;top:779px;width:2px;height:1px;background:#e01040"></div><div class="a" style="left:466px;top:779px;width:2px;height:1px;background:#e01040"></div><div class="a" style="left:470px;top:779px;width:2px;height:1px;background:#c01030"></div><div class="a" style="left:430px;top:781px;width:2px;height:1px;background:#e01040"></div><div class="a" style="left:432px;top:781px;width:2px;height:1px;background:#c01030"></div><div class="a" style="left:434px;top:781px;width:2px;height:1px;background:#c01030"></div><div class="a" style="left:436px;top:781px;width:2px;height:1px;background:#c01030"></div><div class="a" style="left:442px;top:781px;width:2px;height:1px;background:#c01030"></div><div class="a" style="left:450px;top:781px;width:2px;height:1px;background:#c01030"></div><div class="a" style="left:452px;top:781px;width:2px;height:1px;background:#e01040"></div><div class="a" style="left:456px;top:781px;width:2px;height:1px;background:#e01040"></div><div class="a" style="left:458px;top:781px;width:2px;height:1px;background:#c01030"></div><div class="a" style="left:460px;top:781px;width:2px;height:1px;background:#e01040"></div><div class="a" style="left:462px;top:781px;width:2px;height:1px;background:#c01030"></div><div class="a" style="left:464px;top:781px;width:2px;height:1px;background:#c01030"></div><div class="a" style="left:470px;top:781px;width:2px;height:1px;background:#e01040"></div><div class="a" style="left:474px;top:781px;width:2px;height:1px;background:#c01030"></div><div class="a" style="left:434px;top:783px;width:2px;height:1px;background:#e01040"></div><div class="a" style="left:438px;top:783px;width:2px;height:1px;background:#c01030"></div><div class="a" style="left:442px;top:783px;width:2px;height:1px;background:#e01040"></div><div class="a" style="left:448px;top:783px;width:2px;height:1px;background:#e01040"></div><div class="a" style="left:454px;top:783px;width:2px;height:1px;background:#e01040"></div><div class="a" style="left:456px;top:783px;width:2px;height:1px;background:#e01040"></div><div class="a" style="left:460px;top:783px;width:2px;height:1px;background:#e01040"></div><div class="a" style="left:464px;top:783px;width:2px;height:1px;background:#c01030"></div><div class="a" style="left:470px;top:783px;width:2px;height:1px;background:#c01030"></div><div class="a" style="left:472px;top:783px;width:2px;height:1px;background:#c01030"></div><div class="a" style="left:474px;top:783px;width:2px;height:1px;background:#c01030"></div><div class="a" style="left:430px;top:785px;width:2px;height:1px;background:#c01030"></div><div class="a" style="left:436px;top:785px;width:2px;height:1px;background:#c01030"></div><div class="a" style="left:438px;top:785px;width:2px;height:1px;background:#c01030"></div><div class="a" style="left:442px;top:785px;width:2px;height:1px;background:#e01040"></div><div class="a" style="left:446px;top:785px;width:2px;height:1px;background:#c01030"></div><div class="a" style="left:448px;top:785px;width:2px;height:1px;background:#c01030"></div><div class="a" style="left:452px;top:785px;width:2px;height:1px;background:#e01040"></div><div class="a" style="left:454px;top:785px;width:2px;height:1px;background:#c01030"></div><div class="a" style="left:460px;top:785px;width:2px;height:1px;background:#e01040"></div><div class="a" style="left:462px;top:785px;width:2px;height:1px;background:#e01040"></div><div class="a" style="left:464px;top:785px;width:2px;height:1px;background:#e01040"></div><div class="a" style="left:466px;top:785px;width:2px;height:1px;background:#c01030"></div><div class="a" style="left:468px;top:785px;width:2px;height:1px;background:#e01040"></div><div class="a" style="left:470px;top:785px;width:2px;height:1px;background:#e01040"></div><div class="a" style="left:472px;top:785px;width:2px;height:1px;background:#e01040"></div><div class="a" style="left:432px;top:787px;width:2px;height:1px;background:#c01030"></div><div class="a" style="left:434px;top:787px;width:2px;height:1px;background:#e01040"></div><div class="a" style="left:436px;top:787px;width:2px;height:1px;background:#e01040"></div><div class="a" style="left:438px;top:787px;width:2px;height:1px;background:#e01040"></div><div class="a" style="left:444px;top:787px;width:2px;height:1px;background:#c01030"></div><div class="a" style="left:450px;top:787px;width:2px;height:1px;background:#c01030"></div><div class="a" style="left:452px;top:787px;width:2px;height:1px;background:#c01030"></div><div class="a" style="left:456px;top:787px;width:2px;height:1px;background:#e01040"></div><div class="a" style="left:458px;top:787px;width:2px;height:1px;background:#c01030"></div><div class="a" style="left:464px;top:787px;width:2px;height:1px;background:#e01040"></div><div class="a" style="left:468px;top:787px;width:2px;height:1px;background:#e01040"></div><div class="a" style="left:470px;top:787px;width:2px;height:1px;background:#e01040"></div></body></html>
